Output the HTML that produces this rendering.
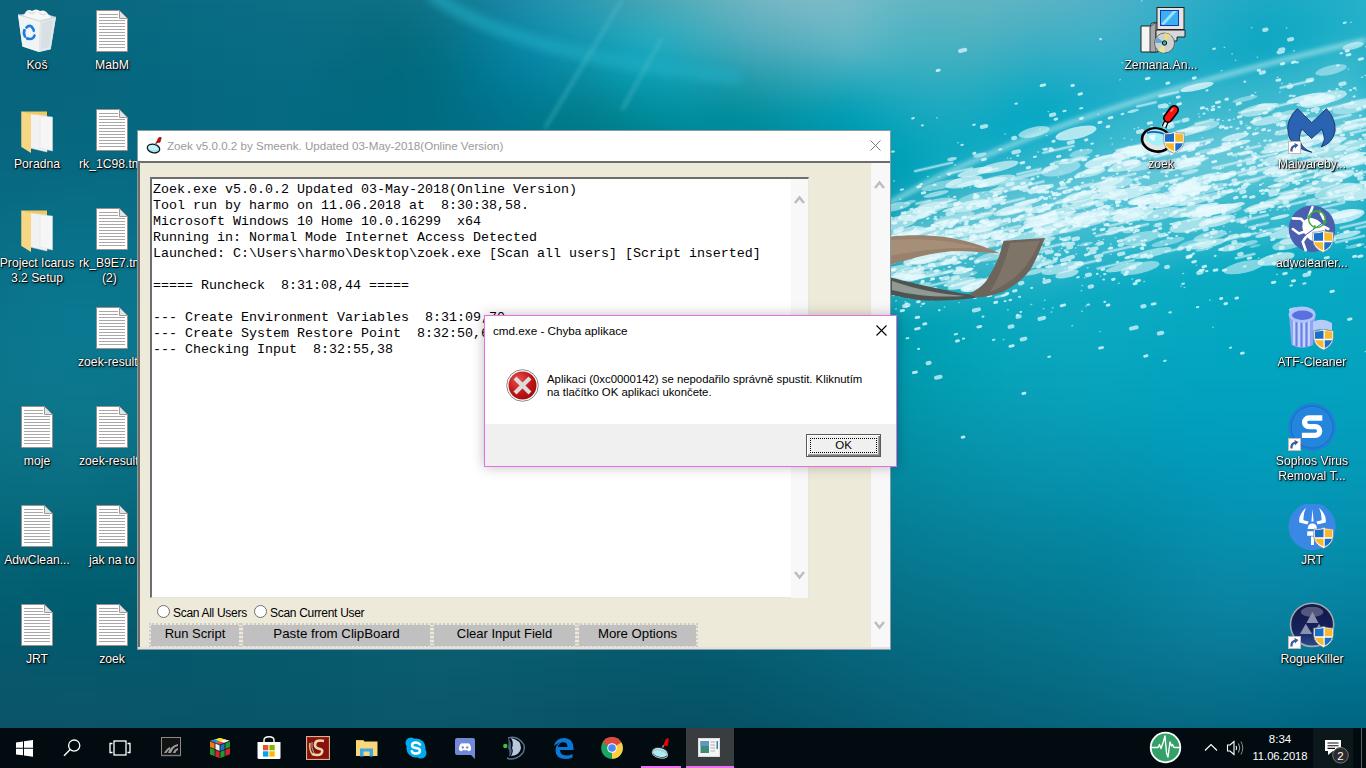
<!DOCTYPE html>
<html><head><meta charset="utf-8">
<style>
*{margin:0;padding:0;box-sizing:border-box}
html,body{width:1366px;height:768px;overflow:hidden;font-family:"Liberation Sans",sans-serif;background:#0a6078}
.a{position:absolute}
.lbl{position:absolute;width:76px;text-align:center;color:#fff;font-size:12.2px;line-height:15px;text-shadow:0 0 1px #000,1px 1px 1px #000,0 1px 3px rgba(0,0,0,.7)}
.ic{position:absolute}
#zw{position:absolute;left:137px;top:130px;width:754px;height:520px;background:#fff;border:1px solid #8a9aa0}
#zt{position:absolute;left:0;top:0;width:752px;height:31px;background:#fff}
#ztitle{position:absolute;left:29px;top:8px;font-size:11.6px;color:#9a9a9a;white-space:nowrap}
#zbody{position:absolute;left:0;top:30px;width:752px;height:488px;background:#EEEADA;border-top:2px solid #6d6d6d;border-left:2px solid #6d6d6d}
#tb{position:absolute;left:10px;top:14px;width:659px;height:421px;background:#fff;border-top:2px solid #6e6e6e;border-left:2px solid #6e6e6e;border-right:1px solid #e6e6e6;border-bottom:1px solid #e6e6e6}
#tbtext{position:absolute;left:1px;top:3px;font-family:"Liberation Mono",monospace;font-size:13.33px;line-height:16px;white-space:pre;color:#000}
.btn{position:absolute;top:462px;height:21px;background:#c0c0c0;font-size:13px;text-align:center;line-height:18px;color:#000;white-space:nowrap}
.dot{position:absolute;border:2px dotted #cfcdc3}
.radio{position:absolute;width:13px;height:13px;border-radius:50%;background:#fff;border:1px solid #6f6f6f}
.rl{position:absolute;font-size:12px;color:#000;white-space:nowrap;letter-spacing:-0.3px}
#dlg{position:absolute;left:484px;top:315px;width:413px;height:152px;background:#fff;border:1px solid #e46ee4;box-shadow:0 0 12px rgba(0,0,0,.25)}
#task{position:absolute;left:0;top:728px;width:1366px;height:40px;background:#020c10}
</style></head><body>
<svg id="bgsvg" width="1366" height="728" viewBox="0 0 1366 728" style="position:absolute;left:0;top:0"><defs>
<linearGradient id="gH" x1="0" y1="0" x2="1" y2="0">
 <stop offset="0" stop-color="#0b6077"/>
 <stop offset="0.3" stop-color="#0a6076"/>
 <stop offset="0.55" stop-color="#0c7890"/>
 <stop offset="0.68" stop-color="#1296ae"/>
 <stop offset="1" stop-color="#16a2ba"/>
</linearGradient>
<linearGradient id="gV" x1="0" y1="0" x2="0" y2="1">
 <stop offset="0" stop-color="#003040" stop-opacity="0"/>
 <stop offset="0.5" stop-color="#003040" stop-opacity="0"/>
 <stop offset="1" stop-color="#003040" stop-opacity="0.3"/>
</linearGradient>
<filter id="bgr" x="-2%" y="-4%" width="104%" height="108%" color-interpolation-filters="sRGB"><feGaussianBlur stdDeviation="7"/></filter>
<filter id="b60" x="-50%" y="-50%" width="200%" height="200%"><feGaussianBlur stdDeviation="60"/></filter>
<filter id="b40" x="-50%" y="-50%" width="200%" height="200%"><feGaussianBlur stdDeviation="40"/></filter>
<filter id="b25" x="-50%" y="-50%" width="200%" height="200%"><feGaussianBlur stdDeviation="25"/></filter>
<filter id="b15" x="-50%" y="-50%" width="200%" height="200%"><feGaussianBlur stdDeviation="15"/></filter>
<filter id="b12" x="-50%" y="-50%" width="200%" height="200%"><feGaussianBlur stdDeviation="12"/></filter>
<filter id="b6" x="-50%" y="-50%" width="200%" height="200%"><feGaussianBlur stdDeviation="6"/></filter>
<filter id="b4" x="-50%" y="-50%" width="200%" height="200%"><feGaussianBlur stdDeviation="4"/></filter>
<filter id="b2" x="-50%" y="-50%" width="200%" height="200%"><feGaussianBlur stdDeviation="2"/></filter>
<filter id="b1" x="-50%" y="-50%" width="200%" height="200%"><feGaussianBlur stdDeviation="0.7"/></filter>
</defs>
<rect width="1366" height="728" fill="#0a6a80"/><defs><linearGradient id="r0" gradientUnits="userSpaceOnUse" x1="-40" y1="0" x2="1406" y2="0"><stop offset="0.017" stop-color="#0d647c"/><stop offset="0.039" stop-color="#0d657d"/><stop offset="0.061" stop-color="#0c667e"/><stop offset="0.083" stop-color="#0c687f"/><stop offset="0.105" stop-color="#0c6981"/><stop offset="0.127" stop-color="#0d6b82"/><stop offset="0.149" stop-color="#0d6c83"/><stop offset="0.172" stop-color="#0e6d84"/><stop offset="0.194" stop-color="#106e85"/><stop offset="0.216" stop-color="#116f86"/><stop offset="0.238" stop-color="#126f86"/><stop offset="0.260" stop-color="#137086"/><stop offset="0.282" stop-color="#147186"/><stop offset="0.304" stop-color="#167488"/><stop offset="0.326" stop-color="#19788e"/><stop offset="0.349" stop-color="#1d7f96"/><stop offset="0.371" stop-color="#2386a0"/><stop offset="0.393" stop-color="#2a8ea8"/><stop offset="0.415" stop-color="#3496ad"/><stop offset="0.437" stop-color="#409caf"/><stop offset="0.459" stop-color="#4da1b0"/><stop offset="0.481" stop-color="#5aa7b3"/><stop offset="0.503" stop-color="#66adb9"/><stop offset="0.526" stop-color="#73b3be"/><stop offset="0.548" stop-color="#7db7c2"/><stop offset="0.570" stop-color="#84bac5"/><stop offset="0.592" stop-color="#86bcc7"/><stop offset="0.614" stop-color="#82bcc8"/><stop offset="0.636" stop-color="#78bbc6"/><stop offset="0.658" stop-color="#70b9c5"/><stop offset="0.680" stop-color="#6eb8c3"/><stop offset="0.703" stop-color="#6cb7c3"/><stop offset="0.725" stop-color="#6ab6c4"/><stop offset="0.747" stop-color="#65b5c5"/><stop offset="0.769" stop-color="#60b4c6"/><stop offset="0.791" stop-color="#58b3c7"/><stop offset="0.813" stop-color="#4eb1c7"/><stop offset="0.835" stop-color="#42afc7"/><stop offset="0.858" stop-color="#37adc6"/><stop offset="0.880" stop-color="#2cacc6"/><stop offset="0.902" stop-color="#26abc5"/><stop offset="0.924" stop-color="#25acc6"/><stop offset="0.946" stop-color="#27afc7"/><stop offset="0.968" stop-color="#2bb1c9"/><stop offset="0.990" stop-color="#2fb3ca"/><stop offset="1.012" stop-color="#31b4cb"/></linearGradient><linearGradient id="r1" gradientUnits="userSpaceOnUse" x1="-40" y1="0" x2="1406" y2="0"><stop offset="0.017" stop-color="#0c647c"/><stop offset="0.039" stop-color="#0b657c"/><stop offset="0.061" stop-color="#0b667e"/><stop offset="0.083" stop-color="#0b677f"/><stop offset="0.105" stop-color="#0a6980"/><stop offset="0.127" stop-color="#0b6a82"/><stop offset="0.149" stop-color="#0b6c83"/><stop offset="0.172" stop-color="#0c6d84"/><stop offset="0.194" stop-color="#0d6d85"/><stop offset="0.216" stop-color="#0e6e85"/><stop offset="0.238" stop-color="#0f6f85"/><stop offset="0.260" stop-color="#106f85"/><stop offset="0.282" stop-color="#116f84"/><stop offset="0.304" stop-color="#117186"/><stop offset="0.326" stop-color="#13768b"/><stop offset="0.349" stop-color="#177d95"/><stop offset="0.371" stop-color="#1c85a0"/><stop offset="0.393" stop-color="#228da9"/><stop offset="0.415" stop-color="#2b95ae"/><stop offset="0.437" stop-color="#369cb0"/><stop offset="0.459" stop-color="#43a1b1"/><stop offset="0.481" stop-color="#4fa7b4"/><stop offset="0.503" stop-color="#5cadba"/><stop offset="0.526" stop-color="#69b2be"/><stop offset="0.548" stop-color="#75b5c2"/><stop offset="0.570" stop-color="#7cb8c5"/><stop offset="0.592" stop-color="#7fbbc7"/><stop offset="0.614" stop-color="#7bbbc7"/><stop offset="0.636" stop-color="#70b9c6"/><stop offset="0.658" stop-color="#67b7c4"/><stop offset="0.680" stop-color="#66b6c3"/><stop offset="0.703" stop-color="#65b5c2"/><stop offset="0.725" stop-color="#62b5c3"/><stop offset="0.747" stop-color="#5eb4c5"/><stop offset="0.769" stop-color="#59b3c6"/><stop offset="0.791" stop-color="#52b2c8"/><stop offset="0.813" stop-color="#49b1c8"/><stop offset="0.835" stop-color="#3daec7"/><stop offset="0.858" stop-color="#30acc6"/><stop offset="0.880" stop-color="#26abc5"/><stop offset="0.902" stop-color="#1faac5"/><stop offset="0.924" stop-color="#1fabc6"/><stop offset="0.946" stop-color="#23aec7"/><stop offset="0.968" stop-color="#28b0c9"/><stop offset="0.990" stop-color="#2cb2ca"/><stop offset="1.012" stop-color="#2eb4cb"/></linearGradient><linearGradient id="r2" gradientUnits="userSpaceOnUse" x1="-40" y1="0" x2="1406" y2="0"><stop offset="0.017" stop-color="#0b647b"/><stop offset="0.039" stop-color="#0a657c"/><stop offset="0.061" stop-color="#09667d"/><stop offset="0.083" stop-color="#09677f"/><stop offset="0.105" stop-color="#096880"/><stop offset="0.127" stop-color="#096a81"/><stop offset="0.149" stop-color="#096b83"/><stop offset="0.172" stop-color="#0a6c84"/><stop offset="0.194" stop-color="#0b6d85"/><stop offset="0.216" stop-color="#0c6d85"/><stop offset="0.238" stop-color="#0d6e85"/><stop offset="0.260" stop-color="#0d6e84"/><stop offset="0.282" stop-color="#0d6e83"/><stop offset="0.304" stop-color="#0d6f83"/><stop offset="0.326" stop-color="#0e7389"/><stop offset="0.349" stop-color="#117b93"/><stop offset="0.371" stop-color="#1583a0"/><stop offset="0.393" stop-color="#1b8caa"/><stop offset="0.415" stop-color="#2294af"/><stop offset="0.437" stop-color="#2c9bb2"/><stop offset="0.459" stop-color="#37a1b3"/><stop offset="0.481" stop-color="#43a7b6"/><stop offset="0.503" stop-color="#4facbb"/><stop offset="0.526" stop-color="#5eb0be"/><stop offset="0.548" stop-color="#6ab3c1"/><stop offset="0.570" stop-color="#73b6c4"/><stop offset="0.592" stop-color="#77b9c6"/><stop offset="0.614" stop-color="#75bac7"/><stop offset="0.636" stop-color="#68b8c6"/><stop offset="0.658" stop-color="#5eb6c3"/><stop offset="0.680" stop-color="#5eb5c2"/><stop offset="0.703" stop-color="#5eb4c2"/><stop offset="0.725" stop-color="#5ab3c3"/><stop offset="0.747" stop-color="#55b3c4"/><stop offset="0.769" stop-color="#51b2c6"/><stop offset="0.791" stop-color="#4cb1c8"/><stop offset="0.813" stop-color="#43b0c8"/><stop offset="0.835" stop-color="#37aec7"/><stop offset="0.858" stop-color="#2bacc6"/><stop offset="0.880" stop-color="#20aac5"/><stop offset="0.902" stop-color="#19a9c4"/><stop offset="0.924" stop-color="#19abc5"/><stop offset="0.946" stop-color="#1fadc7"/><stop offset="0.968" stop-color="#25b0c9"/><stop offset="0.990" stop-color="#29b2ca"/><stop offset="1.012" stop-color="#2cb3cb"/></linearGradient><linearGradient id="r3" gradientUnits="userSpaceOnUse" x1="-40" y1="0" x2="1406" y2="0"><stop offset="0.017" stop-color="#09647b"/><stop offset="0.039" stop-color="#09647c"/><stop offset="0.061" stop-color="#08657d"/><stop offset="0.083" stop-color="#08677e"/><stop offset="0.105" stop-color="#086880"/><stop offset="0.127" stop-color="#086981"/><stop offset="0.149" stop-color="#086b82"/><stop offset="0.172" stop-color="#086c84"/><stop offset="0.194" stop-color="#096c84"/><stop offset="0.216" stop-color="#0a6d85"/><stop offset="0.238" stop-color="#0b6d85"/><stop offset="0.260" stop-color="#0b6d83"/><stop offset="0.282" stop-color="#0a6c81"/><stop offset="0.304" stop-color="#096d81"/><stop offset="0.326" stop-color="#0a7186"/><stop offset="0.349" stop-color="#0c7992"/><stop offset="0.371" stop-color="#0f829f"/><stop offset="0.393" stop-color="#148baa"/><stop offset="0.415" stop-color="#1a93af"/><stop offset="0.437" stop-color="#229bb3"/><stop offset="0.459" stop-color="#2aa3b8"/><stop offset="0.481" stop-color="#35a9bb"/><stop offset="0.503" stop-color="#42acbc"/><stop offset="0.526" stop-color="#51aebd"/><stop offset="0.548" stop-color="#5fb0bf"/><stop offset="0.570" stop-color="#67b3c2"/><stop offset="0.592" stop-color="#6db6c5"/><stop offset="0.614" stop-color="#6db8c7"/><stop offset="0.636" stop-color="#60b7c5"/><stop offset="0.658" stop-color="#56b4c3"/><stop offset="0.680" stop-color="#55b3c1"/><stop offset="0.703" stop-color="#56b3c1"/><stop offset="0.725" stop-color="#51b2c2"/><stop offset="0.747" stop-color="#4cb1c4"/><stop offset="0.769" stop-color="#48b1c6"/><stop offset="0.791" stop-color="#45b1c8"/><stop offset="0.813" stop-color="#3cafc8"/><stop offset="0.835" stop-color="#31adc7"/><stop offset="0.858" stop-color="#25abc6"/><stop offset="0.880" stop-color="#1aa9c5"/><stop offset="0.902" stop-color="#13a8c4"/><stop offset="0.924" stop-color="#15aac5"/><stop offset="0.946" stop-color="#1cadc7"/><stop offset="0.968" stop-color="#22b0c9"/><stop offset="0.990" stop-color="#26b2ca"/><stop offset="1.012" stop-color="#29b3ca"/></linearGradient><linearGradient id="r4" gradientUnits="userSpaceOnUse" x1="-40" y1="0" x2="1406" y2="0"><stop offset="0.017" stop-color="#09637b"/><stop offset="0.039" stop-color="#08647c"/><stop offset="0.061" stop-color="#07657d"/><stop offset="0.083" stop-color="#07667e"/><stop offset="0.105" stop-color="#07687f"/><stop offset="0.127" stop-color="#076981"/><stop offset="0.149" stop-color="#066a82"/><stop offset="0.172" stop-color="#076b83"/><stop offset="0.194" stop-color="#086c84"/><stop offset="0.216" stop-color="#096c85"/><stop offset="0.238" stop-color="#096c84"/><stop offset="0.260" stop-color="#086c82"/><stop offset="0.282" stop-color="#076b80"/><stop offset="0.304" stop-color="#066b7f"/><stop offset="0.326" stop-color="#066f84"/><stop offset="0.349" stop-color="#077790"/><stop offset="0.371" stop-color="#0a809d"/><stop offset="0.393" stop-color="#0d89a9"/><stop offset="0.415" stop-color="#1391ae"/><stop offset="0.437" stop-color="#1899b3"/><stop offset="0.459" stop-color="#1da4bb"/><stop offset="0.481" stop-color="#26aabf"/><stop offset="0.503" stop-color="#34aabc"/><stop offset="0.526" stop-color="#43aabb"/><stop offset="0.548" stop-color="#51acbc"/><stop offset="0.570" stop-color="#59afbe"/><stop offset="0.592" stop-color="#60b3c2"/><stop offset="0.614" stop-color="#63b6c5"/><stop offset="0.636" stop-color="#57b5c4"/><stop offset="0.658" stop-color="#4db3c2"/><stop offset="0.680" stop-color="#4cb2c1"/><stop offset="0.703" stop-color="#4db1c0"/><stop offset="0.725" stop-color="#46b0c2"/><stop offset="0.747" stop-color="#40afc4"/><stop offset="0.769" stop-color="#3eb0c6"/><stop offset="0.791" stop-color="#3cb0c8"/><stop offset="0.813" stop-color="#35aec8"/><stop offset="0.835" stop-color="#2badc7"/><stop offset="0.858" stop-color="#21abc6"/><stop offset="0.880" stop-color="#17a9c5"/><stop offset="0.902" stop-color="#10a8c4"/><stop offset="0.924" stop-color="#12aac5"/><stop offset="0.946" stop-color="#19adc7"/><stop offset="0.968" stop-color="#20b0c8"/><stop offset="0.990" stop-color="#24b1c9"/><stop offset="1.012" stop-color="#26b3ca"/></linearGradient><linearGradient id="r5" gradientUnits="userSpaceOnUse" x1="-40" y1="0" x2="1406" y2="0"><stop offset="0.017" stop-color="#08647c"/><stop offset="0.039" stop-color="#07647c"/><stop offset="0.061" stop-color="#07657d"/><stop offset="0.083" stop-color="#07667e"/><stop offset="0.105" stop-color="#06677f"/><stop offset="0.127" stop-color="#066980"/><stop offset="0.149" stop-color="#066a82"/><stop offset="0.172" stop-color="#066a83"/><stop offset="0.194" stop-color="#076b83"/><stop offset="0.216" stop-color="#086c84"/><stop offset="0.238" stop-color="#086c84"/><stop offset="0.260" stop-color="#076b82"/><stop offset="0.282" stop-color="#056a7f"/><stop offset="0.304" stop-color="#046a7e"/><stop offset="0.326" stop-color="#036e83"/><stop offset="0.349" stop-color="#04758e"/><stop offset="0.371" stop-color="#057d9b"/><stop offset="0.393" stop-color="#0886a6"/><stop offset="0.415" stop-color="#0c8daa"/><stop offset="0.437" stop-color="#1096af"/><stop offset="0.459" stop-color="#12a2ba"/><stop offset="0.481" stop-color="#19a7be"/><stop offset="0.503" stop-color="#26a6b9"/><stop offset="0.526" stop-color="#33a5b6"/><stop offset="0.548" stop-color="#40a6b7"/><stop offset="0.570" stop-color="#48a9ba"/><stop offset="0.592" stop-color="#4eaebe"/><stop offset="0.614" stop-color="#53b2c3"/><stop offset="0.636" stop-color="#4ab2c3"/><stop offset="0.658" stop-color="#43b0c1"/><stop offset="0.680" stop-color="#42b0c0"/><stop offset="0.703" stop-color="#42afc0"/><stop offset="0.725" stop-color="#3aaec2"/><stop offset="0.747" stop-color="#33aec4"/><stop offset="0.769" stop-color="#32aec6"/><stop offset="0.791" stop-color="#32aec8"/><stop offset="0.813" stop-color="#2eaec8"/><stop offset="0.835" stop-color="#26adc7"/><stop offset="0.858" stop-color="#1dabc6"/><stop offset="0.880" stop-color="#14a9c5"/><stop offset="0.902" stop-color="#0ea8c4"/><stop offset="0.924" stop-color="#10aac5"/><stop offset="0.946" stop-color="#17adc7"/><stop offset="0.968" stop-color="#1dafc8"/><stop offset="0.990" stop-color="#21b1c9"/><stop offset="1.012" stop-color="#24b2ca"/></linearGradient><linearGradient id="r6" gradientUnits="userSpaceOnUse" x1="-40" y1="0" x2="1406" y2="0"><stop offset="0.017" stop-color="#08647c"/><stop offset="0.039" stop-color="#07647d"/><stop offset="0.061" stop-color="#06657d"/><stop offset="0.083" stop-color="#06667e"/><stop offset="0.105" stop-color="#06677f"/><stop offset="0.127" stop-color="#066880"/><stop offset="0.149" stop-color="#066981"/><stop offset="0.172" stop-color="#066a82"/><stop offset="0.194" stop-color="#066a83"/><stop offset="0.216" stop-color="#076b84"/><stop offset="0.238" stop-color="#066b83"/><stop offset="0.260" stop-color="#056a81"/><stop offset="0.282" stop-color="#046a7f"/><stop offset="0.304" stop-color="#026a7f"/><stop offset="0.326" stop-color="#016d82"/><stop offset="0.349" stop-color="#01738c"/><stop offset="0.371" stop-color="#027b97"/><stop offset="0.393" stop-color="#0482a0"/><stop offset="0.415" stop-color="#0889a3"/><stop offset="0.437" stop-color="#0b91a7"/><stop offset="0.459" stop-color="#0b9bb2"/><stop offset="0.481" stop-color="#10a1b7"/><stop offset="0.503" stop-color="#19a0b3"/><stop offset="0.526" stop-color="#249eb0"/><stop offset="0.548" stop-color="#2e9fb0"/><stop offset="0.570" stop-color="#35a3b4"/><stop offset="0.592" stop-color="#39a8ba"/><stop offset="0.614" stop-color="#3bacbf"/><stop offset="0.636" stop-color="#38aec0"/><stop offset="0.658" stop-color="#36aec0"/><stop offset="0.680" stop-color="#37aec0"/><stop offset="0.703" stop-color="#34aec0"/><stop offset="0.725" stop-color="#2cacc2"/><stop offset="0.747" stop-color="#25acc4"/><stop offset="0.769" stop-color="#26acc6"/><stop offset="0.791" stop-color="#28adc8"/><stop offset="0.813" stop-color="#27adc8"/><stop offset="0.835" stop-color="#21acc8"/><stop offset="0.858" stop-color="#1aabc7"/><stop offset="0.880" stop-color="#12aac5"/><stop offset="0.902" stop-color="#0ea9c5"/><stop offset="0.924" stop-color="#0faac5"/><stop offset="0.946" stop-color="#15adc7"/><stop offset="0.968" stop-color="#1aafc8"/><stop offset="0.990" stop-color="#1eb0c9"/><stop offset="1.012" stop-color="#21b1ca"/></linearGradient><linearGradient id="r7" gradientUnits="userSpaceOnUse" x1="-40" y1="0" x2="1406" y2="0"><stop offset="0.017" stop-color="#07647c"/><stop offset="0.039" stop-color="#07657d"/><stop offset="0.061" stop-color="#06667e"/><stop offset="0.083" stop-color="#06667e"/><stop offset="0.105" stop-color="#06677f"/><stop offset="0.127" stop-color="#066880"/><stop offset="0.149" stop-color="#066880"/><stop offset="0.172" stop-color="#066981"/><stop offset="0.194" stop-color="#066a82"/><stop offset="0.216" stop-color="#066a83"/><stop offset="0.238" stop-color="#056a83"/><stop offset="0.260" stop-color="#046a81"/><stop offset="0.282" stop-color="#02697f"/><stop offset="0.304" stop-color="#016a7f"/><stop offset="0.326" stop-color="#006c82"/><stop offset="0.349" stop-color="#00728a"/><stop offset="0.371" stop-color="#007893"/><stop offset="0.393" stop-color="#027e99"/><stop offset="0.415" stop-color="#04849b"/><stop offset="0.437" stop-color="#078a9d"/><stop offset="0.459" stop-color="#0793a7"/><stop offset="0.481" stop-color="#099aad"/><stop offset="0.503" stop-color="#0f99ac"/><stop offset="0.526" stop-color="#1597a8"/><stop offset="0.548" stop-color="#1c98a8"/><stop offset="0.570" stop-color="#229dae"/><stop offset="0.592" stop-color="#24a2b5"/><stop offset="0.614" stop-color="#23a6ba"/><stop offset="0.636" stop-color="#26a9bd"/><stop offset="0.658" stop-color="#29abbf"/><stop offset="0.680" stop-color="#2bacc0"/><stop offset="0.703" stop-color="#27acc1"/><stop offset="0.725" stop-color="#1eabc2"/><stop offset="0.747" stop-color="#17aac4"/><stop offset="0.769" stop-color="#1babc6"/><stop offset="0.791" stop-color="#1facc8"/><stop offset="0.813" stop-color="#20adc8"/><stop offset="0.835" stop-color="#1dadc8"/><stop offset="0.858" stop-color="#18acc7"/><stop offset="0.880" stop-color="#12aac6"/><stop offset="0.902" stop-color="#0eaac5"/><stop offset="0.924" stop-color="#0fabc6"/><stop offset="0.946" stop-color="#13adc7"/><stop offset="0.968" stop-color="#18afc8"/><stop offset="0.990" stop-color="#1cb0c9"/><stop offset="1.012" stop-color="#1fb1c9"/></linearGradient><linearGradient id="r8" gradientUnits="userSpaceOnUse" x1="-40" y1="0" x2="1406" y2="0"><stop offset="0.017" stop-color="#07657d"/><stop offset="0.039" stop-color="#07657d"/><stop offset="0.061" stop-color="#06667e"/><stop offset="0.083" stop-color="#06677f"/><stop offset="0.105" stop-color="#06677f"/><stop offset="0.127" stop-color="#066880"/><stop offset="0.149" stop-color="#066880"/><stop offset="0.172" stop-color="#066981"/><stop offset="0.194" stop-color="#066982"/><stop offset="0.216" stop-color="#056a82"/><stop offset="0.238" stop-color="#046a82"/><stop offset="0.260" stop-color="#036a81"/><stop offset="0.282" stop-color="#026980"/><stop offset="0.304" stop-color="#006a80"/><stop offset="0.326" stop-color="#006c82"/><stop offset="0.349" stop-color="#007088"/><stop offset="0.371" stop-color="#00758f"/><stop offset="0.393" stop-color="#007a93"/><stop offset="0.415" stop-color="#027f94"/><stop offset="0.437" stop-color="#048394"/><stop offset="0.459" stop-color="#038b9c"/><stop offset="0.481" stop-color="#0392a4"/><stop offset="0.503" stop-color="#0693a4"/><stop offset="0.526" stop-color="#0991a1"/><stop offset="0.548" stop-color="#0d92a2"/><stop offset="0.570" stop-color="#1197a9"/><stop offset="0.592" stop-color="#109cb0"/><stop offset="0.614" stop-color="#0da0b6"/><stop offset="0.636" stop-color="#15a5bb"/><stop offset="0.658" stop-color="#1ca8be"/><stop offset="0.680" stop-color="#20aac0"/><stop offset="0.703" stop-color="#1caac1"/><stop offset="0.725" stop-color="#12a9c3"/><stop offset="0.747" stop-color="#0ba9c4"/><stop offset="0.769" stop-color="#11aac6"/><stop offset="0.791" stop-color="#17acc8"/><stop offset="0.813" stop-color="#1aadc8"/><stop offset="0.835" stop-color="#19adc8"/><stop offset="0.858" stop-color="#16acc7"/><stop offset="0.880" stop-color="#12abc6"/><stop offset="0.902" stop-color="#0eabc6"/><stop offset="0.924" stop-color="#0fabc6"/><stop offset="0.946" stop-color="#12adc7"/><stop offset="0.968" stop-color="#16aec8"/><stop offset="0.990" stop-color="#1aafc8"/><stop offset="1.012" stop-color="#1db0c9"/></linearGradient><linearGradient id="r9" gradientUnits="userSpaceOnUse" x1="-40" y1="0" x2="1406" y2="0"><stop offset="0.017" stop-color="#07657d"/><stop offset="0.039" stop-color="#07667e"/><stop offset="0.061" stop-color="#06677f"/><stop offset="0.083" stop-color="#06677f"/><stop offset="0.105" stop-color="#066880"/><stop offset="0.127" stop-color="#066880"/><stop offset="0.149" stop-color="#066880"/><stop offset="0.172" stop-color="#066981"/><stop offset="0.194" stop-color="#056981"/><stop offset="0.216" stop-color="#056a82"/><stop offset="0.238" stop-color="#046a81"/><stop offset="0.260" stop-color="#036980"/><stop offset="0.282" stop-color="#016980"/><stop offset="0.304" stop-color="#006a80"/><stop offset="0.326" stop-color="#006c82"/><stop offset="0.349" stop-color="#006f86"/><stop offset="0.371" stop-color="#00738b"/><stop offset="0.393" stop-color="#00778d"/><stop offset="0.415" stop-color="#007a8d"/><stop offset="0.437" stop-color="#017e8d"/><stop offset="0.459" stop-color="#008594"/><stop offset="0.481" stop-color="#008b9b"/><stop offset="0.503" stop-color="#008d9d"/><stop offset="0.526" stop-color="#008c9c"/><stop offset="0.548" stop-color="#018d9d"/><stop offset="0.570" stop-color="#0392a4"/><stop offset="0.592" stop-color="#0197ac"/><stop offset="0.614" stop-color="#009cb3"/><stop offset="0.636" stop-color="#08a2b8"/><stop offset="0.658" stop-color="#12a6bd"/><stop offset="0.680" stop-color="#17a9c0"/><stop offset="0.703" stop-color="#14a9c2"/><stop offset="0.725" stop-color="#0aa8c3"/><stop offset="0.747" stop-color="#05a8c5"/><stop offset="0.769" stop-color="#0baac7"/><stop offset="0.791" stop-color="#12abc8"/><stop offset="0.813" stop-color="#16adc8"/><stop offset="0.835" stop-color="#17adc8"/><stop offset="0.858" stop-color="#15adc8"/><stop offset="0.880" stop-color="#12acc7"/><stop offset="0.902" stop-color="#0facc6"/><stop offset="0.924" stop-color="#0facc6"/><stop offset="0.946" stop-color="#11adc7"/><stop offset="0.968" stop-color="#14aec7"/><stop offset="0.990" stop-color="#18afc8"/><stop offset="1.012" stop-color="#1ab0c8"/></linearGradient><linearGradient id="r10" gradientUnits="userSpaceOnUse" x1="-40" y1="0" x2="1406" y2="0"><stop offset="0.017" stop-color="#07667e"/><stop offset="0.039" stop-color="#07677f"/><stop offset="0.061" stop-color="#07677f"/><stop offset="0.083" stop-color="#066880"/><stop offset="0.105" stop-color="#066880"/><stop offset="0.127" stop-color="#066880"/><stop offset="0.149" stop-color="#066880"/><stop offset="0.172" stop-color="#066981"/><stop offset="0.194" stop-color="#056981"/><stop offset="0.216" stop-color="#056981"/><stop offset="0.238" stop-color="#046981"/><stop offset="0.260" stop-color="#026980"/><stop offset="0.282" stop-color="#016980"/><stop offset="0.304" stop-color="#006a80"/><stop offset="0.326" stop-color="#006b81"/><stop offset="0.349" stop-color="#006e84"/><stop offset="0.371" stop-color="#007187"/><stop offset="0.393" stop-color="#007489"/><stop offset="0.415" stop-color="#007788"/><stop offset="0.437" stop-color="#007a89"/><stop offset="0.459" stop-color="#00808e"/><stop offset="0.481" stop-color="#008594"/><stop offset="0.503" stop-color="#008897"/><stop offset="0.526" stop-color="#008898"/><stop offset="0.548" stop-color="#008a9a"/><stop offset="0.570" stop-color="#008ea1"/><stop offset="0.592" stop-color="#0094a9"/><stop offset="0.614" stop-color="#0099b0"/><stop offset="0.636" stop-color="#009fb6"/><stop offset="0.658" stop-color="#0aa4bc"/><stop offset="0.680" stop-color="#11a8bf"/><stop offset="0.703" stop-color="#0fa9c2"/><stop offset="0.725" stop-color="#07a8c4"/><stop offset="0.747" stop-color="#03a8c5"/><stop offset="0.769" stop-color="#08aac7"/><stop offset="0.791" stop-color="#0eabc8"/><stop offset="0.813" stop-color="#13adc8"/><stop offset="0.835" stop-color="#15aec8"/><stop offset="0.858" stop-color="#15aec8"/><stop offset="0.880" stop-color="#12adc7"/><stop offset="0.902" stop-color="#0facc6"/><stop offset="0.924" stop-color="#0facc6"/><stop offset="0.946" stop-color="#10adc7"/><stop offset="0.968" stop-color="#13aec7"/><stop offset="0.990" stop-color="#16aec8"/><stop offset="1.012" stop-color="#18afc8"/></linearGradient><linearGradient id="r11" gradientUnits="userSpaceOnUse" x1="-40" y1="0" x2="1406" y2="0"><stop offset="0.017" stop-color="#08677f"/><stop offset="0.039" stop-color="#076780"/><stop offset="0.061" stop-color="#076880"/><stop offset="0.083" stop-color="#076981"/><stop offset="0.105" stop-color="#076981"/><stop offset="0.127" stop-color="#066981"/><stop offset="0.149" stop-color="#066981"/><stop offset="0.172" stop-color="#066981"/><stop offset="0.194" stop-color="#066981"/><stop offset="0.216" stop-color="#056a81"/><stop offset="0.238" stop-color="#046981"/><stop offset="0.260" stop-color="#026980"/><stop offset="0.282" stop-color="#01697f"/><stop offset="0.304" stop-color="#006a80"/><stop offset="0.326" stop-color="#006b81"/><stop offset="0.349" stop-color="#006d82"/><stop offset="0.371" stop-color="#006f84"/><stop offset="0.393" stop-color="#007285"/><stop offset="0.415" stop-color="#007585"/><stop offset="0.437" stop-color="#007886"/><stop offset="0.459" stop-color="#007d8a"/><stop offset="0.481" stop-color="#008190"/><stop offset="0.503" stop-color="#008493"/><stop offset="0.526" stop-color="#008595"/><stop offset="0.548" stop-color="#008799"/><stop offset="0.570" stop-color="#008c9f"/><stop offset="0.592" stop-color="#0091a7"/><stop offset="0.614" stop-color="#0097ae"/><stop offset="0.636" stop-color="#009db5"/><stop offset="0.658" stop-color="#05a3bb"/><stop offset="0.680" stop-color="#0ca7bf"/><stop offset="0.703" stop-color="#0ca8c2"/><stop offset="0.725" stop-color="#07a8c4"/><stop offset="0.747" stop-color="#04a9c6"/><stop offset="0.769" stop-color="#07aac7"/><stop offset="0.791" stop-color="#0cacc8"/><stop offset="0.813" stop-color="#11adc8"/><stop offset="0.835" stop-color="#14aec8"/><stop offset="0.858" stop-color="#14aec8"/><stop offset="0.880" stop-color="#12aec7"/><stop offset="0.902" stop-color="#10adc7"/><stop offset="0.924" stop-color="#0fadc6"/><stop offset="0.946" stop-color="#10adc6"/><stop offset="0.968" stop-color="#12adc7"/><stop offset="0.990" stop-color="#14aec7"/><stop offset="1.012" stop-color="#17aec7"/></linearGradient><linearGradient id="r12" gradientUnits="userSpaceOnUse" x1="-40" y1="0" x2="1406" y2="0"><stop offset="0.017" stop-color="#086880"/><stop offset="0.039" stop-color="#086881"/><stop offset="0.061" stop-color="#076981"/><stop offset="0.083" stop-color="#076a82"/><stop offset="0.105" stop-color="#076a82"/><stop offset="0.127" stop-color="#076a82"/><stop offset="0.149" stop-color="#076a82"/><stop offset="0.172" stop-color="#066a81"/><stop offset="0.194" stop-color="#066a81"/><stop offset="0.216" stop-color="#056a81"/><stop offset="0.238" stop-color="#046980"/><stop offset="0.260" stop-color="#026980"/><stop offset="0.282" stop-color="#01697f"/><stop offset="0.304" stop-color="#006a7f"/><stop offset="0.326" stop-color="#006b80"/><stop offset="0.349" stop-color="#006c81"/><stop offset="0.371" stop-color="#006e82"/><stop offset="0.393" stop-color="#007083"/><stop offset="0.415" stop-color="#007383"/><stop offset="0.437" stop-color="#007684"/><stop offset="0.459" stop-color="#007a88"/><stop offset="0.481" stop-color="#007e8c"/><stop offset="0.503" stop-color="#008190"/><stop offset="0.526" stop-color="#008393"/><stop offset="0.548" stop-color="#008698"/><stop offset="0.570" stop-color="#008a9e"/><stop offset="0.592" stop-color="#0090a5"/><stop offset="0.614" stop-color="#0096ad"/><stop offset="0.636" stop-color="#009cb4"/><stop offset="0.658" stop-color="#01a2ba"/><stop offset="0.680" stop-color="#09a6bf"/><stop offset="0.703" stop-color="#0ba8c2"/><stop offset="0.725" stop-color="#09a9c4"/><stop offset="0.747" stop-color="#06a9c6"/><stop offset="0.769" stop-color="#08aac7"/><stop offset="0.791" stop-color="#0cacc8"/><stop offset="0.813" stop-color="#10adc8"/><stop offset="0.835" stop-color="#13afc8"/><stop offset="0.858" stop-color="#14afc8"/><stop offset="0.880" stop-color="#12aec7"/><stop offset="0.902" stop-color="#10adc7"/><stop offset="0.924" stop-color="#0fadc6"/><stop offset="0.946" stop-color="#0fadc6"/><stop offset="0.968" stop-color="#11adc6"/><stop offset="0.990" stop-color="#13adc7"/><stop offset="1.012" stop-color="#15aec7"/></linearGradient><linearGradient id="r13" gradientUnits="userSpaceOnUse" x1="-40" y1="0" x2="1406" y2="0"><stop offset="0.017" stop-color="#086981"/><stop offset="0.039" stop-color="#086a82"/><stop offset="0.061" stop-color="#086b83"/><stop offset="0.083" stop-color="#076b83"/><stop offset="0.105" stop-color="#076c84"/><stop offset="0.127" stop-color="#076b83"/><stop offset="0.149" stop-color="#076b83"/><stop offset="0.172" stop-color="#076b82"/><stop offset="0.194" stop-color="#066a81"/><stop offset="0.216" stop-color="#056a81"/><stop offset="0.238" stop-color="#046a80"/><stop offset="0.260" stop-color="#03697f"/><stop offset="0.282" stop-color="#01697f"/><stop offset="0.304" stop-color="#006a7f"/><stop offset="0.326" stop-color="#006a7f"/><stop offset="0.349" stop-color="#006c80"/><stop offset="0.371" stop-color="#006d81"/><stop offset="0.393" stop-color="#006f81"/><stop offset="0.415" stop-color="#007281"/><stop offset="0.437" stop-color="#007583"/><stop offset="0.459" stop-color="#007886"/><stop offset="0.481" stop-color="#007c8b"/><stop offset="0.503" stop-color="#007f8f"/><stop offset="0.526" stop-color="#008293"/><stop offset="0.548" stop-color="#008597"/><stop offset="0.570" stop-color="#008a9d"/><stop offset="0.592" stop-color="#008fa4"/><stop offset="0.614" stop-color="#0095ac"/><stop offset="0.636" stop-color="#009bb3"/><stop offset="0.658" stop-color="#00a1b9"/><stop offset="0.680" stop-color="#08a5be"/><stop offset="0.703" stop-color="#0ca8c2"/><stop offset="0.725" stop-color="#0ca9c4"/><stop offset="0.747" stop-color="#0aaac6"/><stop offset="0.769" stop-color="#0aabc7"/><stop offset="0.791" stop-color="#0cacc8"/><stop offset="0.813" stop-color="#0faec8"/><stop offset="0.835" stop-color="#12afc8"/><stop offset="0.858" stop-color="#13afc8"/><stop offset="0.880" stop-color="#11aec7"/><stop offset="0.902" stop-color="#0fadc6"/><stop offset="0.924" stop-color="#0eadc6"/><stop offset="0.946" stop-color="#0eacc6"/><stop offset="0.968" stop-color="#0facc6"/><stop offset="0.990" stop-color="#11adc6"/><stop offset="1.012" stop-color="#13adc6"/></linearGradient><linearGradient id="r14" gradientUnits="userSpaceOnUse" x1="-40" y1="0" x2="1406" y2="0"><stop offset="0.017" stop-color="#086a82"/><stop offset="0.039" stop-color="#086b83"/><stop offset="0.061" stop-color="#086c84"/><stop offset="0.083" stop-color="#086d85"/><stop offset="0.105" stop-color="#076d85"/><stop offset="0.127" stop-color="#076d84"/><stop offset="0.149" stop-color="#076c84"/><stop offset="0.172" stop-color="#076c83"/><stop offset="0.194" stop-color="#066b82"/><stop offset="0.216" stop-color="#056a81"/><stop offset="0.238" stop-color="#046a80"/><stop offset="0.260" stop-color="#036a7f"/><stop offset="0.282" stop-color="#02697f"/><stop offset="0.304" stop-color="#006a7f"/><stop offset="0.326" stop-color="#006a7f"/><stop offset="0.349" stop-color="#006b7f"/><stop offset="0.371" stop-color="#006d80"/><stop offset="0.393" stop-color="#006f80"/><stop offset="0.415" stop-color="#007181"/><stop offset="0.437" stop-color="#007482"/><stop offset="0.459" stop-color="#007786"/><stop offset="0.481" stop-color="#007b8a"/><stop offset="0.503" stop-color="#007e8e"/><stop offset="0.526" stop-color="#008192"/><stop offset="0.548" stop-color="#008597"/><stop offset="0.570" stop-color="#00899d"/><stop offset="0.592" stop-color="#008fa4"/><stop offset="0.614" stop-color="#0095ab"/><stop offset="0.636" stop-color="#009bb2"/><stop offset="0.658" stop-color="#00a0b8"/><stop offset="0.680" stop-color="#08a5bd"/><stop offset="0.703" stop-color="#0ea8c1"/><stop offset="0.725" stop-color="#0faac4"/><stop offset="0.747" stop-color="#0dabc6"/><stop offset="0.769" stop-color="#0cacc7"/><stop offset="0.791" stop-color="#0dadc7"/><stop offset="0.813" stop-color="#0faec8"/><stop offset="0.835" stop-color="#11afc8"/><stop offset="0.858" stop-color="#11afc7"/><stop offset="0.880" stop-color="#10aec6"/><stop offset="0.902" stop-color="#0eadc6"/><stop offset="0.924" stop-color="#0dacc6"/><stop offset="0.946" stop-color="#0dacc6"/><stop offset="0.968" stop-color="#0eacc6"/><stop offset="0.990" stop-color="#10acc6"/><stop offset="1.012" stop-color="#12acc6"/></linearGradient><linearGradient id="r15" gradientUnits="userSpaceOnUse" x1="-40" y1="0" x2="1406" y2="0"><stop offset="0.017" stop-color="#096c84"/><stop offset="0.039" stop-color="#086d85"/><stop offset="0.061" stop-color="#086e86"/><stop offset="0.083" stop-color="#086e87"/><stop offset="0.105" stop-color="#086e86"/><stop offset="0.127" stop-color="#086e86"/><stop offset="0.149" stop-color="#086d85"/><stop offset="0.172" stop-color="#076c83"/><stop offset="0.194" stop-color="#076c82"/><stop offset="0.216" stop-color="#066b81"/><stop offset="0.238" stop-color="#056a80"/><stop offset="0.260" stop-color="#046a7f"/><stop offset="0.282" stop-color="#026a7f"/><stop offset="0.304" stop-color="#016a7e"/><stop offset="0.326" stop-color="#006a7e"/><stop offset="0.349" stop-color="#006b7f"/><stop offset="0.371" stop-color="#006d7f"/><stop offset="0.393" stop-color="#006e80"/><stop offset="0.415" stop-color="#007180"/><stop offset="0.437" stop-color="#007482"/><stop offset="0.459" stop-color="#007786"/><stop offset="0.481" stop-color="#007b8a"/><stop offset="0.503" stop-color="#007e8f"/><stop offset="0.526" stop-color="#008193"/><stop offset="0.548" stop-color="#008598"/><stop offset="0.570" stop-color="#00899e"/><stop offset="0.592" stop-color="#008fa4"/><stop offset="0.614" stop-color="#0094ab"/><stop offset="0.636" stop-color="#009ab1"/><stop offset="0.658" stop-color="#00a0b8"/><stop offset="0.680" stop-color="#08a5bd"/><stop offset="0.703" stop-color="#0fa8c1"/><stop offset="0.725" stop-color="#12aac4"/><stop offset="0.747" stop-color="#10abc6"/><stop offset="0.769" stop-color="#0eacc7"/><stop offset="0.791" stop-color="#0eadc7"/><stop offset="0.813" stop-color="#0faec7"/><stop offset="0.835" stop-color="#10aec7"/><stop offset="0.858" stop-color="#10aec6"/><stop offset="0.880" stop-color="#0faec6"/><stop offset="0.902" stop-color="#0dadc5"/><stop offset="0.924" stop-color="#0cacc5"/><stop offset="0.946" stop-color="#0cacc5"/><stop offset="0.968" stop-color="#0dabc5"/><stop offset="0.990" stop-color="#0eabc5"/><stop offset="1.012" stop-color="#10abc5"/></linearGradient><linearGradient id="r16" gradientUnits="userSpaceOnUse" x1="-40" y1="0" x2="1406" y2="0"><stop offset="0.017" stop-color="#096d85"/><stop offset="0.039" stop-color="#096e86"/><stop offset="0.061" stop-color="#086f88"/><stop offset="0.083" stop-color="#087088"/><stop offset="0.105" stop-color="#087088"/><stop offset="0.127" stop-color="#086f87"/><stop offset="0.149" stop-color="#086e86"/><stop offset="0.172" stop-color="#086d84"/><stop offset="0.194" stop-color="#076c83"/><stop offset="0.216" stop-color="#066b81"/><stop offset="0.238" stop-color="#056b80"/><stop offset="0.260" stop-color="#046a7f"/><stop offset="0.282" stop-color="#036a7e"/><stop offset="0.304" stop-color="#026a7e"/><stop offset="0.326" stop-color="#016a7e"/><stop offset="0.349" stop-color="#006b7e"/><stop offset="0.371" stop-color="#006d7f"/><stop offset="0.393" stop-color="#006e7f"/><stop offset="0.415" stop-color="#007181"/><stop offset="0.437" stop-color="#007383"/><stop offset="0.459" stop-color="#007786"/><stop offset="0.481" stop-color="#007b8b"/><stop offset="0.503" stop-color="#007e8f"/><stop offset="0.526" stop-color="#008294"/><stop offset="0.548" stop-color="#008599"/><stop offset="0.570" stop-color="#008a9e"/><stop offset="0.592" stop-color="#008fa4"/><stop offset="0.614" stop-color="#0094ab"/><stop offset="0.636" stop-color="#009ab1"/><stop offset="0.658" stop-color="#00a0b7"/><stop offset="0.680" stop-color="#08a5bc"/><stop offset="0.703" stop-color="#10a8c1"/><stop offset="0.725" stop-color="#14aac4"/><stop offset="0.747" stop-color="#12abc5"/><stop offset="0.769" stop-color="#0facc6"/><stop offset="0.791" stop-color="#0eadc7"/><stop offset="0.813" stop-color="#0eadc6"/><stop offset="0.835" stop-color="#0eaec6"/><stop offset="0.858" stop-color="#0eaec6"/><stop offset="0.880" stop-color="#0dadc5"/><stop offset="0.902" stop-color="#0cacc5"/><stop offset="0.924" stop-color="#0bacc5"/><stop offset="0.946" stop-color="#0babc5"/><stop offset="0.968" stop-color="#0cabc5"/><stop offset="0.990" stop-color="#0daac5"/><stop offset="1.012" stop-color="#0faac5"/></linearGradient><linearGradient id="r17" gradientUnits="userSpaceOnUse" x1="-40" y1="0" x2="1406" y2="0"><stop offset="0.017" stop-color="#096e87"/><stop offset="0.039" stop-color="#097088"/><stop offset="0.061" stop-color="#097189"/><stop offset="0.083" stop-color="#09728a"/><stop offset="0.105" stop-color="#08728a"/><stop offset="0.127" stop-color="#087188"/><stop offset="0.149" stop-color="#087087"/><stop offset="0.172" stop-color="#086e85"/><stop offset="0.194" stop-color="#086d83"/><stop offset="0.216" stop-color="#076c81"/><stop offset="0.238" stop-color="#066b80"/><stop offset="0.260" stop-color="#056a7f"/><stop offset="0.282" stop-color="#046a7e"/><stop offset="0.304" stop-color="#026a7e"/><stop offset="0.326" stop-color="#016b7e"/><stop offset="0.349" stop-color="#016b7e"/><stop offset="0.371" stop-color="#016d7f"/><stop offset="0.393" stop-color="#016e80"/><stop offset="0.415" stop-color="#017181"/><stop offset="0.437" stop-color="#017484"/><stop offset="0.459" stop-color="#017787"/><stop offset="0.481" stop-color="#007b8c"/><stop offset="0.503" stop-color="#007f90"/><stop offset="0.526" stop-color="#008295"/><stop offset="0.548" stop-color="#00869a"/><stop offset="0.570" stop-color="#008a9f"/><stop offset="0.592" stop-color="#008fa4"/><stop offset="0.614" stop-color="#0095aa"/><stop offset="0.636" stop-color="#009ab1"/><stop offset="0.658" stop-color="#00a0b6"/><stop offset="0.680" stop-color="#08a5bc"/><stop offset="0.703" stop-color="#10a8c0"/><stop offset="0.725" stop-color="#14abc3"/><stop offset="0.747" stop-color="#12acc5"/><stop offset="0.769" stop-color="#10acc6"/><stop offset="0.791" stop-color="#0eadc6"/><stop offset="0.813" stop-color="#0eadc6"/><stop offset="0.835" stop-color="#0dadc5"/><stop offset="0.858" stop-color="#0cadc5"/><stop offset="0.880" stop-color="#0bacc4"/><stop offset="0.902" stop-color="#0aacc4"/><stop offset="0.924" stop-color="#0aabc4"/><stop offset="0.946" stop-color="#0aaac4"/><stop offset="0.968" stop-color="#0baac4"/><stop offset="0.990" stop-color="#0caac4"/><stop offset="1.012" stop-color="#0daac4"/></linearGradient><linearGradient id="r18" gradientUnits="userSpaceOnUse" x1="-40" y1="0" x2="1406" y2="0"><stop offset="0.017" stop-color="#097088"/><stop offset="0.039" stop-color="#09718a"/><stop offset="0.061" stop-color="#09738b"/><stop offset="0.083" stop-color="#09738c"/><stop offset="0.105" stop-color="#09738b"/><stop offset="0.127" stop-color="#09728a"/><stop offset="0.149" stop-color="#097188"/><stop offset="0.172" stop-color="#086f85"/><stop offset="0.194" stop-color="#086e83"/><stop offset="0.216" stop-color="#076c81"/><stop offset="0.238" stop-color="#076b80"/><stop offset="0.260" stop-color="#066b7f"/><stop offset="0.282" stop-color="#046a7e"/><stop offset="0.304" stop-color="#036a7e"/><stop offset="0.326" stop-color="#026b7e"/><stop offset="0.349" stop-color="#026c7f"/><stop offset="0.371" stop-color="#026d7f"/><stop offset="0.393" stop-color="#026f80"/><stop offset="0.415" stop-color="#027182"/><stop offset="0.437" stop-color="#037485"/><stop offset="0.459" stop-color="#037788"/><stop offset="0.481" stop-color="#037b8d"/><stop offset="0.503" stop-color="#027f92"/><stop offset="0.526" stop-color="#008396"/><stop offset="0.548" stop-color="#00879b"/><stop offset="0.570" stop-color="#008b9f"/><stop offset="0.592" stop-color="#008fa5"/><stop offset="0.614" stop-color="#0095aa"/><stop offset="0.636" stop-color="#009ab0"/><stop offset="0.658" stop-color="#00a0b6"/><stop offset="0.680" stop-color="#08a5bb"/><stop offset="0.703" stop-color="#0fa8bf"/><stop offset="0.725" stop-color="#12aac2"/><stop offset="0.747" stop-color="#12acc4"/><stop offset="0.769" stop-color="#10acc5"/><stop offset="0.791" stop-color="#0eacc5"/><stop offset="0.813" stop-color="#0dadc5"/><stop offset="0.835" stop-color="#0cacc4"/><stop offset="0.858" stop-color="#0bacc4"/><stop offset="0.880" stop-color="#09acc3"/><stop offset="0.902" stop-color="#09abc3"/><stop offset="0.924" stop-color="#08aac3"/><stop offset="0.946" stop-color="#09aac3"/><stop offset="0.968" stop-color="#0aa9c4"/><stop offset="0.990" stop-color="#0ba9c3"/><stop offset="1.012" stop-color="#0ca9c3"/></linearGradient><linearGradient id="r19" gradientUnits="userSpaceOnUse" x1="-40" y1="0" x2="1406" y2="0"><stop offset="0.017" stop-color="#0a7189"/><stop offset="0.039" stop-color="#09738b"/><stop offset="0.061" stop-color="#09748d"/><stop offset="0.083" stop-color="#09758d"/><stop offset="0.105" stop-color="#09758d"/><stop offset="0.127" stop-color="#09738b"/><stop offset="0.149" stop-color="#097288"/><stop offset="0.172" stop-color="#097086"/><stop offset="0.194" stop-color="#086e84"/><stop offset="0.216" stop-color="#086d81"/><stop offset="0.238" stop-color="#076c80"/><stop offset="0.260" stop-color="#066b7f"/><stop offset="0.282" stop-color="#056a7e"/><stop offset="0.304" stop-color="#046b7e"/><stop offset="0.326" stop-color="#036b7e"/><stop offset="0.349" stop-color="#036c7f"/><stop offset="0.371" stop-color="#036d80"/><stop offset="0.393" stop-color="#036f81"/><stop offset="0.415" stop-color="#047183"/><stop offset="0.437" stop-color="#057486"/><stop offset="0.459" stop-color="#057889"/><stop offset="0.481" stop-color="#067c8e"/><stop offset="0.503" stop-color="#058093"/><stop offset="0.526" stop-color="#028497"/><stop offset="0.548" stop-color="#00879b"/><stop offset="0.570" stop-color="#008ba0"/><stop offset="0.592" stop-color="#0090a5"/><stop offset="0.614" stop-color="#0095aa"/><stop offset="0.636" stop-color="#009ab0"/><stop offset="0.658" stop-color="#01a0b5"/><stop offset="0.680" stop-color="#07a4ba"/><stop offset="0.703" stop-color="#0da8be"/><stop offset="0.725" stop-color="#10aac1"/><stop offset="0.747" stop-color="#11abc3"/><stop offset="0.769" stop-color="#0facc4"/><stop offset="0.791" stop-color="#0dacc4"/><stop offset="0.813" stop-color="#0cacc4"/><stop offset="0.835" stop-color="#0aacc3"/><stop offset="0.858" stop-color="#09abc3"/><stop offset="0.880" stop-color="#08abc2"/><stop offset="0.902" stop-color="#07aac2"/><stop offset="0.924" stop-color="#07a9c3"/><stop offset="0.946" stop-color="#08a9c3"/><stop offset="0.968" stop-color="#08a8c3"/><stop offset="0.990" stop-color="#0aa8c3"/><stop offset="1.012" stop-color="#0ba8c3"/></linearGradient><linearGradient id="r20" gradientUnits="userSpaceOnUse" x1="-40" y1="0" x2="1406" y2="0"><stop offset="0.017" stop-color="#0a728a"/><stop offset="0.039" stop-color="#0a748c"/><stop offset="0.061" stop-color="#0a768e"/><stop offset="0.083" stop-color="#09768f"/><stop offset="0.105" stop-color="#09768e"/><stop offset="0.127" stop-color="#09748c"/><stop offset="0.149" stop-color="#097289"/><stop offset="0.172" stop-color="#097086"/><stop offset="0.194" stop-color="#096f84"/><stop offset="0.216" stop-color="#086d82"/><stop offset="0.238" stop-color="#086c80"/><stop offset="0.260" stop-color="#076b7f"/><stop offset="0.282" stop-color="#066b7e"/><stop offset="0.304" stop-color="#056b7e"/><stop offset="0.326" stop-color="#046b7f"/><stop offset="0.349" stop-color="#046c7f"/><stop offset="0.371" stop-color="#046e80"/><stop offset="0.393" stop-color="#046f81"/><stop offset="0.415" stop-color="#057284"/><stop offset="0.437" stop-color="#067586"/><stop offset="0.459" stop-color="#07788a"/><stop offset="0.481" stop-color="#087c8f"/><stop offset="0.503" stop-color="#088094"/><stop offset="0.526" stop-color="#058498"/><stop offset="0.548" stop-color="#00879c"/><stop offset="0.570" stop-color="#008ba0"/><stop offset="0.592" stop-color="#0090a5"/><stop offset="0.614" stop-color="#0095aa"/><stop offset="0.636" stop-color="#009aaf"/><stop offset="0.658" stop-color="#019fb4"/><stop offset="0.680" stop-color="#06a4b9"/><stop offset="0.703" stop-color="#0ba8bd"/><stop offset="0.725" stop-color="#0eaac0"/><stop offset="0.747" stop-color="#0fabc2"/><stop offset="0.769" stop-color="#0eabc3"/><stop offset="0.791" stop-color="#0dabc3"/><stop offset="0.813" stop-color="#0babc3"/><stop offset="0.835" stop-color="#09abc2"/><stop offset="0.858" stop-color="#07aac2"/><stop offset="0.880" stop-color="#06aac1"/><stop offset="0.902" stop-color="#06a9c1"/><stop offset="0.924" stop-color="#06a9c2"/><stop offset="0.946" stop-color="#06a8c2"/><stop offset="0.968" stop-color="#07a7c2"/><stop offset="0.990" stop-color="#09a7c2"/><stop offset="1.012" stop-color="#0aa7c2"/></linearGradient><linearGradient id="r21" gradientUnits="userSpaceOnUse" x1="-40" y1="0" x2="1406" y2="0"><stop offset="0.017" stop-color="#0a738b"/><stop offset="0.039" stop-color="#0a758d"/><stop offset="0.061" stop-color="#0a778f"/><stop offset="0.083" stop-color="#0a7890"/><stop offset="0.105" stop-color="#0a778e"/><stop offset="0.127" stop-color="#0a758c"/><stop offset="0.149" stop-color="#0a7389"/><stop offset="0.172" stop-color="#097187"/><stop offset="0.194" stop-color="#096f84"/><stop offset="0.216" stop-color="#096d82"/><stop offset="0.238" stop-color="#086c80"/><stop offset="0.260" stop-color="#076b7f"/><stop offset="0.282" stop-color="#066b7e"/><stop offset="0.304" stop-color="#056b7e"/><stop offset="0.326" stop-color="#056b7f"/><stop offset="0.349" stop-color="#046c80"/><stop offset="0.371" stop-color="#056e81"/><stop offset="0.393" stop-color="#057082"/><stop offset="0.415" stop-color="#067284"/><stop offset="0.437" stop-color="#077587"/><stop offset="0.459" stop-color="#09788b"/><stop offset="0.481" stop-color="#0a7c90"/><stop offset="0.503" stop-color="#0a8094"/><stop offset="0.526" stop-color="#078499"/><stop offset="0.548" stop-color="#03879c"/><stop offset="0.570" stop-color="#008ba0"/><stop offset="0.592" stop-color="#0090a4"/><stop offset="0.614" stop-color="#0095a9"/><stop offset="0.636" stop-color="#009aae"/><stop offset="0.658" stop-color="#009fb3"/><stop offset="0.680" stop-color="#04a4b8"/><stop offset="0.703" stop-color="#09a7bc"/><stop offset="0.725" stop-color="#0ca9bf"/><stop offset="0.747" stop-color="#0daac1"/><stop offset="0.769" stop-color="#0daac2"/><stop offset="0.791" stop-color="#0caac2"/><stop offset="0.813" stop-color="#0aaac2"/><stop offset="0.835" stop-color="#08aac2"/><stop offset="0.858" stop-color="#06a9c1"/><stop offset="0.880" stop-color="#04a8c0"/><stop offset="0.902" stop-color="#04a8c1"/><stop offset="0.924" stop-color="#05a8c1"/><stop offset="0.946" stop-color="#05a7c2"/><stop offset="0.968" stop-color="#06a7c2"/><stop offset="0.990" stop-color="#08a6c1"/><stop offset="1.012" stop-color="#09a6c1"/></linearGradient><linearGradient id="r22" gradientUnits="userSpaceOnUse" x1="-40" y1="0" x2="1406" y2="0"><stop offset="0.017" stop-color="#0a748b"/><stop offset="0.039" stop-color="#0a768d"/><stop offset="0.061" stop-color="#0a778f"/><stop offset="0.083" stop-color="#0a7890"/><stop offset="0.105" stop-color="#0a778f"/><stop offset="0.127" stop-color="#0a758c"/><stop offset="0.149" stop-color="#0a7389"/><stop offset="0.172" stop-color="#0a7187"/><stop offset="0.194" stop-color="#096f84"/><stop offset="0.216" stop-color="#096d82"/><stop offset="0.238" stop-color="#086c80"/><stop offset="0.260" stop-color="#086b7f"/><stop offset="0.282" stop-color="#076b7e"/><stop offset="0.304" stop-color="#066b7e"/><stop offset="0.326" stop-color="#056c7f"/><stop offset="0.349" stop-color="#056d80"/><stop offset="0.371" stop-color="#066e81"/><stop offset="0.393" stop-color="#067083"/><stop offset="0.415" stop-color="#077285"/><stop offset="0.437" stop-color="#097588"/><stop offset="0.459" stop-color="#0a788b"/><stop offset="0.481" stop-color="#0b7c90"/><stop offset="0.503" stop-color="#0b8094"/><stop offset="0.526" stop-color="#098498"/><stop offset="0.548" stop-color="#05879c"/><stop offset="0.570" stop-color="#018ba0"/><stop offset="0.592" stop-color="#008fa4"/><stop offset="0.614" stop-color="#0094a9"/><stop offset="0.636" stop-color="#0099ad"/><stop offset="0.658" stop-color="#009eb2"/><stop offset="0.680" stop-color="#03a3b7"/><stop offset="0.703" stop-color="#07a6bb"/><stop offset="0.725" stop-color="#0aa8be"/><stop offset="0.747" stop-color="#0ca9c0"/><stop offset="0.769" stop-color="#0ca9c1"/><stop offset="0.791" stop-color="#0ba9c1"/><stop offset="0.813" stop-color="#09a9c1"/><stop offset="0.835" stop-color="#07a8c1"/><stop offset="0.858" stop-color="#05a8c0"/><stop offset="0.880" stop-color="#03a7c0"/><stop offset="0.902" stop-color="#03a7c0"/><stop offset="0.924" stop-color="#04a7c1"/><stop offset="0.946" stop-color="#05a6c1"/><stop offset="0.968" stop-color="#06a6c1"/><stop offset="0.990" stop-color="#07a5c1"/><stop offset="1.012" stop-color="#08a5c0"/></linearGradient><linearGradient id="r23" gradientUnits="userSpaceOnUse" x1="-40" y1="0" x2="1406" y2="0"><stop offset="0.017" stop-color="#0b748b"/><stop offset="0.039" stop-color="#0b768e"/><stop offset="0.061" stop-color="#0b788f"/><stop offset="0.083" stop-color="#0b7890"/><stop offset="0.105" stop-color="#0b778f"/><stop offset="0.127" stop-color="#0a768c"/><stop offset="0.149" stop-color="#0a7389"/><stop offset="0.172" stop-color="#0a7186"/><stop offset="0.194" stop-color="#096f84"/><stop offset="0.216" stop-color="#096d81"/><stop offset="0.238" stop-color="#096c80"/><stop offset="0.260" stop-color="#086b7f"/><stop offset="0.282" stop-color="#076b7e"/><stop offset="0.304" stop-color="#066b7e"/><stop offset="0.326" stop-color="#066c7f"/><stop offset="0.349" stop-color="#066d80"/><stop offset="0.371" stop-color="#066e82"/><stop offset="0.393" stop-color="#077083"/><stop offset="0.415" stop-color="#087285"/><stop offset="0.437" stop-color="#097588"/><stop offset="0.459" stop-color="#0b788c"/><stop offset="0.481" stop-color="#0c7c90"/><stop offset="0.503" stop-color="#0b8094"/><stop offset="0.526" stop-color="#098398"/><stop offset="0.548" stop-color="#06879b"/><stop offset="0.570" stop-color="#028a9f"/><stop offset="0.592" stop-color="#008fa3"/><stop offset="0.614" stop-color="#0093a8"/><stop offset="0.636" stop-color="#0098ac"/><stop offset="0.658" stop-color="#009db1"/><stop offset="0.680" stop-color="#02a2b5"/><stop offset="0.703" stop-color="#05a5b9"/><stop offset="0.725" stop-color="#08a7bc"/><stop offset="0.747" stop-color="#0aa7be"/><stop offset="0.769" stop-color="#0ba7bf"/><stop offset="0.791" stop-color="#0aa7c0"/><stop offset="0.813" stop-color="#08a7c0"/><stop offset="0.835" stop-color="#06a7c0"/><stop offset="0.858" stop-color="#04a7c0"/><stop offset="0.880" stop-color="#03a6c0"/><stop offset="0.902" stop-color="#02a6c0"/><stop offset="0.924" stop-color="#03a6c0"/><stop offset="0.946" stop-color="#04a5c0"/><stop offset="0.968" stop-color="#05a5c0"/><stop offset="0.990" stop-color="#06a4c0"/><stop offset="1.012" stop-color="#07a3bf"/></linearGradient><linearGradient id="r24" gradientUnits="userSpaceOnUse" x1="-40" y1="0" x2="1406" y2="0"><stop offset="0.017" stop-color="#0b748b"/><stop offset="0.039" stop-color="#0b768d"/><stop offset="0.061" stop-color="#0b788f"/><stop offset="0.083" stop-color="#0b788f"/><stop offset="0.105" stop-color="#0b778e"/><stop offset="0.127" stop-color="#0b758c"/><stop offset="0.149" stop-color="#0a7389"/><stop offset="0.172" stop-color="#0a7186"/><stop offset="0.194" stop-color="#0a6f83"/><stop offset="0.216" stop-color="#096d81"/><stop offset="0.238" stop-color="#096c7f"/><stop offset="0.260" stop-color="#086b7e"/><stop offset="0.282" stop-color="#076b7e"/><stop offset="0.304" stop-color="#076b7e"/><stop offset="0.326" stop-color="#066c7f"/><stop offset="0.349" stop-color="#066d80"/><stop offset="0.371" stop-color="#076e82"/><stop offset="0.393" stop-color="#087083"/><stop offset="0.415" stop-color="#097285"/><stop offset="0.437" stop-color="#0a7588"/><stop offset="0.459" stop-color="#0b788b"/><stop offset="0.481" stop-color="#0c7b8f"/><stop offset="0.503" stop-color="#0c7f93"/><stop offset="0.526" stop-color="#0a8297"/><stop offset="0.548" stop-color="#07869b"/><stop offset="0.570" stop-color="#048a9e"/><stop offset="0.592" stop-color="#018ea2"/><stop offset="0.614" stop-color="#0092a7"/><stop offset="0.636" stop-color="#0097ab"/><stop offset="0.658" stop-color="#019cb0"/><stop offset="0.680" stop-color="#02a0b4"/><stop offset="0.703" stop-color="#04a3b8"/><stop offset="0.725" stop-color="#07a5bb"/><stop offset="0.747" stop-color="#09a5bd"/><stop offset="0.769" stop-color="#0aa6be"/><stop offset="0.791" stop-color="#09a6bf"/><stop offset="0.813" stop-color="#07a6bf"/><stop offset="0.835" stop-color="#05a5bf"/><stop offset="0.858" stop-color="#03a5bf"/><stop offset="0.880" stop-color="#02a5bf"/><stop offset="0.902" stop-color="#02a5c0"/><stop offset="0.924" stop-color="#02a4c0"/><stop offset="0.946" stop-color="#03a4c0"/><stop offset="0.968" stop-color="#04a3bf"/><stop offset="0.990" stop-color="#05a3bf"/><stop offset="1.012" stop-color="#06a2be"/></linearGradient><linearGradient id="r25" gradientUnits="userSpaceOnUse" x1="-40" y1="0" x2="1406" y2="0"><stop offset="0.017" stop-color="#0b748b"/><stop offset="0.039" stop-color="#0b768d"/><stop offset="0.061" stop-color="#0c778e"/><stop offset="0.083" stop-color="#0b778e"/><stop offset="0.105" stop-color="#0b778d"/><stop offset="0.127" stop-color="#0b758b"/><stop offset="0.149" stop-color="#0a7388"/><stop offset="0.172" stop-color="#0a7085"/><stop offset="0.194" stop-color="#096e83"/><stop offset="0.216" stop-color="#096c81"/><stop offset="0.238" stop-color="#096b7f"/><stop offset="0.260" stop-color="#086a7e"/><stop offset="0.282" stop-color="#086a7e"/><stop offset="0.304" stop-color="#076b7e"/><stop offset="0.326" stop-color="#076b7f"/><stop offset="0.349" stop-color="#076d80"/><stop offset="0.371" stop-color="#076e82"/><stop offset="0.393" stop-color="#087084"/><stop offset="0.415" stop-color="#097285"/><stop offset="0.437" stop-color="#0a7488"/><stop offset="0.459" stop-color="#0b778b"/><stop offset="0.481" stop-color="#0c7a8e"/><stop offset="0.503" stop-color="#0c7e92"/><stop offset="0.526" stop-color="#0a8196"/><stop offset="0.548" stop-color="#078599"/><stop offset="0.570" stop-color="#05889d"/><stop offset="0.592" stop-color="#028ca1"/><stop offset="0.614" stop-color="#0191a5"/><stop offset="0.636" stop-color="#0195aa"/><stop offset="0.658" stop-color="#019aae"/><stop offset="0.680" stop-color="#029eb2"/><stop offset="0.703" stop-color="#04a1b6"/><stop offset="0.725" stop-color="#07a3b9"/><stop offset="0.747" stop-color="#08a3bb"/><stop offset="0.769" stop-color="#09a4bc"/><stop offset="0.791" stop-color="#08a4bd"/><stop offset="0.813" stop-color="#06a4be"/><stop offset="0.835" stop-color="#04a4bf"/><stop offset="0.858" stop-color="#03a4bf"/><stop offset="0.880" stop-color="#02a4bf"/><stop offset="0.902" stop-color="#02a4bf"/><stop offset="0.924" stop-color="#02a3bf"/><stop offset="0.946" stop-color="#03a3bf"/><stop offset="0.968" stop-color="#04a2bf"/><stop offset="0.990" stop-color="#05a2be"/><stop offset="1.012" stop-color="#06a1bd"/></linearGradient><linearGradient id="r26" gradientUnits="userSpaceOnUse" x1="-40" y1="0" x2="1406" y2="0"><stop offset="0.017" stop-color="#0b738a"/><stop offset="0.039" stop-color="#0c758c"/><stop offset="0.061" stop-color="#0c768d"/><stop offset="0.083" stop-color="#0c778d"/><stop offset="0.105" stop-color="#0b768c"/><stop offset="0.127" stop-color="#0b748a"/><stop offset="0.149" stop-color="#0a7287"/><stop offset="0.172" stop-color="#0a7084"/><stop offset="0.194" stop-color="#096d82"/><stop offset="0.216" stop-color="#096c80"/><stop offset="0.238" stop-color="#096b7e"/><stop offset="0.260" stop-color="#086a7e"/><stop offset="0.282" stop-color="#086a7e"/><stop offset="0.304" stop-color="#076a7e"/><stop offset="0.326" stop-color="#076b7f"/><stop offset="0.349" stop-color="#076c80"/><stop offset="0.371" stop-color="#086e82"/><stop offset="0.393" stop-color="#097083"/><stop offset="0.415" stop-color="#0a7185"/><stop offset="0.437" stop-color="#0b7487"/><stop offset="0.459" stop-color="#0b768a"/><stop offset="0.481" stop-color="#0c798d"/><stop offset="0.503" stop-color="#0b7c91"/><stop offset="0.526" stop-color="#0a8094"/><stop offset="0.548" stop-color="#088398"/><stop offset="0.570" stop-color="#05879c"/><stop offset="0.592" stop-color="#038ba0"/><stop offset="0.614" stop-color="#028fa4"/><stop offset="0.636" stop-color="#0194a8"/><stop offset="0.658" stop-color="#0298ac"/><stop offset="0.680" stop-color="#039cb0"/><stop offset="0.703" stop-color="#049fb4"/><stop offset="0.725" stop-color="#07a0b7"/><stop offset="0.747" stop-color="#08a1b9"/><stop offset="0.769" stop-color="#08a1bb"/><stop offset="0.791" stop-color="#07a2bc"/><stop offset="0.813" stop-color="#06a2bd"/><stop offset="0.835" stop-color="#04a2be"/><stop offset="0.858" stop-color="#02a2be"/><stop offset="0.880" stop-color="#02a2bf"/><stop offset="0.902" stop-color="#01a2bf"/><stop offset="0.924" stop-color="#02a2bf"/><stop offset="0.946" stop-color="#03a2bf"/><stop offset="0.968" stop-color="#03a1be"/><stop offset="0.990" stop-color="#04a0bd"/><stop offset="1.012" stop-color="#059fbc"/></linearGradient><linearGradient id="r27" gradientUnits="userSpaceOnUse" x1="-40" y1="0" x2="1406" y2="0"><stop offset="0.017" stop-color="#0b7389"/><stop offset="0.039" stop-color="#0c748a"/><stop offset="0.061" stop-color="#0c768b"/><stop offset="0.083" stop-color="#0c768b"/><stop offset="0.105" stop-color="#0c758a"/><stop offset="0.127" stop-color="#0b7388"/><stop offset="0.149" stop-color="#0a7186"/><stop offset="0.172" stop-color="#0a6f83"/><stop offset="0.194" stop-color="#096d81"/><stop offset="0.216" stop-color="#096b7f"/><stop offset="0.238" stop-color="#086a7e"/><stop offset="0.260" stop-color="#08697d"/><stop offset="0.282" stop-color="#08697d"/><stop offset="0.304" stop-color="#086a7e"/><stop offset="0.326" stop-color="#086b7f"/><stop offset="0.349" stop-color="#086c80"/><stop offset="0.371" stop-color="#086e82"/><stop offset="0.393" stop-color="#096f83"/><stop offset="0.415" stop-color="#0a7185"/><stop offset="0.437" stop-color="#0b7387"/><stop offset="0.459" stop-color="#0b7589"/><stop offset="0.481" stop-color="#0c788c"/><stop offset="0.503" stop-color="#0b7b8f"/><stop offset="0.526" stop-color="#0a7e93"/><stop offset="0.548" stop-color="#088296"/><stop offset="0.570" stop-color="#06859a"/><stop offset="0.592" stop-color="#04899e"/><stop offset="0.614" stop-color="#038da2"/><stop offset="0.636" stop-color="#0292a6"/><stop offset="0.658" stop-color="#0296aa"/><stop offset="0.680" stop-color="#0399ae"/><stop offset="0.703" stop-color="#059cb2"/><stop offset="0.725" stop-color="#079db5"/><stop offset="0.747" stop-color="#089eb7"/><stop offset="0.769" stop-color="#089fb9"/><stop offset="0.791" stop-color="#079fba"/><stop offset="0.813" stop-color="#05a0bb"/><stop offset="0.835" stop-color="#04a0bd"/><stop offset="0.858" stop-color="#02a1be"/><stop offset="0.880" stop-color="#01a1bf"/><stop offset="0.902" stop-color="#01a1bf"/><stop offset="0.924" stop-color="#02a1be"/><stop offset="0.946" stop-color="#03a0be"/><stop offset="0.968" stop-color="#03a0bd"/><stop offset="0.990" stop-color="#049fbc"/><stop offset="1.012" stop-color="#059ebb"/></linearGradient><linearGradient id="r28" gradientUnits="userSpaceOnUse" x1="-40" y1="0" x2="1406" y2="0"><stop offset="0.017" stop-color="#0b7287"/><stop offset="0.039" stop-color="#0c7389"/><stop offset="0.061" stop-color="#0c748a"/><stop offset="0.083" stop-color="#0c758a"/><stop offset="0.105" stop-color="#0b7489"/><stop offset="0.127" stop-color="#0b7287"/><stop offset="0.149" stop-color="#0a7084"/><stop offset="0.172" stop-color="#096e82"/><stop offset="0.194" stop-color="#096c80"/><stop offset="0.216" stop-color="#096a7e"/><stop offset="0.238" stop-color="#08697d"/><stop offset="0.260" stop-color="#08687c"/><stop offset="0.282" stop-color="#08687c"/><stop offset="0.304" stop-color="#08697d"/><stop offset="0.326" stop-color="#086a7e"/><stop offset="0.349" stop-color="#086b7f"/><stop offset="0.371" stop-color="#086d81"/><stop offset="0.393" stop-color="#096e82"/><stop offset="0.415" stop-color="#0a7084"/><stop offset="0.437" stop-color="#0b7286"/><stop offset="0.459" stop-color="#0b7488"/><stop offset="0.481" stop-color="#0b768b"/><stop offset="0.503" stop-color="#0b798e"/><stop offset="0.526" stop-color="#097c91"/><stop offset="0.548" stop-color="#088094"/><stop offset="0.570" stop-color="#068398"/><stop offset="0.592" stop-color="#04879c"/><stop offset="0.614" stop-color="#038ba0"/><stop offset="0.636" stop-color="#038fa4"/><stop offset="0.658" stop-color="#0393a8"/><stop offset="0.680" stop-color="#0496ac"/><stop offset="0.703" stop-color="#0599af"/><stop offset="0.725" stop-color="#079ab3"/><stop offset="0.747" stop-color="#089bb5"/><stop offset="0.769" stop-color="#089cb6"/><stop offset="0.791" stop-color="#069db8"/><stop offset="0.813" stop-color="#059db9"/><stop offset="0.835" stop-color="#039ebb"/><stop offset="0.858" stop-color="#029fbd"/><stop offset="0.880" stop-color="#029fbe"/><stop offset="0.902" stop-color="#029fbe"/><stop offset="0.924" stop-color="#029fbe"/><stop offset="0.946" stop-color="#039fbd"/><stop offset="0.968" stop-color="#039ebc"/><stop offset="0.990" stop-color="#049dba"/><stop offset="1.012" stop-color="#049cb9"/></linearGradient><linearGradient id="r29" gradientUnits="userSpaceOnUse" x1="-40" y1="0" x2="1406" y2="0"><stop offset="0.017" stop-color="#0b7186"/><stop offset="0.039" stop-color="#0b7287"/><stop offset="0.061" stop-color="#0c7388"/><stop offset="0.083" stop-color="#0c7388"/><stop offset="0.105" stop-color="#0b7287"/><stop offset="0.127" stop-color="#0a7085"/><stop offset="0.149" stop-color="#096e83"/><stop offset="0.172" stop-color="#096c81"/><stop offset="0.194" stop-color="#086a7f"/><stop offset="0.216" stop-color="#08697d"/><stop offset="0.238" stop-color="#08687c"/><stop offset="0.260" stop-color="#08677c"/><stop offset="0.282" stop-color="#08687c"/><stop offset="0.304" stop-color="#08687c"/><stop offset="0.326" stop-color="#08697d"/><stop offset="0.349" stop-color="#086b7f"/><stop offset="0.371" stop-color="#096c80"/><stop offset="0.393" stop-color="#096d81"/><stop offset="0.415" stop-color="#0a6f83"/><stop offset="0.437" stop-color="#0a7085"/><stop offset="0.459" stop-color="#0b7287"/><stop offset="0.481" stop-color="#0b7589"/><stop offset="0.503" stop-color="#0a778c"/><stop offset="0.526" stop-color="#097a8f"/><stop offset="0.548" stop-color="#087e92"/><stop offset="0.570" stop-color="#068196"/><stop offset="0.592" stop-color="#05859a"/><stop offset="0.614" stop-color="#04899e"/><stop offset="0.636" stop-color="#038da2"/><stop offset="0.658" stop-color="#0390a6"/><stop offset="0.680" stop-color="#0493a9"/><stop offset="0.703" stop-color="#0696ad"/><stop offset="0.725" stop-color="#0797b0"/><stop offset="0.747" stop-color="#0898b2"/><stop offset="0.769" stop-color="#0799b4"/><stop offset="0.791" stop-color="#069ab5"/><stop offset="0.813" stop-color="#059bb7"/><stop offset="0.835" stop-color="#039cb9"/><stop offset="0.858" stop-color="#029dbc"/><stop offset="0.880" stop-color="#029dbd"/><stop offset="0.902" stop-color="#029ebd"/><stop offset="0.924" stop-color="#029dbc"/><stop offset="0.946" stop-color="#039dbb"/><stop offset="0.968" stop-color="#039cba"/><stop offset="0.990" stop-color="#049cb9"/><stop offset="1.012" stop-color="#049bb8"/></linearGradient><linearGradient id="r30" gradientUnits="userSpaceOnUse" x1="-40" y1="0" x2="1406" y2="0"><stop offset="0.017" stop-color="#0a6f84"/><stop offset="0.039" stop-color="#0b7185"/><stop offset="0.061" stop-color="#0b7186"/><stop offset="0.083" stop-color="#0c7286"/><stop offset="0.105" stop-color="#0b7085"/><stop offset="0.127" stop-color="#0a6f83"/><stop offset="0.149" stop-color="#096d81"/><stop offset="0.172" stop-color="#086b7f"/><stop offset="0.194" stop-color="#08697d"/><stop offset="0.216" stop-color="#08687c"/><stop offset="0.238" stop-color="#08677b"/><stop offset="0.260" stop-color="#08667b"/><stop offset="0.282" stop-color="#08677b"/><stop offset="0.304" stop-color="#08677b"/><stop offset="0.326" stop-color="#08687c"/><stop offset="0.349" stop-color="#086a7e"/><stop offset="0.371" stop-color="#096b7f"/><stop offset="0.393" stop-color="#096c80"/><stop offset="0.415" stop-color="#0a6e82"/><stop offset="0.437" stop-color="#0a6f83"/><stop offset="0.459" stop-color="#0a7185"/><stop offset="0.481" stop-color="#0a7387"/><stop offset="0.503" stop-color="#09768a"/><stop offset="0.526" stop-color="#09788d"/><stop offset="0.548" stop-color="#077c90"/><stop offset="0.570" stop-color="#067f94"/><stop offset="0.592" stop-color="#058397"/><stop offset="0.614" stop-color="#04869b"/><stop offset="0.636" stop-color="#048a9f"/><stop offset="0.658" stop-color="#048da3"/><stop offset="0.680" stop-color="#0590a7"/><stop offset="0.703" stop-color="#0692aa"/><stop offset="0.725" stop-color="#0794ad"/><stop offset="0.747" stop-color="#0895af"/><stop offset="0.769" stop-color="#0796b1"/><stop offset="0.791" stop-color="#0697b3"/><stop offset="0.813" stop-color="#0498b5"/><stop offset="0.835" stop-color="#0399b7"/><stop offset="0.858" stop-color="#039aba"/><stop offset="0.880" stop-color="#029bbc"/><stop offset="0.902" stop-color="#029cbc"/><stop offset="0.924" stop-color="#039cbb"/><stop offset="0.946" stop-color="#039bba"/><stop offset="0.968" stop-color="#039bb9"/><stop offset="0.990" stop-color="#049ab7"/><stop offset="1.012" stop-color="#0499b6"/></linearGradient><linearGradient id="r31" gradientUnits="userSpaceOnUse" x1="-40" y1="0" x2="1406" y2="0"><stop offset="0.017" stop-color="#096e82"/><stop offset="0.039" stop-color="#0a6f83"/><stop offset="0.061" stop-color="#0b7084"/><stop offset="0.083" stop-color="#0b7083"/><stop offset="0.105" stop-color="#0a6e82"/><stop offset="0.127" stop-color="#096d81"/><stop offset="0.149" stop-color="#086b7f"/><stop offset="0.172" stop-color="#08697d"/><stop offset="0.194" stop-color="#08687c"/><stop offset="0.216" stop-color="#07667a"/><stop offset="0.238" stop-color="#07657a"/><stop offset="0.260" stop-color="#086579"/><stop offset="0.282" stop-color="#08667a"/><stop offset="0.304" stop-color="#08667a"/><stop offset="0.326" stop-color="#08677c"/><stop offset="0.349" stop-color="#08697d"/><stop offset="0.371" stop-color="#096a7e"/><stop offset="0.393" stop-color="#096b7f"/><stop offset="0.415" stop-color="#0a6c80"/><stop offset="0.437" stop-color="#0a6e82"/><stop offset="0.459" stop-color="#0a6f83"/><stop offset="0.481" stop-color="#097185"/><stop offset="0.503" stop-color="#097488"/><stop offset="0.526" stop-color="#08768b"/><stop offset="0.548" stop-color="#07798e"/><stop offset="0.570" stop-color="#067d91"/><stop offset="0.592" stop-color="#058095"/><stop offset="0.614" stop-color="#048499"/><stop offset="0.636" stop-color="#04879d"/><stop offset="0.658" stop-color="#048aa0"/><stop offset="0.680" stop-color="#058da4"/><stop offset="0.703" stop-color="#068fa7"/><stop offset="0.725" stop-color="#0791aa"/><stop offset="0.747" stop-color="#0792ac"/><stop offset="0.769" stop-color="#0793ae"/><stop offset="0.791" stop-color="#0594b0"/><stop offset="0.813" stop-color="#0495b2"/><stop offset="0.835" stop-color="#0397b5"/><stop offset="0.858" stop-color="#0398b8"/><stop offset="0.880" stop-color="#0399ba"/><stop offset="0.902" stop-color="#039aba"/><stop offset="0.924" stop-color="#039ab9"/><stop offset="0.946" stop-color="#0399b8"/><stop offset="0.968" stop-color="#0399b7"/><stop offset="0.990" stop-color="#0498b5"/><stop offset="1.012" stop-color="#0497b4"/></linearGradient><linearGradient id="r32" gradientUnits="userSpaceOnUse" x1="-40" y1="0" x2="1406" y2="0"><stop offset="0.017" stop-color="#096c80"/><stop offset="0.039" stop-color="#096d81"/><stop offset="0.061" stop-color="#096d81"/><stop offset="0.083" stop-color="#096d81"/><stop offset="0.105" stop-color="#086c80"/><stop offset="0.127" stop-color="#086b7e"/><stop offset="0.149" stop-color="#07697d"/><stop offset="0.172" stop-color="#07687b"/><stop offset="0.194" stop-color="#07667a"/><stop offset="0.216" stop-color="#076579"/><stop offset="0.238" stop-color="#076478"/><stop offset="0.260" stop-color="#076478"/><stop offset="0.282" stop-color="#086579"/><stop offset="0.304" stop-color="#086579"/><stop offset="0.326" stop-color="#08667a"/><stop offset="0.349" stop-color="#09687c"/><stop offset="0.371" stop-color="#09697d"/><stop offset="0.393" stop-color="#096a7e"/><stop offset="0.415" stop-color="#096b7f"/><stop offset="0.437" stop-color="#096c80"/><stop offset="0.459" stop-color="#096e82"/><stop offset="0.481" stop-color="#096f83"/><stop offset="0.503" stop-color="#087186"/><stop offset="0.526" stop-color="#077488"/><stop offset="0.548" stop-color="#07778b"/><stop offset="0.570" stop-color="#067a8f"/><stop offset="0.592" stop-color="#057d92"/><stop offset="0.614" stop-color="#058196"/><stop offset="0.636" stop-color="#05849a"/><stop offset="0.658" stop-color="#05879e"/><stop offset="0.680" stop-color="#058aa1"/><stop offset="0.703" stop-color="#068ca4"/><stop offset="0.725" stop-color="#078da7"/><stop offset="0.747" stop-color="#078fa9"/><stop offset="0.769" stop-color="#068fab"/><stop offset="0.791" stop-color="#0591ac"/><stop offset="0.813" stop-color="#0492af"/><stop offset="0.835" stop-color="#0494b2"/><stop offset="0.858" stop-color="#0396b5"/><stop offset="0.880" stop-color="#0397b7"/><stop offset="0.902" stop-color="#0498b8"/><stop offset="0.924" stop-color="#0498b7"/><stop offset="0.946" stop-color="#0497b6"/><stop offset="0.968" stop-color="#0497b5"/><stop offset="0.990" stop-color="#0496b3"/><stop offset="1.012" stop-color="#0395b2"/></linearGradient><linearGradient id="r33" gradientUnits="userSpaceOnUse" x1="-40" y1="0" x2="1406" y2="0"><stop offset="0.017" stop-color="#086a7e"/><stop offset="0.039" stop-color="#086b7e"/><stop offset="0.061" stop-color="#086b7e"/><stop offset="0.083" stop-color="#086b7e"/><stop offset="0.105" stop-color="#076a7d"/><stop offset="0.127" stop-color="#07697c"/><stop offset="0.149" stop-color="#06677b"/><stop offset="0.172" stop-color="#06667a"/><stop offset="0.194" stop-color="#066478"/><stop offset="0.216" stop-color="#076377"/><stop offset="0.238" stop-color="#076377"/><stop offset="0.260" stop-color="#076377"/><stop offset="0.282" stop-color="#086378"/><stop offset="0.304" stop-color="#086478"/><stop offset="0.326" stop-color="#086579"/><stop offset="0.349" stop-color="#09667a"/><stop offset="0.371" stop-color="#09677b"/><stop offset="0.393" stop-color="#09687c"/><stop offset="0.415" stop-color="#09697d"/><stop offset="0.437" stop-color="#096a7e"/><stop offset="0.459" stop-color="#096c80"/><stop offset="0.481" stop-color="#086d81"/><stop offset="0.503" stop-color="#086f83"/><stop offset="0.526" stop-color="#077186"/><stop offset="0.548" stop-color="#067489"/><stop offset="0.570" stop-color="#06778c"/><stop offset="0.592" stop-color="#057b90"/><stop offset="0.614" stop-color="#057e93"/><stop offset="0.636" stop-color="#058197"/><stop offset="0.658" stop-color="#05849b"/><stop offset="0.680" stop-color="#06879e"/><stop offset="0.703" stop-color="#0689a1"/><stop offset="0.725" stop-color="#078aa3"/><stop offset="0.747" stop-color="#068ba5"/><stop offset="0.769" stop-color="#068ca7"/><stop offset="0.791" stop-color="#058da9"/><stop offset="0.813" stop-color="#048fac"/><stop offset="0.835" stop-color="#0491af"/><stop offset="0.858" stop-color="#0493b2"/><stop offset="0.880" stop-color="#0495b5"/><stop offset="0.902" stop-color="#0495b5"/><stop offset="0.924" stop-color="#0496b5"/><stop offset="0.946" stop-color="#0495b4"/><stop offset="0.968" stop-color="#0495b3"/><stop offset="0.990" stop-color="#0494b1"/><stop offset="1.012" stop-color="#0392b0"/></linearGradient><linearGradient id="r34" gradientUnits="userSpaceOnUse" x1="-40" y1="0" x2="1406" y2="0"><stop offset="0.017" stop-color="#07687c"/><stop offset="0.039" stop-color="#06687c"/><stop offset="0.061" stop-color="#06697b"/><stop offset="0.083" stop-color="#06687b"/><stop offset="0.105" stop-color="#05687a"/><stop offset="0.127" stop-color="#05677a"/><stop offset="0.149" stop-color="#056579"/><stop offset="0.172" stop-color="#066478"/><stop offset="0.194" stop-color="#066377"/><stop offset="0.216" stop-color="#066276"/><stop offset="0.238" stop-color="#076176"/><stop offset="0.260" stop-color="#076276"/><stop offset="0.282" stop-color="#086276"/><stop offset="0.304" stop-color="#086377"/><stop offset="0.326" stop-color="#086478"/><stop offset="0.349" stop-color="#096579"/><stop offset="0.371" stop-color="#09667a"/><stop offset="0.393" stop-color="#09677b"/><stop offset="0.415" stop-color="#09687c"/><stop offset="0.437" stop-color="#09697d"/><stop offset="0.459" stop-color="#086a7e"/><stop offset="0.481" stop-color="#086b7f"/><stop offset="0.503" stop-color="#076d81"/><stop offset="0.526" stop-color="#066f83"/><stop offset="0.548" stop-color="#067286"/><stop offset="0.570" stop-color="#06758a"/><stop offset="0.592" stop-color="#05788d"/><stop offset="0.614" stop-color="#057b91"/><stop offset="0.636" stop-color="#057e94"/><stop offset="0.658" stop-color="#058198"/><stop offset="0.680" stop-color="#06839b"/><stop offset="0.703" stop-color="#06859e"/><stop offset="0.725" stop-color="#0687a0"/><stop offset="0.747" stop-color="#0688a2"/><stop offset="0.769" stop-color="#0589a3"/><stop offset="0.791" stop-color="#048aa5"/><stop offset="0.813" stop-color="#048ca8"/><stop offset="0.835" stop-color="#048eac"/><stop offset="0.858" stop-color="#0590b0"/><stop offset="0.880" stop-color="#0592b2"/><stop offset="0.902" stop-color="#0593b3"/><stop offset="0.924" stop-color="#0593b3"/><stop offset="0.946" stop-color="#0593b2"/><stop offset="0.968" stop-color="#0492b0"/><stop offset="0.990" stop-color="#0491af"/><stop offset="1.012" stop-color="#0390ad"/></linearGradient><linearGradient id="r35" gradientUnits="userSpaceOnUse" x1="-40" y1="0" x2="1406" y2="0"><stop offset="0.017" stop-color="#066679"/><stop offset="0.039" stop-color="#056679"/><stop offset="0.061" stop-color="#046679"/><stop offset="0.083" stop-color="#046678"/><stop offset="0.105" stop-color="#046578"/><stop offset="0.127" stop-color="#046477"/><stop offset="0.149" stop-color="#056477"/><stop offset="0.172" stop-color="#056376"/><stop offset="0.194" stop-color="#056175"/><stop offset="0.216" stop-color="#066074"/><stop offset="0.238" stop-color="#066074"/><stop offset="0.260" stop-color="#076075"/><stop offset="0.282" stop-color="#076175"/><stop offset="0.304" stop-color="#086276"/><stop offset="0.326" stop-color="#086377"/><stop offset="0.349" stop-color="#096478"/><stop offset="0.371" stop-color="#096579"/><stop offset="0.393" stop-color="#096679"/><stop offset="0.415" stop-color="#09667a"/><stop offset="0.437" stop-color="#09677b"/><stop offset="0.459" stop-color="#08687c"/><stop offset="0.481" stop-color="#07697d"/><stop offset="0.503" stop-color="#076a7e"/><stop offset="0.526" stop-color="#066c81"/><stop offset="0.548" stop-color="#066f84"/><stop offset="0.570" stop-color="#057287"/><stop offset="0.592" stop-color="#05758a"/><stop offset="0.614" stop-color="#05788e"/><stop offset="0.636" stop-color="#057b91"/><stop offset="0.658" stop-color="#057e95"/><stop offset="0.680" stop-color="#068098"/><stop offset="0.703" stop-color="#06829a"/><stop offset="0.725" stop-color="#06849d"/><stop offset="0.747" stop-color="#06859e"/><stop offset="0.769" stop-color="#0586a0"/><stop offset="0.791" stop-color="#0487a2"/><stop offset="0.813" stop-color="#0489a5"/><stop offset="0.835" stop-color="#058ba9"/><stop offset="0.858" stop-color="#068ead"/><stop offset="0.880" stop-color="#0690af"/><stop offset="0.902" stop-color="#0690b0"/><stop offset="0.924" stop-color="#0691b0"/><stop offset="0.946" stop-color="#0590af"/><stop offset="0.968" stop-color="#0490ae"/><stop offset="0.990" stop-color="#048fac"/><stop offset="1.012" stop-color="#038daa"/></linearGradient><linearGradient id="r36" gradientUnits="userSpaceOnUse" x1="-40" y1="0" x2="1406" y2="0"><stop offset="0.017" stop-color="#056477"/><stop offset="0.039" stop-color="#046477"/><stop offset="0.061" stop-color="#036376"/><stop offset="0.083" stop-color="#026375"/><stop offset="0.105" stop-color="#036375"/><stop offset="0.127" stop-color="#036275"/><stop offset="0.149" stop-color="#046275"/><stop offset="0.172" stop-color="#046174"/><stop offset="0.194" stop-color="#056074"/><stop offset="0.216" stop-color="#055f73"/><stop offset="0.238" stop-color="#065f73"/><stop offset="0.260" stop-color="#075f73"/><stop offset="0.282" stop-color="#076074"/><stop offset="0.304" stop-color="#086175"/><stop offset="0.326" stop-color="#096276"/><stop offset="0.349" stop-color="#096377"/><stop offset="0.371" stop-color="#096477"/><stop offset="0.393" stop-color="#096478"/><stop offset="0.415" stop-color="#096578"/><stop offset="0.437" stop-color="#086579"/><stop offset="0.459" stop-color="#08667a"/><stop offset="0.481" stop-color="#07677b"/><stop offset="0.503" stop-color="#06687c"/><stop offset="0.526" stop-color="#066a7e"/><stop offset="0.548" stop-color="#066d81"/><stop offset="0.570" stop-color="#056f84"/><stop offset="0.592" stop-color="#057288"/><stop offset="0.614" stop-color="#05758b"/><stop offset="0.636" stop-color="#05788e"/><stop offset="0.658" stop-color="#067b92"/><stop offset="0.680" stop-color="#067d95"/><stop offset="0.703" stop-color="#067f97"/><stop offset="0.725" stop-color="#068099"/><stop offset="0.747" stop-color="#05829b"/><stop offset="0.769" stop-color="#05839c"/><stop offset="0.791" stop-color="#04849e"/><stop offset="0.813" stop-color="#0486a2"/><stop offset="0.835" stop-color="#0689a6"/><stop offset="0.858" stop-color="#078baa"/><stop offset="0.880" stop-color="#078dac"/><stop offset="0.902" stop-color="#078ead"/><stop offset="0.924" stop-color="#068ead"/><stop offset="0.946" stop-color="#058eac"/><stop offset="0.968" stop-color="#048dab"/><stop offset="0.990" stop-color="#038ca9"/><stop offset="1.012" stop-color="#038ba8"/></linearGradient><linearGradient id="r37" gradientUnits="userSpaceOnUse" x1="-40" y1="0" x2="1406" y2="0"><stop offset="0.017" stop-color="#056275"/><stop offset="0.039" stop-color="#036274"/><stop offset="0.061" stop-color="#026173"/><stop offset="0.083" stop-color="#016173"/><stop offset="0.105" stop-color="#016173"/><stop offset="0.127" stop-color="#026073"/><stop offset="0.149" stop-color="#036073"/><stop offset="0.172" stop-color="#045f72"/><stop offset="0.194" stop-color="#055f72"/><stop offset="0.216" stop-color="#055e72"/><stop offset="0.238" stop-color="#065e72"/><stop offset="0.260" stop-color="#075f72"/><stop offset="0.282" stop-color="#075f73"/><stop offset="0.304" stop-color="#086074"/><stop offset="0.326" stop-color="#096175"/><stop offset="0.349" stop-color="#096275"/><stop offset="0.371" stop-color="#096276"/><stop offset="0.393" stop-color="#096376"/><stop offset="0.415" stop-color="#096377"/><stop offset="0.437" stop-color="#086377"/><stop offset="0.459" stop-color="#086478"/><stop offset="0.481" stop-color="#076578"/><stop offset="0.503" stop-color="#06667a"/><stop offset="0.526" stop-color="#06687c"/><stop offset="0.548" stop-color="#056a7e"/><stop offset="0.570" stop-color="#056d81"/><stop offset="0.592" stop-color="#057085"/><stop offset="0.614" stop-color="#057388"/><stop offset="0.636" stop-color="#05758c"/><stop offset="0.658" stop-color="#06788f"/><stop offset="0.680" stop-color="#067a91"/><stop offset="0.703" stop-color="#067c94"/><stop offset="0.725" stop-color="#067d96"/><stop offset="0.747" stop-color="#057f98"/><stop offset="0.769" stop-color="#058099"/><stop offset="0.791" stop-color="#04819b"/><stop offset="0.813" stop-color="#05839f"/><stop offset="0.835" stop-color="#0786a3"/><stop offset="0.858" stop-color="#0889a7"/><stop offset="0.880" stop-color="#088aa9"/><stop offset="0.902" stop-color="#078baa"/><stop offset="0.924" stop-color="#068baa"/><stop offset="0.946" stop-color="#058ba9"/><stop offset="0.968" stop-color="#048aa7"/><stop offset="0.990" stop-color="#0389a6"/><stop offset="1.012" stop-color="#0288a5"/></linearGradient><linearGradient id="r38" gradientUnits="userSpaceOnUse" x1="-40" y1="0" x2="1406" y2="0"><stop offset="0.017" stop-color="#046073"/><stop offset="0.039" stop-color="#036072"/><stop offset="0.061" stop-color="#015f71"/><stop offset="0.083" stop-color="#005e70"/><stop offset="0.105" stop-color="#015f71"/><stop offset="0.127" stop-color="#025f71"/><stop offset="0.149" stop-color="#035e71"/><stop offset="0.172" stop-color="#045e71"/><stop offset="0.194" stop-color="#045e71"/><stop offset="0.216" stop-color="#055d71"/><stop offset="0.238" stop-color="#065d71"/><stop offset="0.260" stop-color="#075e71"/><stop offset="0.282" stop-color="#075f72"/><stop offset="0.304" stop-color="#085f73"/><stop offset="0.326" stop-color="#096074"/><stop offset="0.349" stop-color="#096174"/><stop offset="0.371" stop-color="#096175"/><stop offset="0.393" stop-color="#096175"/><stop offset="0.415" stop-color="#096275"/><stop offset="0.437" stop-color="#086275"/><stop offset="0.459" stop-color="#076276"/><stop offset="0.481" stop-color="#076376"/><stop offset="0.503" stop-color="#066477"/><stop offset="0.526" stop-color="#056579"/><stop offset="0.548" stop-color="#05677c"/><stop offset="0.570" stop-color="#056a7f"/><stop offset="0.592" stop-color="#056d82"/><stop offset="0.614" stop-color="#057085"/><stop offset="0.636" stop-color="#067289"/><stop offset="0.658" stop-color="#06758c"/><stop offset="0.680" stop-color="#06778e"/><stop offset="0.703" stop-color="#067991"/><stop offset="0.725" stop-color="#067a93"/><stop offset="0.747" stop-color="#057c94"/><stop offset="0.769" stop-color="#057d96"/><stop offset="0.791" stop-color="#057e99"/><stop offset="0.813" stop-color="#06819c"/><stop offset="0.835" stop-color="#0783a0"/><stop offset="0.858" stop-color="#0986a4"/><stop offset="0.880" stop-color="#0988a6"/><stop offset="0.902" stop-color="#0888a7"/><stop offset="0.924" stop-color="#0788a6"/><stop offset="0.946" stop-color="#0587a5"/><stop offset="0.968" stop-color="#0487a4"/><stop offset="0.990" stop-color="#0386a3"/><stop offset="1.012" stop-color="#0285a1"/></linearGradient><linearGradient id="r39" gradientUnits="userSpaceOnUse" x1="-40" y1="0" x2="1406" y2="0"><stop offset="0.017" stop-color="#045e71"/><stop offset="0.039" stop-color="#035e71"/><stop offset="0.061" stop-color="#015d70"/><stop offset="0.083" stop-color="#005d6f"/><stop offset="0.105" stop-color="#015d6f"/><stop offset="0.127" stop-color="#025d6f"/><stop offset="0.149" stop-color="#035d70"/><stop offset="0.172" stop-color="#045d70"/><stop offset="0.194" stop-color="#045d6f"/><stop offset="0.216" stop-color="#055c6f"/><stop offset="0.238" stop-color="#065c70"/><stop offset="0.260" stop-color="#075d70"/><stop offset="0.282" stop-color="#075e71"/><stop offset="0.304" stop-color="#085f72"/><stop offset="0.326" stop-color="#095f72"/><stop offset="0.349" stop-color="#096073"/><stop offset="0.371" stop-color="#096073"/><stop offset="0.393" stop-color="#096073"/><stop offset="0.415" stop-color="#096073"/><stop offset="0.437" stop-color="#086073"/><stop offset="0.459" stop-color="#076074"/><stop offset="0.481" stop-color="#076074"/><stop offset="0.503" stop-color="#066175"/><stop offset="0.526" stop-color="#066377"/><stop offset="0.548" stop-color="#056579"/><stop offset="0.570" stop-color="#05677c"/><stop offset="0.592" stop-color="#056a7f"/><stop offset="0.614" stop-color="#056d83"/><stop offset="0.636" stop-color="#066f86"/><stop offset="0.658" stop-color="#067289"/><stop offset="0.680" stop-color="#06748b"/><stop offset="0.703" stop-color="#06768e"/><stop offset="0.725" stop-color="#067790"/><stop offset="0.747" stop-color="#067991"/><stop offset="0.769" stop-color="#057a93"/><stop offset="0.791" stop-color="#067c96"/><stop offset="0.813" stop-color="#077e99"/><stop offset="0.835" stop-color="#08819d"/><stop offset="0.858" stop-color="#0a83a1"/><stop offset="0.880" stop-color="#0985a3"/><stop offset="0.902" stop-color="#0885a3"/><stop offset="0.924" stop-color="#0784a3"/><stop offset="0.946" stop-color="#0584a2"/><stop offset="0.968" stop-color="#0483a0"/><stop offset="0.990" stop-color="#02829f"/><stop offset="1.012" stop-color="#01829e"/></linearGradient><linearGradient id="r40" gradientUnits="userSpaceOnUse" x1="-40" y1="0" x2="1406" y2="0"><stop offset="0.017" stop-color="#055d70"/><stop offset="0.039" stop-color="#035c6f"/><stop offset="0.061" stop-color="#025c6e"/><stop offset="0.083" stop-color="#015b6e"/><stop offset="0.105" stop-color="#025b6e"/><stop offset="0.127" stop-color="#035c6e"/><stop offset="0.149" stop-color="#035c6e"/><stop offset="0.172" stop-color="#045c6e"/><stop offset="0.194" stop-color="#045c6e"/><stop offset="0.216" stop-color="#055c6e"/><stop offset="0.238" stop-color="#065c6f"/><stop offset="0.260" stop-color="#075c6f"/><stop offset="0.282" stop-color="#085d70"/><stop offset="0.304" stop-color="#085e71"/><stop offset="0.326" stop-color="#095e71"/><stop offset="0.349" stop-color="#095f72"/><stop offset="0.371" stop-color="#095f72"/><stop offset="0.393" stop-color="#095f72"/><stop offset="0.415" stop-color="#095e72"/><stop offset="0.437" stop-color="#085e71"/><stop offset="0.459" stop-color="#075e72"/><stop offset="0.481" stop-color="#075e72"/><stop offset="0.503" stop-color="#065f73"/><stop offset="0.526" stop-color="#066074"/><stop offset="0.548" stop-color="#056277"/><stop offset="0.570" stop-color="#05657a"/><stop offset="0.592" stop-color="#05677d"/><stop offset="0.614" stop-color="#066a80"/><stop offset="0.636" stop-color="#066d83"/><stop offset="0.658" stop-color="#066f86"/><stop offset="0.680" stop-color="#067188"/><stop offset="0.703" stop-color="#06738b"/><stop offset="0.725" stop-color="#06748d"/><stop offset="0.747" stop-color="#06768e"/><stop offset="0.769" stop-color="#067791"/><stop offset="0.791" stop-color="#067993"/><stop offset="0.813" stop-color="#077b97"/><stop offset="0.835" stop-color="#097e9a"/><stop offset="0.858" stop-color="#0a809e"/><stop offset="0.880" stop-color="#0a819f"/><stop offset="0.902" stop-color="#08819f"/><stop offset="0.924" stop-color="#06819f"/><stop offset="0.946" stop-color="#05809e"/><stop offset="0.968" stop-color="#03809d"/><stop offset="0.990" stop-color="#027f9c"/><stop offset="1.012" stop-color="#017e9b"/></linearGradient><linearGradient id="r41" gradientUnits="userSpaceOnUse" x1="-40" y1="0" x2="1406" y2="0"><stop offset="0.017" stop-color="#055b6f"/><stop offset="0.039" stop-color="#045b6e"/><stop offset="0.061" stop-color="#035a6d"/><stop offset="0.083" stop-color="#035a6d"/><stop offset="0.105" stop-color="#035a6d"/><stop offset="0.127" stop-color="#035a6d"/><stop offset="0.149" stop-color="#045b6d"/><stop offset="0.172" stop-color="#045b6d"/><stop offset="0.194" stop-color="#055b6d"/><stop offset="0.216" stop-color="#055b6d"/><stop offset="0.238" stop-color="#065b6e"/><stop offset="0.260" stop-color="#075c6e"/><stop offset="0.282" stop-color="#085c6f"/><stop offset="0.304" stop-color="#095d70"/><stop offset="0.326" stop-color="#095e70"/><stop offset="0.349" stop-color="#0a5e70"/><stop offset="0.371" stop-color="#095e70"/><stop offset="0.393" stop-color="#095d70"/><stop offset="0.415" stop-color="#095d70"/><stop offset="0.437" stop-color="#085d70"/><stop offset="0.459" stop-color="#075c70"/><stop offset="0.481" stop-color="#075c70"/><stop offset="0.503" stop-color="#065d71"/><stop offset="0.526" stop-color="#065e72"/><stop offset="0.548" stop-color="#056074"/><stop offset="0.570" stop-color="#056277"/><stop offset="0.592" stop-color="#05657a"/><stop offset="0.614" stop-color="#06677d"/><stop offset="0.636" stop-color="#066a80"/><stop offset="0.658" stop-color="#066c83"/><stop offset="0.680" stop-color="#066e86"/><stop offset="0.703" stop-color="#067088"/><stop offset="0.725" stop-color="#06728a"/><stop offset="0.747" stop-color="#06738b"/><stop offset="0.769" stop-color="#06758e"/><stop offset="0.791" stop-color="#067690"/><stop offset="0.813" stop-color="#077994"/><stop offset="0.835" stop-color="#097b97"/><stop offset="0.858" stop-color="#0a7d9a"/><stop offset="0.880" stop-color="#097e9c"/><stop offset="0.902" stop-color="#087e9b"/><stop offset="0.924" stop-color="#067d9b"/><stop offset="0.946" stop-color="#047c9a"/><stop offset="0.968" stop-color="#027c99"/><stop offset="0.990" stop-color="#017b98"/><stop offset="1.012" stop-color="#007b97"/></linearGradient><linearGradient id="r42" gradientUnits="userSpaceOnUse" x1="-40" y1="0" x2="1406" y2="0"><stop offset="0.017" stop-color="#065a6d"/><stop offset="0.039" stop-color="#05596d"/><stop offset="0.061" stop-color="#05596c"/><stop offset="0.083" stop-color="#04596c"/><stop offset="0.105" stop-color="#04596c"/><stop offset="0.127" stop-color="#04596c"/><stop offset="0.149" stop-color="#05596c"/><stop offset="0.172" stop-color="#055a6c"/><stop offset="0.194" stop-color="#055a6c"/><stop offset="0.216" stop-color="#055a6c"/><stop offset="0.238" stop-color="#065a6d"/><stop offset="0.260" stop-color="#075b6d"/><stop offset="0.282" stop-color="#085c6e"/><stop offset="0.304" stop-color="#095c6f"/><stop offset="0.326" stop-color="#095d6f"/><stop offset="0.349" stop-color="#0a5d6f"/><stop offset="0.371" stop-color="#0a5c6f"/><stop offset="0.393" stop-color="#095c6f"/><stop offset="0.415" stop-color="#095b6e"/><stop offset="0.437" stop-color="#085b6e"/><stop offset="0.459" stop-color="#075a6e"/><stop offset="0.481" stop-color="#075a6e"/><stop offset="0.503" stop-color="#065b6e"/><stop offset="0.526" stop-color="#065c70"/><stop offset="0.548" stop-color="#065d72"/><stop offset="0.570" stop-color="#056075"/><stop offset="0.592" stop-color="#066278"/><stop offset="0.614" stop-color="#06657b"/><stop offset="0.636" stop-color="#06677e"/><stop offset="0.658" stop-color="#066980"/><stop offset="0.680" stop-color="#066b83"/><stop offset="0.703" stop-color="#066d85"/><stop offset="0.725" stop-color="#066f87"/><stop offset="0.747" stop-color="#067089"/><stop offset="0.769" stop-color="#06728b"/><stop offset="0.791" stop-color="#07748e"/><stop offset="0.813" stop-color="#087691"/><stop offset="0.835" stop-color="#097894"/><stop offset="0.858" stop-color="#097996"/><stop offset="0.880" stop-color="#097a98"/><stop offset="0.902" stop-color="#077a97"/><stop offset="0.924" stop-color="#057996"/><stop offset="0.946" stop-color="#037895"/><stop offset="0.968" stop-color="#017895"/><stop offset="0.990" stop-color="#007894"/><stop offset="1.012" stop-color="#007894"/></linearGradient><linearGradient id="r43" gradientUnits="userSpaceOnUse" x1="-40" y1="0" x2="1406" y2="0"><stop offset="0.017" stop-color="#07586c"/><stop offset="0.039" stop-color="#07586c"/><stop offset="0.061" stop-color="#06586c"/><stop offset="0.083" stop-color="#06586b"/><stop offset="0.105" stop-color="#06586b"/><stop offset="0.127" stop-color="#06586b"/><stop offset="0.149" stop-color="#05586b"/><stop offset="0.172" stop-color="#05596b"/><stop offset="0.194" stop-color="#05596b"/><stop offset="0.216" stop-color="#05596b"/><stop offset="0.238" stop-color="#065a6c"/><stop offset="0.260" stop-color="#075a6c"/><stop offset="0.282" stop-color="#085b6d"/><stop offset="0.304" stop-color="#095b6e"/><stop offset="0.326" stop-color="#0a5c6e"/><stop offset="0.349" stop-color="#0a5c6e"/><stop offset="0.371" stop-color="#0a5b6e"/><stop offset="0.393" stop-color="#095a6d"/><stop offset="0.415" stop-color="#095a6d"/><stop offset="0.437" stop-color="#08596c"/><stop offset="0.459" stop-color="#07596c"/><stop offset="0.481" stop-color="#07586c"/><stop offset="0.503" stop-color="#06596c"/><stop offset="0.526" stop-color="#06596d"/><stop offset="0.548" stop-color="#065b6f"/><stop offset="0.570" stop-color="#065d72"/><stop offset="0.592" stop-color="#066075"/><stop offset="0.614" stop-color="#066278"/><stop offset="0.636" stop-color="#06657b"/><stop offset="0.658" stop-color="#06677e"/><stop offset="0.680" stop-color="#066980"/><stop offset="0.703" stop-color="#066a82"/><stop offset="0.725" stop-color="#066c84"/><stop offset="0.747" stop-color="#066e86"/><stop offset="0.769" stop-color="#066f88"/><stop offset="0.791" stop-color="#07718b"/><stop offset="0.813" stop-color="#08738d"/><stop offset="0.835" stop-color="#087490"/><stop offset="0.858" stop-color="#097692"/><stop offset="0.880" stop-color="#087693"/><stop offset="0.902" stop-color="#067693"/><stop offset="0.924" stop-color="#047592"/><stop offset="0.946" stop-color="#027591"/><stop offset="0.968" stop-color="#017491"/><stop offset="0.990" stop-color="#007490"/><stop offset="1.012" stop-color="#007490"/></linearGradient><linearGradient id="r44" gradientUnits="userSpaceOnUse" x1="-40" y1="0" x2="1406" y2="0"><stop offset="0.017" stop-color="#08576b"/><stop offset="0.039" stop-color="#08576b"/><stop offset="0.061" stop-color="#08576b"/><stop offset="0.083" stop-color="#08576b"/><stop offset="0.105" stop-color="#07576b"/><stop offset="0.127" stop-color="#07576a"/><stop offset="0.149" stop-color="#06576a"/><stop offset="0.172" stop-color="#06586a"/><stop offset="0.194" stop-color="#06586a"/><stop offset="0.216" stop-color="#06586b"/><stop offset="0.238" stop-color="#06596b"/><stop offset="0.260" stop-color="#07596b"/><stop offset="0.282" stop-color="#085a6c"/><stop offset="0.304" stop-color="#095a6c"/><stop offset="0.326" stop-color="#0a5b6d"/><stop offset="0.349" stop-color="#0a5a6d"/><stop offset="0.371" stop-color="#0a5a6c"/><stop offset="0.393" stop-color="#09596c"/><stop offset="0.415" stop-color="#09586b"/><stop offset="0.437" stop-color="#08576a"/><stop offset="0.459" stop-color="#08576a"/><stop offset="0.481" stop-color="#07576a"/><stop offset="0.503" stop-color="#06576a"/><stop offset="0.526" stop-color="#06576b"/><stop offset="0.548" stop-color="#06596d"/><stop offset="0.570" stop-color="#065b70"/><stop offset="0.592" stop-color="#065d73"/><stop offset="0.614" stop-color="#066075"/><stop offset="0.636" stop-color="#066278"/><stop offset="0.658" stop-color="#06647b"/><stop offset="0.680" stop-color="#06667d"/><stop offset="0.703" stop-color="#06687f"/><stop offset="0.725" stop-color="#066981"/><stop offset="0.747" stop-color="#066b83"/><stop offset="0.769" stop-color="#066c85"/><stop offset="0.791" stop-color="#076e88"/><stop offset="0.813" stop-color="#07708a"/><stop offset="0.835" stop-color="#08718d"/><stop offset="0.858" stop-color="#08728e"/><stop offset="0.880" stop-color="#07738f"/><stop offset="0.902" stop-color="#05728f"/><stop offset="0.924" stop-color="#03718e"/><stop offset="0.946" stop-color="#01718d"/><stop offset="0.968" stop-color="#00708d"/><stop offset="0.990" stop-color="#00718d"/><stop offset="1.012" stop-color="#00718d"/></linearGradient><linearGradient id="r45" gradientUnits="userSpaceOnUse" x1="-40" y1="0" x2="1406" y2="0"><stop offset="0.017" stop-color="#09566a"/><stop offset="0.039" stop-color="#09566a"/><stop offset="0.061" stop-color="#09566a"/><stop offset="0.083" stop-color="#0a566a"/><stop offset="0.105" stop-color="#09566a"/><stop offset="0.127" stop-color="#08566a"/><stop offset="0.149" stop-color="#075769"/><stop offset="0.172" stop-color="#075769"/><stop offset="0.194" stop-color="#065769"/><stop offset="0.216" stop-color="#06586a"/><stop offset="0.238" stop-color="#07586a"/><stop offset="0.260" stop-color="#07586a"/><stop offset="0.282" stop-color="#08596b"/><stop offset="0.304" stop-color="#09596b"/><stop offset="0.326" stop-color="#0a5a6b"/><stop offset="0.349" stop-color="#0a596b"/><stop offset="0.371" stop-color="#0a586b"/><stop offset="0.393" stop-color="#09586a"/><stop offset="0.415" stop-color="#095769"/><stop offset="0.437" stop-color="#085669"/><stop offset="0.459" stop-color="#085568"/><stop offset="0.481" stop-color="#075568"/><stop offset="0.503" stop-color="#065568"/><stop offset="0.526" stop-color="#065569"/><stop offset="0.548" stop-color="#06576b"/><stop offset="0.570" stop-color="#06596e"/><stop offset="0.592" stop-color="#065b70"/><stop offset="0.614" stop-color="#065d73"/><stop offset="0.636" stop-color="#065f76"/><stop offset="0.658" stop-color="#066278"/><stop offset="0.680" stop-color="#06637b"/><stop offset="0.703" stop-color="#06657c"/><stop offset="0.725" stop-color="#06677e"/><stop offset="0.747" stop-color="#066880"/><stop offset="0.769" stop-color="#066982"/><stop offset="0.791" stop-color="#076b85"/><stop offset="0.813" stop-color="#076d87"/><stop offset="0.835" stop-color="#076e89"/><stop offset="0.858" stop-color="#076f8b"/><stop offset="0.880" stop-color="#066f8b"/><stop offset="0.902" stop-color="#046f8b"/><stop offset="0.924" stop-color="#026e8a"/><stop offset="0.946" stop-color="#006d89"/><stop offset="0.968" stop-color="#006d89"/><stop offset="0.990" stop-color="#006d89"/><stop offset="1.012" stop-color="#006d89"/></linearGradient><linearGradient id="r46" gradientUnits="userSpaceOnUse" x1="-40" y1="0" x2="1406" y2="0"><stop offset="0.017" stop-color="#0a5569"/><stop offset="0.039" stop-color="#0a5569"/><stop offset="0.061" stop-color="#0b5569"/><stop offset="0.083" stop-color="#0b5569"/><stop offset="0.105" stop-color="#0a5569"/><stop offset="0.127" stop-color="#095569"/><stop offset="0.149" stop-color="#085668"/><stop offset="0.172" stop-color="#075668"/><stop offset="0.194" stop-color="#075668"/><stop offset="0.216" stop-color="#075769"/><stop offset="0.238" stop-color="#075769"/><stop offset="0.260" stop-color="#085769"/><stop offset="0.282" stop-color="#09586a"/><stop offset="0.304" stop-color="#0a586a"/><stop offset="0.326" stop-color="#0a586a"/><stop offset="0.349" stop-color="#0a586a"/><stop offset="0.371" stop-color="#0a5769"/><stop offset="0.393" stop-color="#0a5668"/><stop offset="0.415" stop-color="#095568"/><stop offset="0.437" stop-color="#085467"/><stop offset="0.459" stop-color="#085467"/><stop offset="0.481" stop-color="#075366"/><stop offset="0.503" stop-color="#075367"/><stop offset="0.526" stop-color="#065367"/><stop offset="0.548" stop-color="#065569"/><stop offset="0.570" stop-color="#06566b"/><stop offset="0.592" stop-color="#06586e"/><stop offset="0.614" stop-color="#065b71"/><stop offset="0.636" stop-color="#065d73"/><stop offset="0.658" stop-color="#065f76"/><stop offset="0.680" stop-color="#066178"/><stop offset="0.703" stop-color="#06627a"/><stop offset="0.725" stop-color="#06647b"/><stop offset="0.747" stop-color="#06657d"/><stop offset="0.769" stop-color="#06677f"/><stop offset="0.791" stop-color="#066881"/><stop offset="0.813" stop-color="#076984"/><stop offset="0.835" stop-color="#076b85"/><stop offset="0.858" stop-color="#066b87"/><stop offset="0.880" stop-color="#056b87"/><stop offset="0.902" stop-color="#046b87"/><stop offset="0.924" stop-color="#026a86"/><stop offset="0.946" stop-color="#006985"/><stop offset="0.968" stop-color="#006985"/><stop offset="0.990" stop-color="#006a85"/><stop offset="1.012" stop-color="#006a86"/></linearGradient><linearGradient id="r47" gradientUnits="userSpaceOnUse" x1="-40" y1="0" x2="1406" y2="0"><stop offset="0.017" stop-color="#0a5368"/><stop offset="0.039" stop-color="#0b5468"/><stop offset="0.061" stop-color="#0b5468"/><stop offset="0.083" stop-color="#0c5468"/><stop offset="0.105" stop-color="#0b5468"/><stop offset="0.127" stop-color="#0a5468"/><stop offset="0.149" stop-color="#095468"/><stop offset="0.172" stop-color="#085567"/><stop offset="0.194" stop-color="#075567"/><stop offset="0.216" stop-color="#075667"/><stop offset="0.238" stop-color="#075668"/><stop offset="0.260" stop-color="#085668"/><stop offset="0.282" stop-color="#095768"/><stop offset="0.304" stop-color="#0a5769"/><stop offset="0.326" stop-color="#0a5769"/><stop offset="0.349" stop-color="#0a5668"/><stop offset="0.371" stop-color="#0a5668"/><stop offset="0.393" stop-color="#0a5567"/><stop offset="0.415" stop-color="#095466"/><stop offset="0.437" stop-color="#085365"/><stop offset="0.459" stop-color="#085265"/><stop offset="0.481" stop-color="#075165"/><stop offset="0.503" stop-color="#075165"/><stop offset="0.526" stop-color="#065266"/><stop offset="0.548" stop-color="#065367"/><stop offset="0.570" stop-color="#065469"/><stop offset="0.592" stop-color="#06566c"/><stop offset="0.614" stop-color="#06586e"/><stop offset="0.636" stop-color="#065a71"/><stop offset="0.658" stop-color="#065c73"/><stop offset="0.680" stop-color="#065e75"/><stop offset="0.703" stop-color="#066077"/><stop offset="0.725" stop-color="#066179"/><stop offset="0.747" stop-color="#06627b"/><stop offset="0.769" stop-color="#06647c"/><stop offset="0.791" stop-color="#06657e"/><stop offset="0.813" stop-color="#066680"/><stop offset="0.835" stop-color="#066782"/><stop offset="0.858" stop-color="#056883"/><stop offset="0.880" stop-color="#046883"/><stop offset="0.902" stop-color="#036883"/><stop offset="0.924" stop-color="#016783"/><stop offset="0.946" stop-color="#006682"/><stop offset="0.968" stop-color="#006682"/><stop offset="0.990" stop-color="#006782"/><stop offset="1.012" stop-color="#006783"/></linearGradient><linearGradient id="r48" gradientUnits="userSpaceOnUse" x1="-40" y1="0" x2="1406" y2="0"><stop offset="0.017" stop-color="#0b5267"/><stop offset="0.039" stop-color="#0c5267"/><stop offset="0.061" stop-color="#0c5367"/><stop offset="0.083" stop-color="#0c5367"/><stop offset="0.105" stop-color="#0c5367"/><stop offset="0.127" stop-color="#0b5367"/><stop offset="0.149" stop-color="#0a5367"/><stop offset="0.172" stop-color="#095466"/><stop offset="0.194" stop-color="#085466"/><stop offset="0.216" stop-color="#085466"/><stop offset="0.238" stop-color="#085567"/><stop offset="0.260" stop-color="#085567"/><stop offset="0.282" stop-color="#095567"/><stop offset="0.304" stop-color="#0a5567"/><stop offset="0.326" stop-color="#0a5567"/><stop offset="0.349" stop-color="#0a5567"/><stop offset="0.371" stop-color="#0a5466"/><stop offset="0.393" stop-color="#0a5365"/><stop offset="0.415" stop-color="#095264"/><stop offset="0.437" stop-color="#085164"/><stop offset="0.459" stop-color="#085063"/><stop offset="0.481" stop-color="#075063"/><stop offset="0.503" stop-color="#075063"/><stop offset="0.526" stop-color="#065064"/><stop offset="0.548" stop-color="#065165"/><stop offset="0.570" stop-color="#065267"/><stop offset="0.592" stop-color="#06546a"/><stop offset="0.614" stop-color="#06566c"/><stop offset="0.636" stop-color="#06586e"/><stop offset="0.658" stop-color="#065a71"/><stop offset="0.680" stop-color="#065b73"/><stop offset="0.703" stop-color="#065d74"/><stop offset="0.725" stop-color="#055e76"/><stop offset="0.747" stop-color="#056078"/><stop offset="0.769" stop-color="#05617a"/><stop offset="0.791" stop-color="#05627b"/><stop offset="0.813" stop-color="#05637d"/><stop offset="0.835" stop-color="#05647f"/><stop offset="0.858" stop-color="#04657f"/><stop offset="0.880" stop-color="#036580"/><stop offset="0.902" stop-color="#026480"/><stop offset="0.924" stop-color="#00647f"/><stop offset="0.946" stop-color="#00637f"/><stop offset="0.968" stop-color="#00637f"/><stop offset="0.990" stop-color="#00647f"/><stop offset="1.012" stop-color="#00647f"/></linearGradient><linearGradient id="r49" gradientUnits="userSpaceOnUse" x1="-40" y1="0" x2="1406" y2="0"><stop offset="0.017" stop-color="#0b5166"/><stop offset="0.039" stop-color="#0c5166"/><stop offset="0.061" stop-color="#0c5166"/><stop offset="0.083" stop-color="#0d5266"/><stop offset="0.105" stop-color="#0c5266"/><stop offset="0.127" stop-color="#0b5266"/><stop offset="0.149" stop-color="#0a5266"/><stop offset="0.172" stop-color="#095365"/><stop offset="0.194" stop-color="#095365"/><stop offset="0.216" stop-color="#085365"/><stop offset="0.238" stop-color="#085465"/><stop offset="0.260" stop-color="#095466"/><stop offset="0.282" stop-color="#095466"/><stop offset="0.304" stop-color="#0a5466"/><stop offset="0.326" stop-color="#0a5466"/><stop offset="0.349" stop-color="#0a5365"/><stop offset="0.371" stop-color="#0a5264"/><stop offset="0.393" stop-color="#095164"/><stop offset="0.415" stop-color="#095063"/><stop offset="0.437" stop-color="#085062"/><stop offset="0.459" stop-color="#084f62"/><stop offset="0.481" stop-color="#074e61"/><stop offset="0.503" stop-color="#074e62"/><stop offset="0.526" stop-color="#064e62"/><stop offset="0.548" stop-color="#064f64"/><stop offset="0.570" stop-color="#065065"/><stop offset="0.592" stop-color="#065267"/><stop offset="0.614" stop-color="#06546a"/><stop offset="0.636" stop-color="#06566c"/><stop offset="0.658" stop-color="#05576e"/><stop offset="0.680" stop-color="#055970"/><stop offset="0.703" stop-color="#055a72"/><stop offset="0.725" stop-color="#055c73"/><stop offset="0.747" stop-color="#055d75"/><stop offset="0.769" stop-color="#055e77"/><stop offset="0.791" stop-color="#055f78"/><stop offset="0.813" stop-color="#05607a"/><stop offset="0.835" stop-color="#04617b"/><stop offset="0.858" stop-color="#04617c"/><stop offset="0.880" stop-color="#02617c"/><stop offset="0.902" stop-color="#01617c"/><stop offset="0.924" stop-color="#00617c"/><stop offset="0.946" stop-color="#00607c"/><stop offset="0.968" stop-color="#00607c"/><stop offset="0.990" stop-color="#00617c"/><stop offset="1.012" stop-color="#00617c"/></linearGradient><linearGradient id="r50" gradientUnits="userSpaceOnUse" x1="-40" y1="0" x2="1406" y2="0"><stop offset="0.017" stop-color="#0c5065"/><stop offset="0.039" stop-color="#0c5065"/><stop offset="0.061" stop-color="#0d5065"/><stop offset="0.083" stop-color="#0d5165"/><stop offset="0.105" stop-color="#0c5165"/><stop offset="0.127" stop-color="#0c5165"/><stop offset="0.149" stop-color="#0b5164"/><stop offset="0.172" stop-color="#0a5164"/><stop offset="0.194" stop-color="#095264"/><stop offset="0.216" stop-color="#095264"/><stop offset="0.238" stop-color="#095264"/><stop offset="0.260" stop-color="#095264"/><stop offset="0.282" stop-color="#095364"/><stop offset="0.304" stop-color="#0a5364"/><stop offset="0.326" stop-color="#0a5264"/><stop offset="0.349" stop-color="#0a5263"/><stop offset="0.371" stop-color="#0a5163"/><stop offset="0.393" stop-color="#095062"/><stop offset="0.415" stop-color="#094f61"/><stop offset="0.437" stop-color="#084e61"/><stop offset="0.459" stop-color="#084d60"/><stop offset="0.481" stop-color="#074d60"/><stop offset="0.503" stop-color="#074c60"/><stop offset="0.526" stop-color="#064d61"/><stop offset="0.548" stop-color="#064d62"/><stop offset="0.570" stop-color="#064f63"/><stop offset="0.592" stop-color="#065065"/><stop offset="0.614" stop-color="#055267"/><stop offset="0.636" stop-color="#055369"/><stop offset="0.658" stop-color="#05556b"/><stop offset="0.680" stop-color="#05566d"/><stop offset="0.703" stop-color="#05586f"/><stop offset="0.725" stop-color="#055971"/><stop offset="0.747" stop-color="#055a72"/><stop offset="0.769" stop-color="#055b74"/><stop offset="0.791" stop-color="#045c75"/><stop offset="0.813" stop-color="#045d77"/><stop offset="0.835" stop-color="#045e78"/><stop offset="0.858" stop-color="#035e79"/><stop offset="0.880" stop-color="#025e79"/><stop offset="0.902" stop-color="#005e79"/><stop offset="0.924" stop-color="#005e79"/><stop offset="0.946" stop-color="#005e79"/><stop offset="0.968" stop-color="#005e79"/><stop offset="0.990" stop-color="#005e79"/><stop offset="1.012" stop-color="#005f79"/></linearGradient></defs><g filter="url(#bgr)"><rect x="-40" y="-33" width="1446" height="18" fill="url(#r0)"/><rect x="-40" y="-17" width="1446" height="18" fill="url(#r1)"/><rect x="-40" y="-1" width="1446" height="18" fill="url(#r2)"/><rect x="-40" y="15" width="1446" height="18" fill="url(#r3)"/><rect x="-40" y="31" width="1446" height="18" fill="url(#r4)"/><rect x="-40" y="47" width="1446" height="18" fill="url(#r5)"/><rect x="-40" y="63" width="1446" height="18" fill="url(#r6)"/><rect x="-40" y="79" width="1446" height="18" fill="url(#r7)"/><rect x="-40" y="95" width="1446" height="18" fill="url(#r8)"/><rect x="-40" y="111" width="1446" height="18" fill="url(#r9)"/><rect x="-40" y="127" width="1446" height="18" fill="url(#r10)"/><rect x="-40" y="143" width="1446" height="18" fill="url(#r11)"/><rect x="-40" y="159" width="1446" height="18" fill="url(#r12)"/><rect x="-40" y="175" width="1446" height="18" fill="url(#r13)"/><rect x="-40" y="191" width="1446" height="18" fill="url(#r14)"/><rect x="-40" y="207" width="1446" height="18" fill="url(#r15)"/><rect x="-40" y="223" width="1446" height="18" fill="url(#r16)"/><rect x="-40" y="239" width="1446" height="18" fill="url(#r17)"/><rect x="-40" y="255" width="1446" height="18" fill="url(#r18)"/><rect x="-40" y="271" width="1446" height="18" fill="url(#r19)"/><rect x="-40" y="287" width="1446" height="18" fill="url(#r20)"/><rect x="-40" y="303" width="1446" height="18" fill="url(#r21)"/><rect x="-40" y="319" width="1446" height="18" fill="url(#r22)"/><rect x="-40" y="335" width="1446" height="18" fill="url(#r23)"/><rect x="-40" y="351" width="1446" height="18" fill="url(#r24)"/><rect x="-40" y="367" width="1446" height="18" fill="url(#r25)"/><rect x="-40" y="383" width="1446" height="18" fill="url(#r26)"/><rect x="-40" y="399" width="1446" height="18" fill="url(#r27)"/><rect x="-40" y="415" width="1446" height="18" fill="url(#r28)"/><rect x="-40" y="431" width="1446" height="18" fill="url(#r29)"/><rect x="-40" y="447" width="1446" height="18" fill="url(#r30)"/><rect x="-40" y="463" width="1446" height="18" fill="url(#r31)"/><rect x="-40" y="479" width="1446" height="18" fill="url(#r32)"/><rect x="-40" y="495" width="1446" height="18" fill="url(#r33)"/><rect x="-40" y="511" width="1446" height="18" fill="url(#r34)"/><rect x="-40" y="527" width="1446" height="18" fill="url(#r35)"/><rect x="-40" y="543" width="1446" height="18" fill="url(#r36)"/><rect x="-40" y="559" width="1446" height="18" fill="url(#r37)"/><rect x="-40" y="575" width="1446" height="18" fill="url(#r38)"/><rect x="-40" y="591" width="1446" height="18" fill="url(#r39)"/><rect x="-40" y="607" width="1446" height="18" fill="url(#r40)"/><rect x="-40" y="623" width="1446" height="18" fill="url(#r41)"/><rect x="-40" y="639" width="1446" height="18" fill="url(#r42)"/><rect x="-40" y="655" width="1446" height="18" fill="url(#r43)"/><rect x="-40" y="671" width="1446" height="18" fill="url(#r44)"/><rect x="-40" y="687" width="1446" height="18" fill="url(#r45)"/><rect x="-40" y="703" width="1446" height="18" fill="url(#r46)"/><rect x="-40" y="719" width="1446" height="18" fill="url(#r47)"/><rect x="-40" y="735" width="1446" height="18" fill="url(#r48)"/><rect x="-40" y="751" width="1446" height="18" fill="url(#r49)"/><rect x="-40" y="767" width="1446" height="18" fill="url(#r50)"/></g><path d="M890 205 C990 150 1150 95 1366 45 L1366 230 C1200 250 1050 270 890 310Z" fill="#86d0dc" opacity="0.35" filter="url(#b15)"/>
<path d="M900 230 C1000 190 1150 140 1366 95 L1366 170 C1200 190 1050 220 905 270Z" fill="#bde9f0" opacity="0.3" filter="url(#b12)"/>
<path d="M890 203 C1000 140 1150 90 1366 40" fill="none" stroke="#c0ecf2" stroke-width="5" opacity="0.6" filter="url(#b2)"/>
<path d="M430 -6 Q500 42 634 64 Q690 72 740 78" fill="none" stroke="#20aec4" stroke-width="13" opacity="0.6" filter="url(#b4)"/>
<path d="M622 0 L545 128 M662 38 L622 110" fill="none" stroke="#5ac0cc" stroke-width="3" opacity="0.5" filter="url(#b2)"/>
<g fill="#e6f9fc" filter="url(#b1)"><ellipse cx="1044" cy="251" rx="6" ry="1.5" transform="rotate(-13 1044 251)" fill-opacity="0.55"/><ellipse cx="918" cy="286" rx="14" ry="2.1" transform="rotate(-13 918 286)" fill-opacity="0.57"/><ellipse cx="923" cy="275" rx="19" ry="3.3" transform="rotate(-13 923 275)" fill-opacity="0.49"/><ellipse cx="1189" cy="211" rx="21" ry="5.2" transform="rotate(-13 1189 211)" fill-opacity="0.56"/><ellipse cx="1355" cy="246" rx="10" ry="1.7" transform="rotate(-13 1355 246)" fill-opacity="0.45"/><ellipse cx="1037" cy="242" rx="19" ry="3.4" transform="rotate(-13 1037 242)" fill-opacity="0.63"/><ellipse cx="1194" cy="146" rx="6" ry="1.2" transform="rotate(-13 1194 146)" fill-opacity="0.48"/><ellipse cx="1214" cy="221" rx="12" ry="2.5" transform="rotate(-13 1214 221)" fill-opacity="0.63"/><ellipse cx="1106" cy="184" rx="17" ry="3.2" transform="rotate(-13 1106 184)" fill-opacity="0.63"/><ellipse cx="1140" cy="268" rx="20" ry="5.4" transform="rotate(-13 1140 268)" fill-opacity="0.52"/><ellipse cx="1357" cy="187" rx="18" ry="3.1" transform="rotate(-13 1357 187)" fill-opacity="0.60"/><ellipse cx="909" cy="272" rx="16" ry="4.6" transform="rotate(-13 909 272)" fill-opacity="0.63"/><ellipse cx="1307" cy="130" rx="15" ry="3.8" transform="rotate(-13 1307 130)" fill-opacity="0.58"/><ellipse cx="1290" cy="232" rx="21" ry="4.9" transform="rotate(-13 1290 232)" fill-opacity="0.67"/><ellipse cx="919" cy="235" rx="22" ry="6.3" transform="rotate(-13 919 235)" fill-opacity="0.51"/><ellipse cx="1074" cy="160" rx="16" ry="2.5" transform="rotate(-13 1074 160)" fill-opacity="0.58"/><ellipse cx="970" cy="245" rx="18" ry="3.1" transform="rotate(-13 970 245)" fill-opacity="0.50"/><ellipse cx="1076" cy="221" rx="20" ry="3.2" transform="rotate(-13 1076 221)" fill-opacity="0.58"/><ellipse cx="1152" cy="253" rx="20" ry="3.9" transform="rotate(-13 1152 253)" fill-opacity="0.57"/><ellipse cx="1061" cy="169" rx="20" ry="6.3" transform="rotate(-13 1061 169)" fill-opacity="0.46"/><ellipse cx="974" cy="239" rx="13" ry="3.3" transform="rotate(-13 974 239)" fill-opacity="0.51"/><ellipse cx="892" cy="276" rx="12" ry="2.6" transform="rotate(-13 892 276)" fill-opacity="0.63"/><ellipse cx="1344" cy="128" rx="15" ry="4.1" transform="rotate(-13 1344 128)" fill-opacity="0.42"/><ellipse cx="1318" cy="101" rx="18" ry="5.5" transform="rotate(-13 1318 101)" fill-opacity="0.72"/><ellipse cx="1077" cy="197" rx="16" ry="2.5" transform="rotate(-13 1077 197)" fill-opacity="0.43"/><ellipse cx="989" cy="242" rx="8" ry="1.6" transform="rotate(-13 989 242)" fill-opacity="0.42"/><ellipse cx="890" cy="263" rx="11" ry="1.7" transform="rotate(-13 890 263)" fill-opacity="0.75"/><ellipse cx="1182" cy="204" rx="8" ry="1.5" transform="rotate(-13 1182 204)" fill-opacity="0.54"/><ellipse cx="1063" cy="268" rx="22" ry="5.0" transform="rotate(-13 1063 268)" fill-opacity="0.59"/><ellipse cx="931" cy="289" rx="7" ry="1.4" transform="rotate(-13 931 289)" fill-opacity="0.51"/><ellipse cx="1285" cy="170" rx="21" ry="5.1" transform="rotate(-13 1285 170)" fill-opacity="0.46"/><ellipse cx="1149" cy="203" rx="5" ry="1.3" transform="rotate(-13 1149 203)" fill-opacity="0.79"/><ellipse cx="1301" cy="148" rx="11" ry="2.0" transform="rotate(-13 1301 148)" fill-opacity="0.71"/><ellipse cx="1144" cy="166" rx="18" ry="3.8" transform="rotate(-13 1144 166)" fill-opacity="0.49"/><ellipse cx="1276" cy="259" rx="19" ry="5.4" transform="rotate(-13 1276 259)" fill-opacity="0.70"/><ellipse cx="998" cy="224" rx="14" ry="2.9" transform="rotate(-13 998 224)" fill-opacity="0.41"/><ellipse cx="903" cy="248" rx="17" ry="5.2" transform="rotate(-13 903 248)" fill-opacity="0.58"/><ellipse cx="1336" cy="191" rx="22" ry="6.8" transform="rotate(-13 1336 191)" fill-opacity="0.55"/><ellipse cx="995" cy="234" rx="8" ry="2.2" transform="rotate(-13 995 234)" fill-opacity="0.76"/><ellipse cx="1290" cy="195" rx="13" ry="3.4" transform="rotate(-13 1290 195)" fill-opacity="0.72"/><ellipse cx="930" cy="208" rx="18" ry="5.1" transform="rotate(-13 930 208)" fill-opacity="0.59"/><ellipse cx="975" cy="172" rx="18" ry="3.8" transform="rotate(-13 975 172)" fill-opacity="0.72"/><ellipse cx="1353" cy="107" rx="21" ry="5.8" transform="rotate(-13 1353 107)" fill-opacity="0.47"/><ellipse cx="950" cy="261" rx="8" ry="2.3" transform="rotate(-13 950 261)" fill-opacity="0.72"/><ellipse cx="960" cy="282" rx="16" ry="3.4" transform="rotate(-13 960 282)" fill-opacity="0.62"/><ellipse cx="952" cy="159" rx="5" ry="1.7" transform="rotate(-13 952 159)" fill-opacity="0.66"/><ellipse cx="1141" cy="238" rx="20" ry="5.8" transform="rotate(-13 1141 238)" fill-opacity="0.48"/><ellipse cx="1010" cy="212" rx="10" ry="1.9" transform="rotate(-13 1010 212)" fill-opacity="0.63"/><ellipse cx="1013" cy="210" rx="20" ry="4.3" transform="rotate(-13 1013 210)" fill-opacity="0.58"/><ellipse cx="1168" cy="202" rx="20" ry="4.5" transform="rotate(-13 1168 202)" fill-opacity="0.77"/><ellipse cx="1129" cy="151" rx="5" ry="1.2" transform="rotate(-13 1129 151)" fill-opacity="0.47"/><ellipse cx="892" cy="247" rx="19" ry="3.3" transform="rotate(-13 892 247)" fill-opacity="0.59"/><ellipse cx="1235" cy="137" rx="14" ry="3.4" transform="rotate(-13 1235 137)" fill-opacity="0.71"/><ellipse cx="941" cy="233" rx="15" ry="2.8" transform="rotate(-13 941 233)" fill-opacity="0.51"/><ellipse cx="1258" cy="110" rx="18" ry="5.5" transform="rotate(-13 1258 110)" fill-opacity="0.58"/><ellipse cx="1182" cy="185" rx="14" ry="3.2" transform="rotate(-13 1182 185)" fill-opacity="0.68"/><ellipse cx="1105" cy="161" rx="21" ry="5.6" transform="rotate(-13 1105 161)" fill-opacity="0.75"/><ellipse cx="1338" cy="140" rx="9" ry="2.3" transform="rotate(-13 1338 140)" fill-opacity="0.78"/><ellipse cx="1290" cy="179" rx="13" ry="2.0" transform="rotate(-13 1290 179)" fill-opacity="0.50"/><ellipse cx="925" cy="259" rx="16" ry="4.6" transform="rotate(-13 925 259)" fill-opacity="0.76"/><ellipse cx="964" cy="228" rx="7" ry="2.2" transform="rotate(-13 964 228)" fill-opacity="0.79"/><ellipse cx="995" cy="181" rx="21" ry="4.6" transform="rotate(-13 995 181)" fill-opacity="0.59"/><ellipse cx="1361" cy="162" rx="12" ry="2.9" transform="rotate(-13 1361 162)" fill-opacity="0.54"/><ellipse cx="983" cy="216" rx="10" ry="2.8" transform="rotate(-13 983 216)" fill-opacity="0.41"/><ellipse cx="1154" cy="187" rx="11" ry="2.7" transform="rotate(-13 1154 187)" fill-opacity="0.60"/><ellipse cx="921" cy="250" rx="22" ry="6.2" transform="rotate(-13 921 250)" fill-opacity="0.79"/><ellipse cx="940" cy="243" rx="18" ry="3.6" transform="rotate(-13 940 243)" fill-opacity="0.45"/><ellipse cx="1091" cy="220" rx="20" ry="5.9" transform="rotate(-13 1091 220)" fill-opacity="0.50"/><ellipse cx="961" cy="276" rx="17" ry="2.8" transform="rotate(-13 961 276)" fill-opacity="0.42"/><ellipse cx="1218" cy="151" rx="12" ry="2.0" transform="rotate(-13 1218 151)" fill-opacity="0.78"/><ellipse cx="1192" cy="191" rx="20" ry="3.2" transform="rotate(-13 1192 191)" fill-opacity="0.75"/><ellipse cx="1106" cy="189" rx="11" ry="2.6" transform="rotate(-13 1106 189)" fill-opacity="0.77"/><ellipse cx="1018" cy="256" rx="9" ry="1.5" transform="rotate(-13 1018 256)" fill-opacity="0.46"/><ellipse cx="914" cy="277" rx="8" ry="1.7" transform="rotate(-13 914 277)" fill-opacity="0.52"/><ellipse cx="1252" cy="158" rx="8" ry="1.7" transform="rotate(-13 1252 158)" fill-opacity="0.41"/><ellipse cx="1009" cy="268" rx="5" ry="1.4" transform="rotate(-13 1009 268)" fill-opacity="0.62"/><ellipse cx="980" cy="155" rx="7" ry="2.0" transform="rotate(-13 980 155)" fill-opacity="0.57"/><ellipse cx="1126" cy="216" rx="19" ry="4.2" transform="rotate(-13 1126 216)" fill-opacity="0.60"/><ellipse cx="1217" cy="221" rx="19" ry="5.2" transform="rotate(-13 1217 221)" fill-opacity="0.65"/><ellipse cx="1083" cy="207" rx="11" ry="1.7" transform="rotate(-13 1083 207)" fill-opacity="0.45"/><ellipse cx="924" cy="246" rx="8" ry="1.3" transform="rotate(-13 924 246)" fill-opacity="0.74"/><ellipse cx="1304" cy="122" rx="16" ry="3.2" transform="rotate(-13 1304 122)" fill-opacity="0.50"/><ellipse cx="1029" cy="202" rx="13" ry="2.4" transform="rotate(-13 1029 202)" fill-opacity="0.78"/><ellipse cx="1353" cy="156" rx="14" ry="2.7" transform="rotate(-13 1353 156)" fill-opacity="0.79"/><ellipse cx="1037" cy="220" rx="11" ry="2.7" transform="rotate(-13 1037 220)" fill-opacity="0.60"/><ellipse cx="986" cy="234" rx="14" ry="2.0" transform="rotate(-13 986 234)" fill-opacity="0.51"/><ellipse cx="933" cy="238" rx="5" ry="1.2" transform="rotate(-13 933 238)" fill-opacity="0.49"/><ellipse cx="1169" cy="198" rx="14" ry="3.9" transform="rotate(-13 1169 198)" fill-opacity="0.66"/><ellipse cx="1231" cy="210" rx="11" ry="3.3" transform="rotate(-13 1231 210)" fill-opacity="0.46"/><ellipse cx="1235" cy="144" rx="16" ry="2.5" transform="rotate(-13 1235 144)" fill-opacity="0.73"/><ellipse cx="1315" cy="101" rx="19" ry="3.3" transform="rotate(-13 1315 101)" fill-opacity="0.61"/><ellipse cx="1130" cy="152" rx="19" ry="5.5" transform="rotate(-13 1130 152)" fill-opacity="0.73"/><ellipse cx="1168" cy="242" rx="17" ry="3.2" transform="rotate(-13 1168 242)" fill-opacity="0.41"/><ellipse cx="953" cy="209" rx="11" ry="1.9" transform="rotate(-13 953 209)" fill-opacity="0.73"/><ellipse cx="1156" cy="153" rx="17" ry="3.9" transform="rotate(-13 1156 153)" fill-opacity="0.40"/><ellipse cx="1270" cy="120" rx="18" ry="4.2" transform="rotate(-13 1270 120)" fill-opacity="0.61"/><ellipse cx="1204" cy="249" rx="9" ry="1.5" transform="rotate(-13 1204 249)" fill-opacity="0.51"/><ellipse cx="1237" cy="205" rx="8" ry="2.3" transform="rotate(-13 1237 205)" fill-opacity="0.79"/><ellipse cx="1125" cy="166" rx="17" ry="4.7" transform="rotate(-13 1125 166)" fill-opacity="0.65"/><ellipse cx="1196" cy="219" rx="6" ry="1.2" transform="rotate(-13 1196 219)" fill-opacity="0.50"/><ellipse cx="1244" cy="154" rx="5" ry="1.2" transform="rotate(-13 1244 154)" fill-opacity="0.51"/><ellipse cx="1210" cy="236" rx="17" ry="4.4" transform="rotate(-13 1210 236)" fill-opacity="0.52"/><ellipse cx="1136" cy="153" rx="7" ry="2.1" transform="rotate(-13 1136 153)" fill-opacity="0.48"/><ellipse cx="1356" cy="161" rx="21" ry="3.2" transform="rotate(-13 1356 161)" fill-opacity="0.58"/><ellipse cx="1280" cy="217" rx="10" ry="1.8" transform="rotate(-13 1280 217)" fill-opacity="0.78"/><ellipse cx="990" cy="224" rx="15" ry="2.6" transform="rotate(-13 990 224)" fill-opacity="0.61"/><ellipse cx="1344" cy="214" rx="14" ry="4.1" transform="rotate(-13 1344 214)" fill-opacity="0.68"/><ellipse cx="1000" cy="278" rx="20" ry="4.7" transform="rotate(-13 1000 278)" fill-opacity="0.41"/><ellipse cx="892" cy="222" rx="10" ry="1.8" transform="rotate(-13 892 222)" fill-opacity="0.54"/><ellipse cx="1040" cy="223" rx="19" ry="2.9" transform="rotate(-13 1040 223)" fill-opacity="0.70"/><ellipse cx="1289" cy="244" rx="17" ry="5.2" transform="rotate(-13 1289 244)" fill-opacity="0.52"/><ellipse cx="1067" cy="274" rx="12" ry="3.7" transform="rotate(-13 1067 274)" fill-opacity="0.64"/><ellipse cx="1062" cy="188" rx="6" ry="1.2" transform="rotate(-13 1062 188)" fill-opacity="0.73"/><ellipse cx="1026" cy="236" rx="21" ry="4.0" transform="rotate(-13 1026 236)" fill-opacity="0.51"/><ellipse cx="1133" cy="214" rx="21" ry="6.4" transform="rotate(-13 1133 214)" fill-opacity="0.72"/><ellipse cx="1190" cy="225" rx="21" ry="6.4" transform="rotate(-13 1190 225)" fill-opacity="0.62"/><ellipse cx="1233" cy="247" rx="13" ry="3.5" transform="rotate(-13 1233 247)" fill-opacity="0.66"/><ellipse cx="1026" cy="242" rx="6" ry="1.8" transform="rotate(-13 1026 242)" fill-opacity="0.45"/><ellipse cx="1115" cy="184" rx="18" ry="5.5" transform="rotate(-13 1115 184)" fill-opacity="0.50"/><ellipse cx="1202" cy="214" rx="10" ry="2.5" transform="rotate(-13 1202 214)" fill-opacity="0.56"/><ellipse cx="970" cy="249" rx="20" ry="4.8" transform="rotate(-13 970 249)" fill-opacity="0.49"/><ellipse cx="1321" cy="185" rx="22" ry="5.0" transform="rotate(-13 1321 185)" fill-opacity="0.46"/><ellipse cx="982" cy="260" rx="7" ry="1.2" transform="rotate(-13 982 260)" fill-opacity="0.50"/><ellipse cx="1161" cy="214" rx="20" ry="5.6" transform="rotate(-13 1161 214)" fill-opacity="0.57"/><ellipse cx="1087" cy="172" rx="11" ry="1.7" transform="rotate(-13 1087 172)" fill-opacity="0.51"/><ellipse cx="1351" cy="142" rx="7" ry="1.7" transform="rotate(-13 1351 142)" fill-opacity="0.65"/><ellipse cx="1301" cy="169" rx="9" ry="2.0" transform="rotate(-13 1301 169)" fill-opacity="0.58"/><ellipse cx="1344" cy="190" rx="19" ry="5.8" transform="rotate(-13 1344 190)" fill-opacity="0.41"/><ellipse cx="905" cy="235" rx="13" ry="3.3" transform="rotate(-13 905 235)" fill-opacity="0.40"/><ellipse cx="1076" cy="133" rx="21" ry="6.0" transform="rotate(-13 1076 133)" fill-opacity="0.74"/><ellipse cx="1353" cy="149" rx="8" ry="1.8" transform="rotate(-13 1353 149)" fill-opacity="0.67"/><ellipse cx="1338" cy="176" rx="17" ry="4.5" transform="rotate(-13 1338 176)" fill-opacity="0.71"/><ellipse cx="1108" cy="194" rx="18" ry="3.5" transform="rotate(-13 1108 194)" fill-opacity="0.77"/><ellipse cx="1197" cy="180" rx="10" ry="1.7" transform="rotate(-13 1197 180)" fill-opacity="0.50"/><ellipse cx="1193" cy="179" rx="6" ry="1.5" transform="rotate(-13 1193 179)" fill-opacity="0.63"/><ellipse cx="1075" cy="195" rx="9" ry="2.2" transform="rotate(-13 1075 195)" fill-opacity="0.40"/><ellipse cx="1034" cy="132" rx="16" ry="4.8" transform="rotate(-13 1034 132)" fill-opacity="0.59"/><ellipse cx="1002" cy="251" rx="9" ry="2.9" transform="rotate(-13 1002 251)" fill-opacity="0.68"/><ellipse cx="1036" cy="264" rx="16" ry="3.6" transform="rotate(-13 1036 264)" fill-opacity="0.50"/><ellipse cx="1208" cy="189" rx="21" ry="3.9" transform="rotate(-13 1208 189)" fill-opacity="0.41"/><ellipse cx="1051" cy="168" rx="8" ry="2.4" transform="rotate(-13 1051 168)" fill-opacity="0.70"/><ellipse cx="1130" cy="230" rx="8" ry="2.7" transform="rotate(-13 1130 230)" fill-opacity="0.52"/><ellipse cx="1280" cy="169" rx="18" ry="3.6" transform="rotate(-13 1280 169)" fill-opacity="0.78"/><ellipse cx="1126" cy="229" rx="8" ry="1.5" transform="rotate(-13 1126 229)" fill-opacity="0.57"/><ellipse cx="1207" cy="206" rx="12" ry="2.2" transform="rotate(-13 1207 206)" fill-opacity="0.79"/><ellipse cx="958" cy="234" rx="6" ry="1.2" transform="rotate(-13 958 234)" fill-opacity="0.56"/><ellipse cx="1318" cy="217" rx="22" ry="6.8" transform="rotate(-13 1318 217)" fill-opacity="0.53"/><ellipse cx="978" cy="198" rx="21" ry="5.8" transform="rotate(-13 978 198)" fill-opacity="0.41"/><ellipse cx="1206" cy="151" rx="11" ry="1.9" transform="rotate(-13 1206 151)" fill-opacity="0.40"/><ellipse cx="1023" cy="249" rx="11" ry="3.4" transform="rotate(-13 1023 249)" fill-opacity="0.45"/><ellipse cx="1349" cy="162" rx="19" ry="5.5" transform="rotate(-13 1349 162)" fill-opacity="0.57"/><ellipse cx="913" cy="278" rx="13" ry="2.8" transform="rotate(-13 913 278)" fill-opacity="0.77"/><ellipse cx="982" cy="186" rx="6" ry="1.2" transform="rotate(-13 982 186)" fill-opacity="0.72"/><ellipse cx="1255" cy="246" rx="6" ry="1.2" transform="rotate(-13 1255 246)" fill-opacity="0.43"/><ellipse cx="1328" cy="151" rx="20" ry="4.2" transform="rotate(-13 1328 151)" fill-opacity="0.51"/><ellipse cx="1346" cy="235" rx="15" ry="3.0" transform="rotate(-13 1346 235)" fill-opacity="0.69"/><ellipse cx="1041" cy="220" rx="18" ry="5.5" transform="rotate(-13 1041 220)" fill-opacity="0.65"/><ellipse cx="1339" cy="156" rx="5" ry="1.2" transform="rotate(-13 1339 156)" fill-opacity="0.59"/><ellipse cx="1345" cy="199" rx="9" ry="2.1" transform="rotate(-13 1345 199)" fill-opacity="0.60"/><ellipse cx="1332" cy="139" rx="8" ry="2.3" transform="rotate(-13 1332 139)" fill-opacity="0.70"/><ellipse cx="1282" cy="174" rx="11" ry="2.2" transform="rotate(-13 1282 174)" fill-opacity="0.54"/><ellipse cx="1262" cy="105" rx="6" ry="1.2" transform="rotate(-13 1262 105)" fill-opacity="0.70"/><ellipse cx="1008" cy="236" rx="14" ry="3.0" transform="rotate(-13 1008 236)" fill-opacity="0.79"/><ellipse cx="1311" cy="163" rx="22" ry="4.3" transform="rotate(-13 1311 163)" fill-opacity="0.43"/><ellipse cx="936" cy="194" rx="13" ry="2.4" transform="rotate(-13 936 194)" fill-opacity="0.57"/><ellipse cx="1185" cy="188" rx="16" ry="4.6" transform="rotate(-13 1185 188)" fill-opacity="0.74"/><ellipse cx="1206" cy="244" rx="10" ry="2.5" transform="rotate(-13 1206 244)" fill-opacity="0.55"/><ellipse cx="1241" cy="235" rx="8" ry="1.6" transform="rotate(-13 1241 235)" fill-opacity="0.50"/><ellipse cx="963" cy="271" rx="11" ry="2.3" transform="rotate(-13 963 271)" fill-opacity="0.80"/><ellipse cx="1131" cy="163" rx="9" ry="2.6" transform="rotate(-13 1131 163)" fill-opacity="0.66"/><ellipse cx="1362" cy="194" rx="19" ry="5.5" transform="rotate(-13 1362 194)" fill-opacity="0.77"/><ellipse cx="909" cy="272" rx="10" ry="1.7" transform="rotate(-13 909 272)" fill-opacity="0.48"/><ellipse cx="1353" cy="46" rx="11" ry="3.4" transform="rotate(-13 1353 46)" fill-opacity="0.58"/><ellipse cx="1014" cy="185" rx="18" ry="5.7" transform="rotate(-13 1014 185)" fill-opacity="0.44"/><ellipse cx="1174" cy="168" rx="11" ry="2.0" transform="rotate(-13 1174 168)" fill-opacity="0.48"/><ellipse cx="1011" cy="210" rx="15" ry="4.0" transform="rotate(-13 1011 210)" fill-opacity="0.48"/><ellipse cx="895" cy="232" rx="8" ry="1.7" transform="rotate(-13 895 232)" fill-opacity="0.48"/><ellipse cx="1269" cy="231" rx="14" ry="2.3" transform="rotate(-13 1269 231)" fill-opacity="0.44"/><ellipse cx="1078" cy="159" rx="7" ry="1.2" transform="rotate(-13 1078 159)" fill-opacity="0.68"/><ellipse cx="1085" cy="193" rx="10" ry="2.0" transform="rotate(-13 1085 193)" fill-opacity="0.78"/><ellipse cx="1039" cy="189" rx="12" ry="3.6" transform="rotate(-13 1039 189)" fill-opacity="0.80"/><ellipse cx="1063" cy="201" rx="8" ry="2.3" transform="rotate(-13 1063 201)" fill-opacity="0.48"/><ellipse cx="893" cy="280" rx="19" ry="4.2" transform="rotate(-13 893 280)" fill-opacity="0.75"/><ellipse cx="1109" cy="180" rx="8" ry="1.2" transform="rotate(-13 1109 180)" fill-opacity="0.62"/><ellipse cx="1195" cy="201" rx="16" ry="3.3" transform="rotate(-13 1195 201)" fill-opacity="0.60"/><ellipse cx="959" cy="231" rx="10" ry="2.3" transform="rotate(-13 959 231)" fill-opacity="0.77"/><ellipse cx="942" cy="185" rx="21" ry="3.9" transform="rotate(-13 942 185)" fill-opacity="0.45"/><ellipse cx="1339" cy="157" rx="22" ry="5.0" transform="rotate(-13 1339 157)" fill-opacity="0.42"/><ellipse cx="1331" cy="70" rx="16" ry="4.5" transform="rotate(-13 1331 70)" fill-opacity="0.46"/><ellipse cx="1264" cy="235" rx="9" ry="1.9" transform="rotate(-13 1264 235)" fill-opacity="0.74"/><ellipse cx="1285" cy="178" rx="12" ry="2.8" transform="rotate(-13 1285 178)" fill-opacity="0.55"/><ellipse cx="949" cy="262" rx="9" ry="2.5" transform="rotate(-13 949 262)" fill-opacity="0.76"/><ellipse cx="910" cy="202" rx="6" ry="1.7" transform="rotate(-13 910 202)" fill-opacity="0.45"/><ellipse cx="1175" cy="162" rx="14" ry="3.7" transform="rotate(-13 1175 162)" fill-opacity="0.52"/><ellipse cx="1090" cy="173" rx="16" ry="3.7" transform="rotate(-13 1090 173)" fill-opacity="0.58"/><ellipse cx="901" cy="236" rx="16" ry="3.6" transform="rotate(-13 901 236)" fill-opacity="0.49"/><ellipse cx="1253" cy="181" rx="8" ry="1.9" transform="rotate(-13 1253 181)" fill-opacity="0.44"/><ellipse cx="951" cy="205" rx="12" ry="2.0" transform="rotate(-13 951 205)" fill-opacity="0.58"/><ellipse cx="1133" cy="256" rx="6" ry="1.8" transform="rotate(-13 1133 256)" fill-opacity="0.71"/><ellipse cx="1133" cy="214" rx="6" ry="1.4" transform="rotate(-13 1133 214)" fill-opacity="0.55"/><ellipse cx="1343" cy="217" rx="22" ry="6.0" transform="rotate(-13 1343 217)" fill-opacity="0.73"/><ellipse cx="982" cy="285" rx="22" ry="5.1" transform="rotate(-13 982 285)" fill-opacity="0.78"/><ellipse cx="1326" cy="200" rx="21" ry="3.4" transform="rotate(-13 1326 200)" fill-opacity="0.54"/><ellipse cx="1250" cy="243" rx="8" ry="2.3" transform="rotate(-13 1250 243)" fill-opacity="0.51"/><ellipse cx="1278" cy="201" rx="21" ry="3.8" transform="rotate(-13 1278 201)" fill-opacity="0.51"/><ellipse cx="1131" cy="238" rx="10" ry="1.6" transform="rotate(-13 1131 238)" fill-opacity="0.47"/><ellipse cx="967" cy="284" rx="20" ry="3.6" transform="rotate(-13 967 284)" fill-opacity="0.71"/><ellipse cx="945" cy="223" rx="14" ry="3.6" transform="rotate(-13 945 223)" fill-opacity="0.54"/><ellipse cx="1306" cy="98" rx="20" ry="3.4" transform="rotate(-13 1306 98)" fill-opacity="0.80"/><ellipse cx="1190" cy="166" rx="12" ry="3.3" transform="rotate(-13 1190 166)" fill-opacity="0.51"/><ellipse cx="1361" cy="103" rx="18" ry="4.1" transform="rotate(-13 1361 103)" fill-opacity="0.47"/><ellipse cx="1244" cy="153" rx="6" ry="1.7" transform="rotate(-13 1244 153)" fill-opacity="0.50"/><ellipse cx="1194" cy="243" rx="16" ry="3.3" transform="rotate(-13 1194 243)" fill-opacity="0.40"/><ellipse cx="906" cy="247" rx="8" ry="1.9" transform="rotate(-13 906 247)" fill-opacity="0.57"/><ellipse cx="1134" cy="216" rx="9" ry="2.3" transform="rotate(-13 1134 216)" fill-opacity="0.41"/><ellipse cx="891" cy="245" rx="11" ry="1.9" transform="rotate(-13 891 245)" fill-opacity="0.54"/><ellipse cx="997" cy="190" rx="8" ry="2.2" transform="rotate(-13 997 190)" fill-opacity="0.59"/><ellipse cx="954" cy="218" rx="21" ry="4.0" transform="rotate(-13 954 218)" fill-opacity="0.46"/><ellipse cx="936" cy="203" rx="18" ry="4.0" transform="rotate(-13 936 203)" fill-opacity="0.51"/><ellipse cx="895" cy="207" rx="16" ry="3.9" transform="rotate(-13 895 207)" fill-opacity="0.54"/><ellipse cx="1197" cy="87" rx="17" ry="3.4" transform="rotate(-13 1197 87)" fill-opacity="0.76"/><ellipse cx="911" cy="275" rx="14" ry="3.1" transform="rotate(-13 911 275)" fill-opacity="0.50"/><ellipse cx="918" cy="249" rx="14" ry="4.5" transform="rotate(-13 918 249)" fill-opacity="0.46"/><ellipse cx="985" cy="228" rx="15" ry="3.6" transform="rotate(-13 985 228)" fill-opacity="0.66"/><ellipse cx="1277" cy="185" rx="10" ry="1.6" transform="rotate(-13 1277 185)" fill-opacity="0.76"/><ellipse cx="1263" cy="205" rx="17" ry="2.6" transform="rotate(-13 1263 205)" fill-opacity="0.74"/><ellipse cx="1245" cy="99" rx="13" ry="2.4" transform="rotate(-13 1245 99)" fill-opacity="0.44"/><ellipse cx="1001" cy="242" rx="6" ry="1.2" transform="rotate(-13 1001 242)" fill-opacity="0.70"/><ellipse cx="1221" cy="219" rx="10" ry="2.3" transform="rotate(-13 1221 219)" fill-opacity="0.57"/><ellipse cx="1265" cy="107" rx="14" ry="2.7" transform="rotate(-13 1265 107)" fill-opacity="0.66"/><ellipse cx="1349" cy="171" rx="5" ry="1.2" transform="rotate(-13 1349 171)" fill-opacity="0.49"/><ellipse cx="1244" cy="267" rx="21" ry="5.8" transform="rotate(-13 1244 267)" fill-opacity="0.53"/><ellipse cx="1309" cy="141" rx="20" ry="5.3" transform="rotate(-13 1309 141)" fill-opacity="0.68"/><ellipse cx="1207" cy="211" rx="22" ry="5.0" transform="rotate(-13 1207 211)" fill-opacity="0.74"/><ellipse cx="1222" cy="209" rx="17" ry="4.3" transform="rotate(-13 1222 209)" fill-opacity="0.52"/><ellipse cx="991" cy="203" rx="16" ry="2.5" transform="rotate(-13 991 203)" fill-opacity="0.76"/><ellipse cx="959" cy="255" rx="21" ry="4.3" transform="rotate(-13 959 255)" fill-opacity="0.46"/><ellipse cx="904" cy="254" rx="6" ry="1.5" transform="rotate(-13 904 254)" fill-opacity="0.65"/><ellipse cx="1222" cy="177" rx="15" ry="3.2" transform="rotate(-13 1222 177)" fill-opacity="0.73"/><ellipse cx="1280" cy="148" rx="20" ry="3.2" transform="rotate(-13 1280 148)" fill-opacity="0.75"/><ellipse cx="1325" cy="177" rx="8" ry="1.4" transform="rotate(-13 1325 177)" fill-opacity="0.41"/><ellipse cx="1294" cy="154" rx="19" ry="4.8" transform="rotate(-13 1294 154)" fill-opacity="0.73"/><ellipse cx="1191" cy="181" rx="7" ry="1.9" transform="rotate(-13 1191 181)" fill-opacity="0.48"/><ellipse cx="1042" cy="237" rx="12" ry="1.9" transform="rotate(-13 1042 237)" fill-opacity="0.50"/><ellipse cx="1025" cy="217" rx="10" ry="3.3" transform="rotate(-13 1025 217)" fill-opacity="0.60"/><ellipse cx="1295" cy="116" rx="16" ry="2.4" transform="rotate(-13 1295 116)" fill-opacity="0.57"/><ellipse cx="1098" cy="212" rx="17" ry="4.1" transform="rotate(-13 1098 212)" fill-opacity="0.49"/><ellipse cx="1300" cy="116" rx="7" ry="1.9" transform="rotate(-13 1300 116)" fill-opacity="0.47"/><ellipse cx="891" cy="270" rx="22" ry="3.3" transform="rotate(-13 891 270)" fill-opacity="0.60"/><ellipse cx="1124" cy="267" rx="19" ry="3.4" transform="rotate(-13 1124 267)" fill-opacity="0.60"/><ellipse cx="1055" cy="231" rx="21" ry="4.2" transform="rotate(-13 1055 231)" fill-opacity="0.49"/><ellipse cx="1223" cy="148" rx="13" ry="2.3" transform="rotate(-13 1223 148)" fill-opacity="0.65"/><ellipse cx="929" cy="258" rx="18" ry="4.7" transform="rotate(-13 929 258)" fill-opacity="0.54"/><ellipse cx="1081" cy="153" rx="12" ry="3.5" transform="rotate(-13 1081 153)" fill-opacity="0.43"/><ellipse cx="1313" cy="191" rx="9" ry="2.9" transform="rotate(-13 1313 191)" fill-opacity="0.60"/><ellipse cx="1071" cy="218" rx="20" ry="3.8" transform="rotate(-13 1071 218)" fill-opacity="0.58"/><ellipse cx="1143" cy="199" rx="16" ry="3.3" transform="rotate(-13 1143 199)" fill-opacity="0.53"/><ellipse cx="964" cy="182" rx="19" ry="5.1" transform="rotate(-13 964 182)" fill-opacity="0.70"/><ellipse cx="971" cy="183" rx="15" ry="2.5" transform="rotate(-13 971 183)" fill-opacity="0.58"/><ellipse cx="1311" cy="190" rx="9" ry="1.7" transform="rotate(-13 1311 190)" fill-opacity="0.52"/><ellipse cx="1225" cy="193" rx="8" ry="1.5" transform="rotate(-13 1225 193)" fill-opacity="0.53"/><ellipse cx="1139" cy="178" rx="8" ry="1.6" transform="rotate(-13 1139 178)" fill-opacity="0.48"/><ellipse cx="1354" cy="145" rx="21" ry="3.6" transform="rotate(-13 1354 145)" fill-opacity="0.55"/><ellipse cx="1358" cy="124" rx="19" ry="5.1" transform="rotate(-13 1358 124)" fill-opacity="0.57"/><ellipse cx="983" cy="223" rx="9" ry="1.8" transform="rotate(-13 983 223)" fill-opacity="0.41"/><ellipse cx="1080" cy="197" rx="18" ry="4.9" transform="rotate(-13 1080 197)" fill-opacity="0.60"/><ellipse cx="1191" cy="162" rx="15" ry="3.3" transform="rotate(-13 1191 162)" fill-opacity="0.70"/><ellipse cx="1322" cy="162" rx="12" ry="3.0" transform="rotate(-13 1322 162)" fill-opacity="0.70"/><ellipse cx="1090" cy="217" rx="20" ry="5.6" transform="rotate(-13 1090 217)" fill-opacity="0.68"/><ellipse cx="1296" cy="239" rx="17" ry="4.3" transform="rotate(-13 1296 239)" fill-opacity="0.58"/><ellipse cx="1039" cy="209" rx="12" ry="3.4" transform="rotate(-13 1039 209)" fill-opacity="0.69"/><ellipse cx="1190" cy="172" rx="9" ry="2.1" transform="rotate(-13 1190 172)" fill-opacity="0.58"/><ellipse cx="1186" cy="132" rx="21" ry="3.8" transform="rotate(-13 1186 132)" fill-opacity="0.66"/><ellipse cx="1260" cy="208" rx="12" ry="2.7" transform="rotate(-13 1260 208)" fill-opacity="0.79"/><ellipse cx="908" cy="233" rx="18" ry="5.7" transform="rotate(-13 908 233)" fill-opacity="0.61"/><ellipse cx="938" cy="239" rx="15" ry="3.6" transform="rotate(-13 938 239)" fill-opacity="0.69"/><ellipse cx="1134" cy="149" rx="14" ry="3.0" transform="rotate(-13 1134 149)" fill-opacity="0.78"/><ellipse cx="990" cy="182" rx="17" ry="3.6" transform="rotate(-13 990 182)" fill-opacity="0.71"/><ellipse cx="948" cy="272" rx="6" ry="1.2" transform="rotate(-13 948 272)" fill-opacity="0.56"/><ellipse cx="896" cy="251" rx="12" ry="2.7" transform="rotate(-13 896 251)" fill-opacity="0.68"/><ellipse cx="1058" cy="214" rx="18" ry="5.5" transform="rotate(-13 1058 214)" fill-opacity="0.61"/><ellipse cx="994" cy="256" rx="19" ry="4.0" transform="rotate(-13 994 256)" fill-opacity="0.48"/><ellipse cx="952" cy="251" rx="16" ry="3.6" transform="rotate(-13 952 251)" fill-opacity="0.62"/><ellipse cx="998" cy="167" rx="21" ry="4.5" transform="rotate(-13 998 167)" fill-opacity="0.66"/><ellipse cx="1280" cy="187" rx="10" ry="2.4" transform="rotate(-13 1280 187)" fill-opacity="0.45"/><ellipse cx="1287" cy="114" rx="11" ry="3.2" transform="rotate(-13 1287 114)" fill-opacity="0.51"/><ellipse cx="1069" cy="213" rx="8" ry="1.2" transform="rotate(-13 1069 213)" fill-opacity="0.69"/><ellipse cx="1024" cy="262" rx="9" ry="1.8" transform="rotate(-13 1024 262)" fill-opacity="0.59"/><ellipse cx="1094" cy="170" rx="11" ry="3.4" transform="rotate(-13 1094 170)" fill-opacity="0.74"/><ellipse cx="917" cy="214" rx="19" ry="5.8" transform="rotate(-13 917 214)" fill-opacity="0.71"/><ellipse cx="957" cy="263" rx="5" ry="1.2" transform="rotate(-13 957 263)" fill-opacity="0.78"/><ellipse cx="1202" cy="128" rx="9" ry="1.5" transform="rotate(-13 1202 128)" fill-opacity="0.46"/><ellipse cx="1001" cy="235" rx="8" ry="2.3" transform="rotate(-13 1001 235)" fill-opacity="0.72"/><ellipse cx="970" cy="206" rx="20" ry="5.1" transform="rotate(-13 970 206)" fill-opacity="0.71"/><ellipse cx="1208" cy="244" rx="19" ry="3.5" transform="rotate(-13 1208 244)" fill-opacity="0.68"/><ellipse cx="1143" cy="151" rx="18" ry="4.0" transform="rotate(-13 1143 151)" fill-opacity="0.75"/><ellipse cx="1154" cy="191" rx="7" ry="1.7" transform="rotate(-13 1154 191)" fill-opacity="0.42"/><ellipse cx="1112" cy="233" rx="7" ry="1.7" transform="rotate(-13 1112 233)" fill-opacity="0.60"/><ellipse cx="1147" cy="199" rx="19" ry="4.4" transform="rotate(-13 1147 199)" fill-opacity="0.63"/><ellipse cx="1207" cy="178" rx="19" ry="4.1" transform="rotate(-13 1207 178)" fill-opacity="0.57"/><ellipse cx="1347" cy="215" rx="16" ry="2.4" transform="rotate(-13 1347 215)" fill-opacity="0.64"/><ellipse cx="1215" cy="210" rx="21" ry="4.3" transform="rotate(-13 1215 210)" fill-opacity="0.79"/><ellipse cx="1133" cy="111" rx="6" ry="1.5" transform="rotate(-13 1133 111)" fill-opacity="0.65"/><ellipse cx="1051" cy="226" rx="20" ry="4.2" transform="rotate(-13 1051 226)" fill-opacity="0.59"/><ellipse cx="1140" cy="201" rx="12" ry="2.8" transform="rotate(-13 1140 201)" fill-opacity="0.62"/><ellipse cx="1284" cy="132" rx="10" ry="2.9" transform="rotate(-13 1284 132)" fill-opacity="0.56"/><ellipse cx="1130" cy="193" rx="22" ry="5.6" transform="rotate(-13 1130 193)" fill-opacity="0.72"/><ellipse cx="1048" cy="263" rx="10" ry="2.1" transform="rotate(-13 1048 263)" fill-opacity="0.63"/><ellipse cx="1192" cy="188" rx="17" ry="5.2" transform="rotate(-13 1192 188)" fill-opacity="0.62"/><ellipse cx="914" cy="241" rx="10" ry="1.5" transform="rotate(-13 914 241)" fill-opacity="0.48"/><ellipse cx="1329" cy="97" rx="18" ry="5.6" transform="rotate(-13 1329 97)" fill-opacity="0.64"/><ellipse cx="1184" cy="147" rx="16" ry="4.2" transform="rotate(-13 1184 147)" fill-opacity="0.64"/><ellipse cx="1214" cy="196" rx="13" ry="3.6" transform="rotate(-13 1214 196)" fill-opacity="0.44"/><ellipse cx="976" cy="284" rx="6" ry="1.6" transform="rotate(-13 976 284)" fill-opacity="0.77"/><ellipse cx="1202" cy="127" rx="18" ry="4.5" transform="rotate(-13 1202 127)" fill-opacity="0.50"/><ellipse cx="1034" cy="272" rx="12" ry="2.5" transform="rotate(-13 1034 272)" fill-opacity="0.57"/><ellipse cx="1195" cy="198" rx="15" ry="2.3" transform="rotate(-13 1195 198)" fill-opacity="0.45"/><ellipse cx="1276" cy="160" rx="15" ry="4.5" transform="rotate(-13 1276 160)" fill-opacity="0.58"/><ellipse cx="897" cy="223" rx="21" ry="6.6" transform="rotate(-13 897 223)" fill-opacity="0.59"/><ellipse cx="1086" cy="244" rx="7" ry="1.7" transform="rotate(-13 1086 244)" fill-opacity="0.48"/></g><g transform="rotate(-13 1128 200)"><path d="M958 198h31M944 196h39M926 206h11M1240 180h17M1242 201h33M1231 208h36M1230 246h31M1104 221h38M997 245h10M894 185h30M1277 228h32M963 208h36M1115 228h27M1096 208h30M954 204h29M1201 160h23M1069 214h34M1182 106h19M904 239h35M1049 187h28M1355 226h19M1104 153h37M1073 177h37M1292 142h18M886 193h28M1273 241h37M900 221h36M1178 135h18M1295 219h37M1065 147h13M1154 203h33M1347 167h17M1186 176h16M1017 163h33M1276 178h34M1261 200h17M1153 259h26M1128 149h28M976 202h31M1057 216h27M1086 176h11M1373 193h21M945 161h15M1188 145h20M1136 205h40M1308 197h25M1163 191h23M1329 275h33M1277 228h11M984 190h15M918 230h36M1105 210h38M1316 251h22M940 211h39M1020 153h39M1217 173h22M1092 246h40M977 265h11M1019 154h37M1276 271h11M1273 180h40M921 156h14M1240 254h19M1179 174h33M939 185h14M1114 221h15M994 225h10M1224 244h16M898 213h38M1311 182h37M956 182h38M1295 202h29M1114 159h24M1177 258h14M982 242h27M952 212h36M1019 179h18M1292 209h20M973 169h37M940 197h39M905 229h16M1126 162h19M1009 204h40M1363 238h38M936 180h12M1220 281h19M1344 279h20M952 201h10M1298 168h23M1331 191h17M1160 211h33M1228 215h16M916 229h25M1013 219h16M1188 177h27M996 140h12M1256 140h12M1272 233h20M1288 229h10M1339 156h24M1311 193h35M1059 217h15M1067 193h26M1103 193h25M947 183h36M1056 135h31M1071 195h36M1355 179h25M1146 150h11M1360 185h17M970 214h35M897 208h13M1226 198h28M1165 202h26M1213 261h32M899 229h14M1133 165h14M1083 195h14M1171 209h27M1254 177h15M1279 235h23M1299 179h26M1065 252h20M1007 175h20M1083 260h37M1285 186h35M927 124h38M1009 186h23M1201 163h12M1089 228h25M884 242h33M1321 288h29M1265 262h11M1211 141h18M1218 188h38M1177 244h18M1158 111h19M1026 228h29M958 134h25M1026 150h24M1143 207h14M1025 209h22M1026 196h26M1291 214h28M1167 180h31M1115 176h26M1192 162h17M992 201h25M1073 191h21M1307 192h17M1164 164h40M1029 197h33M949 251h23M910 219h22M1100 194h17M1358 174h32M964 181h30M1179 227h35M1302 125h32M1258 188h24" stroke="#f0fcff" stroke-width="2.6" stroke-opacity=".6" stroke-linecap="round" fill="none" filter="url(#b1)"/></g><g transform="rotate(-13 1128 200)" stroke="#e8fbff" stroke-linecap="round" fill="none"><path stroke-width="1.3" stroke-opacity="0.6" d="M1124 227h0.5M1400 111h0.5M1234 221h0.8M1140 148h0.5M1082 196h0.8M1052 214h0.3M1204 237h0.7M1065 241h0.8M1020 233h0.4M1303 283h0.5M888 249h0.4M892 246h0.8M1139 256h0.5M1356 172h0.6M902 257h0.7M1372 199h0.6M951 253h0.4M1029 165h0.6M1034 172h0.4M1221 189h0.6M1363 178h0.8M1153 243h0.4M1308 277h0.4M1001 184h0.7M969 227h0.3M949 135h0.6M922 176h0.8M1066 235h0.6M1070 96h0.4M1208 236h0.6M1343 234h0.8M913 181h0.9M1120 204h0.4M1162 211h0.5M907 224h0.3M1290 180h0.6M913 177h0.7M1189 194h0.4M1186 9h0.3M1268 160h0.4M1021 287h0.7M1064 273h0.6M1063 294h0.5M1014 186h0.4M1270 159h0.6M1010 280h0.8M940 262h0.4M1348 299h0.8M888 202h0.8M933 226h0.7M1049 234h0.9M1327 181h0.4M1178 225h0.7M1214 156h0.7M1192 213h0.8M1293 178h0.8M1066 198h0.6M1068 192h0.3M946 165h0.8M929 204h0.7M1249 145h0.7M1046 202h0.9M1128 232h0.5M1305 242h0.3M1165 192h0.7M1084 214h0.8M1208 268h0.8M1067 211h0.6M921 209h0.8M1045 204h0.8M1171 137h0.6M932 182h0.6M1058 191h0.9M940 192h0.6M1130 217h0.4M991 211h0.5M1083 200h0.7M1222 190h0.4M1007 192h0.4M1181 205h0.4M1065 162h0.5M925 263h0.5M1354 227h0.8M986 280h0.6M1024 279h0.7M1075 177h0.4M1038 188h0.5M1032 233h0.5M1069 233h0.8M1077 240h0.5M1364 146h0.5M1182 343h0.5M1081 202h0.8M1284 271h0.5M1040 220h0.8M976 231h0.8M1056 178h0.7M1133 222h0.7M1009 209h0.7M1281 211h0.4M1108 242h0.4M1159 211h0.8M1239 236h0.3M925 227h0.4M1187 246h0.4M1363 229h0.9M1365 211h0.8M1145 142h0.3M1009 185h0.6M1298 204h0.5M960 77h0.7M1215 247h0.8M1015 152h0.7M1182 190h0.3M914 191h0.6M1360 225h0.8M1222 175h0.4M1205 206h0.8M989 265h0.5M1107 213h0.4M1118 208h0.3M995 219h0.5M1356 275h0.3M1338 176h0.7M1058 298h0.6M1000 166h0.5M1042 239h0.8M877 207h0.6M1156 224h0.9M1348 251h0.8M933 191h0.5M1200 229h0.4M1203 240h0.5M886 199h0.3M971 176h0.4M1010 210h0.9M1366 203h0.6M1046 174h0.4M1355 158h0.4M931 180h0.7M886 236h0.5M1216 132h0.5M1226 140h0.4M1058 111h0.7M1111 201h0.6M1203 144h0.3M1364 236h0.6M916 226h0.9M903 205h0.3M977 152h0.4M1362 224h0.7M1238 243h0.8M1028 292h0.6M1370 231h0.7M1042 230h0.5M1020 132h0.3M1342 282h0.7M1137 219h0.7M1101 180h0.5M1063 119h0.6M1286 90h0.3M1093 195h0.5M1093 186h0.5M1237 207h0.5M1154 132h0.7M967 127h0.8M1023 108h0.5M1185 219h0.4M1032 225h0.6M1174 212h0.3M1220 227h0.8M1159 194h0.5M1158 165h0.7M877 254h0.8M1173 227h0.3M1233 207h0.4M1118 110h0.4M1371 189h0.4M1060 180h0.6M1314 235h0.5M1331 294h0.4M1076 178h0.8M1384 168h0.7M1325 279h0.8M1346 207h0.4M1198 204h0.6M1114 190h0.9M1311 188h0.8M1375 144h0.7M1147 231h0.5M1067 167h0.9M877 237h0.8M1272 304h0.4M1066 170h0.4M969 151h0.6M1288 220h0.6M963 230h0.7M1086 236h0.4M1295 241h0.6M1342 158h0.5M988 160h0.5M1248 95h0.7M1295 143h0.3M917 234h0.8M1351 265h0.6M1263 214h0.9M1146 154h0.5M1262 81h0.6M1180 279h0.3M1286 190h0.4M1288 158h0.6M1109 161h0.4M1063 212h0.7M1174 198h0.7M1178 214h0.4M1047 151h0.9M975 308h0.7M1063 223h0.8M1147 81h0.5M1301 114h0.8M1084 268h0.3M942 174h0.8M1168 145h0.5M1320 247h0.3M1190 210h0.5M1264 242h0.7M1065 211h0.8M1114 278h0.9M1174 170h0.7M926 216h0.4M980 248h0.4M1216 255h0.8M1297 199h0.5M1302 202h0.5M879 246h0.7M1164 151h0.7M1077 197h0.6M1328 266h0.7M882 228h0.4M983 232h0.4M1134 222h0.4M1372 122h0.3M1013 215h0.8M1325 401h0.8M1266 286h0.5M1179 138h0.9M1317 216h0.5M969 181h0.4M958 193h0.8M1090 233h0.8M1060 230h0.3M943 192h0.7M1304 121h0.6M1016 183h0.7M1101 205h0.7M1355 253h0.6M1194 241h0.7M1380 199h0.3M1248 253h0.9M1312 123h0.6M1068 207h0.6M1368 154h0.8M904 129h0.8M1323 92h0.7M1235 148h0.6M907 238h0.7M906 148h0.8M1264 88h0.5M1058 254h0.7M1000 139h0.8M1070 166h0.6M1151 248h0.4M1153 184h0.3M1099 217h0.4M1384 133h0.5M998 185h0.6M1318 190h0.7M1035 172h0.8M1148 200h0.5M955 246h0.4M995 243h0.8M1385 77h0.5M1056 131h0.8M987 191h0.5M1165 219h0.6M1100 279h0.8M1165 284h0.7M962 249h0.5M1193 195h0.4M1121 175h0.6M1100 142h0.6M887 200h0.4M1255 161h0.7M993 153h0.5M1020 210h0.3M1107 234h0.8M1101 239h0.7M1004 199h0.5M1008 193h0.5M1071 322h0.4M1045 310h0.8M1069 158h0.4M1228 235h0.8M1151 217h0.5M1224 128h0.4M1394 104h0.3M1329 183h0.4M1300 129h0.5M938 132h0.7M1073 122h0.4M887 254h0.7M1270 208h0.8M1226 131h0.4M1271 243h0.9M947 162h0.8M1280 195h0.4M1268 174h0.8M1099 249h0.5M1012 221h0.4M1167 158h0.9M1280 217h0.4M1304 208h0.7M1276 272h0.4M917 201h0.5M1042 165h0.9M1357 212h0.5M1360 205h0.3M1125 142h0.6M1138 139h0.7M1362 251h0.7M934 205h0.8M1023 133h0.5M1363 159h0.7M1339 213h0.5M985 197h0.6M1379 181h0.6M934 188h0.7M1366 256h0.4M977 216h0.6M871 235h0.6M1371 158h0.8M886 176h0.8M1030 288h0.9M1313 287h0.7M1326 128h0.3M1247 135h0.8M1260 154h0.4M1028 229h0.7M975 106h0.5M1150 132h0.6M940 212h0.3M1113 262h0.5M981 201h0.5M1052 232h0.8M867 287h0.8M977 147h0.8M1321 68h0.6M1146 204h0.5M1317 231h0.4M917 207h0.7M1170 175h0.8M1118 187h0.4M1116 224h0.6M1135 243h0.3M1162 190h0.7M1111 268h0.4M1278 245h0.4M1134 174h0.8M1163 298h0.8M964 190h0.6M1383 161h0.7M1331 152h0.4M1139 196h0.6M1095 233h0.4M1364 267h0.4M954 156h0.3M1383 133h0.8M937 195h0.5M1186 137h0.6M1286 259h0.7M1164 238h0.5M1123 163h0.6M1338 250h0.7M893 236h0.7M919 214h0.8M1241 165h0.6M1194 266h0.8M1018 197h0.6M1216 172h0.9M1245 161h0.5M1265 186h0.8M1311 123h0.5M1368 245h0.9M1219 97h0.6M1113 228h0.6M1256 306h0.8M894 230h0.5M1013 230h0.4M1090 220h0.4M1072 174h0.4M1315 213h0.9M1098 173h0.8M1171 186h0.6M985 181h0.7M1160 296h0.3M1249 195h0.4M1301 189h0.5M913 213h0.7M1305 257h0.8M921 209h0.4M1075 121h0.6M1293 277h0.6M1185 316h0.6M1358 213h0.4M959 185h0.6M905 222h0.6M1317 200h0.7M1051 253h0.9M945 183h0.6M1246 179h0.5M1141 176h0.4M1238 144h0.6M1358 193h0.5M937 176h0.9M987 255h0.3M1075 193h0.6M937 217h0.8M1203 211h0.9M1273 199h0.5M1076 150h0.5M1212 251h0.8M958 246h0.4M947 240h0.8M1236 216h0.3M1046 204h0.5M1287 60h0.6M1367 177h0.6M921 212h0.7M1122 255h0.8M1348 210h0.6M1083 244h0.4M1285 203h0.6M990 150h0.4M1271 194h0.6M1086 214h0.4M1334 182h0.6M1051 133h0.7M1226 210h0.6M902 234h0.6M909 199h0.4M1081 205h0.8M1137 212h0.6M1382 193h0.8M1036 252h0.8M1291 170h0.4M1247 207h0.5M991 163h0.7M1175 211h0.7M990 201h0.6M1262 236h0.7M992 179h0.9M1140 217h0.7M1255 132h0.4M1216 135h0.8M1276 124h0.6M1166 192h0.7M1153 65h0.5M937 146h0.4M1053 181h0.6M1070 184h0.5M1361 138h0.6M1057 238h0.4M909 224h0.6M1073 257h0.9M1076 178h0.5M1321 138h0.3M1053 221h0.6M1190 115h0.9M954 159h0.5M899 214h0.9M1228 190h0.5M969 217h0.6M989 205h0.5M1125 136h0.5M982 180h0.7M1128 196h0.6M901 227h0.3M1119 173h0.3M955 198h0.6M955 225h0.9M977 197h0.6M944 189h0.7M1038 178h0.6M1334 193h0.7M1202 173h0.7M1119 200h0.8M918 205h0.3M1309 182h0.7M945 196h0.3M1394 139h0.5M965 222h0.7M1125 283h0.8M1229 238h0.8M1231 200h0.7M1336 176h0.5M1281 195h0.3M964 179h0.7M1243 182h0.3M1001 160h0.3M1327 183h0.4M1319 205h0.7M1180 131h0.5M1256 73h0.7M1040 217h0.4M1062 278h0.6M1346 142h0.5M1089 197h0.6M1323 264h0.6M1275 146h0.9M897 166h0.7M1049 234h0.3M928 211h0.6M1375 197h0.4M887 229h0.7M948 186h0.3M940 205h0.7M1237 252h0.3M1354 143h0.9M1242 286h0.6M1370 183h0.7M1282 245h0.6M1096 224h0.6M1387 132h0.7M1220 254h0.8M1033 202h0.4M1367 250h0.4M1123 208h0.7M1068 266h0.6M980 225h0.9M1070 175h0.5M1301 277h0.3M1244 167h0.8"/><path stroke-width="2" stroke-opacity="0.75" d="M1266 191h2.2M1161 221h1.3M1087 225h1.5M1340 205h2.2M1142 187h1.6M936 169h2.1M1354 241h1.7M1376 175h0.9M978 109h1.5M980 171h2.2M1208 160h1.9M1214 204h1.6M1040 81h1.4M942 142h2.0M1164 233h1.3M936 72h1.7M1031 226h2.2M1247 170h1.9M985 271h1.0M1372 180h1.3M922 212h2.0M1288 182h1.8M1057 246h1.1M1336 178h1.1M1310 230h1.6M1030 132h1.2M1031 240h1.5M896 188h1.7M1023 234h1.0M1179 267h1.5M993 221h1.4M1015 335h1.9M940 182h1.1M904 219h0.9M1028 258h1.0M1309 135h1.6M1063 204h1.7M1122 222h0.9M1217 235h2.2M928 173h1.5M1132 257h1.6M984 235h0.9M1076 234h2.0M936 173h1.0M1245 187h2.0M1170 223h1.6M1256 175h1.4M872 246h1.4M1335 231h2.2M1053 223h2.1M1093 141h1.0M1268 111h0.9M1052 179h0.8M1162 146h1.2M1264 221h1.2M1259 189h2.1M952 233h1.4M1160 241h1.9M1232 171h0.9M946 230h0.9M1001 245h1.6M1102 100h2.2M1280 321h2.2M1103 258h1.5M980 242h1.5M1100 226h2.2M1217 214h1.1M1039 211h2.0M892 197h1.4M1323 104h1.5M1154 178h1.5M908 183h1.4M1262 286h2.2M1086 272h0.8M1307 222h1.0M1021 223h1.2M1288 167h0.8M1368 105h1.6M1300 214h2.2M1014 264h0.9M950 215h1.6M984 265h2.1M909 100h1.8M1170 199h1.9M1323 247h1.4M1133 248h2.0M904 255h2.2M1066 178h1.8M1342 168h2.2M914 172h1.9M1174 177h1.9M1200 206h1.4M1107 191h1.9M1036 205h1.8M1268 151h2.1M1300 176h2.2M1274 241h1.5M1007 245h2.0M907 204h2.0M890 235h1.3M901 166h0.8M1203 165h1.6M1357 223h1.0M1369 234h2.1M1000 140h0.8M913 205h2.1M1117 162h0.9M1255 149h1.4M929 292h0.8M864 266h2.0M1162 161h0.8M1243 244h0.9M1221 133h0.9M1301 220h1.2M1150 156h2.1M1247 166h2.1M994 92h1.8M1057 225h1.7M1151 194h2.1M972 252h1.7M938 225h1.8M948 202h0.9M1260 215h1.3M1211 205h0.9M1102 220h0.9M994 209h1.7M1331 206h1.0M972 212h2.2M1132 217h2.2M948 222h1.6M1323 206h1.4M944 81h1.0M1225 207h1.8M908 234h1.5M990 227h2.2M892 219h1.4M908 243h1.8M1102 185h0.8M1292 261h1.0M959 207h1.8M1012 195h1.0M944 218h0.9M1197 201h1.8M922 164h1.1M1177 222h1.8M1056 177h2.0M1293 285h2.1M1017 179h0.9M982 245h1.7M1205 216h1.3M911 166h1.4M1045 157h0.9M1193 120h2.1M1214 197h1.3M1081 265h0.9M1143 166h2.0M1137 37h1.0M1244 145h1.3M1157 243h1.7M1356 139h1.2M1187 148h1.4M900 166h2.1M1056 237h2.1M1330 226h2.1M979 160h2.2M1237 130h1.4M1254 287h1.8M1164 206h2.2M1371 150h1.2M936 298h1.2M1178 151h1.4M1200 233h2.1M1098 243h2.2M1315 286h1.5M1283 202h2.0M1154 214h1.5M1009 220h1.9M999 211h1.1M1182 124h2.0M932 189h1.2M1176 163h1.6M1087 221h2.2M1245 72h1.8M924 221h1.0M1123 172h0.9M1180 165h1.8M998 285h0.8M1250 155h1.8M1125 186h1.5M1176 195h1.4M1200 255h1.2M1056 210h1.9M934 221h1.3M1167 246h0.8M1177 268h1.2M990 215h1.3M920 223h1.4M1146 156h2.0M992 167h1.6M1087 173h1.4M1014 122h2.0M1216 209h1.0M967 194h1.0M1193 172h1.2M1218 210h1.9M1183 128h1.9M1271 303h2.0M1226 291h1.7M983 236h1.5M1124 240h2.0M914 253h1.5M990 271h1.7M1233 142h1.8M1347 245h1.0M980 242h1.0M967 218h1.4M977 208h1.1M1217 240h1.8M1007 195h1.1M1085 202h1.2M929 138h1.9M1334 170h1.6M1061 214h1.7M890 298h1.0M1074 213h0.9M1132 243h1.1M1367 193h2.0M1312 226h1.9M999 199h0.8M1135 172h1.2M1119 240h1.8M1178 245h1.8M919 233h1.8M1047 186h0.8M929 197h1.5M934 182h1.7M1101 206h1.0M1077 238h2.0M1269 206h1.3M1300 197h1.1M1191 200h1.3M1188 217h1.6M1274 207h2.0M996 211h1.7M930 242h1.0M928 169h1.4M1033 238h1.3M1362 116h1.6M1312 202h1.9M1318 144h2.0M1161 247h1.4M966 196h1.6M1096 185h2.2M888 254h1.2M1216 163h1.0M1320 199h1.3M1260 224h1.9M1350 203h1.1M1124 224h2.2M1254 242h2.2M1279 174h1.9M881 285h2.0M974 245h0.9M888 251h1.5M1016 185h1.7M986 193h1.9M1225 129h0.9M1091 206h1.6M883 216h1.4M1198 161h1.4M1171 182h2.0M1162 294h1.7M1194 225h1.0M1092 202h1.8M1044 214h0.8M1003 224h1.1M1185 243h1.0M1314 220h1.5M1232 172h1.0M1089 166h1.4M1323 153h1.3M1271 197h1.9M946 249h1.5M1046 137h2.1M1221 210h2.0M1088 267h1.4M1033 247h2.0M1378 76h2.2M1305 188h2.0M960 281h1.0M965 204h0.8M1107 150h2.2M935 175h2.1M1268 164h1.8M1180 222h2.1M1256 264h1.4M1197 193h0.8M877 235h1.1M1369 215h2.2M1230 208h1.9M980 258h1.2M1141 115h1.9M1124 230h1.8M1188 229h0.9M1200 274h0.9M1273 228h1.7M1171 222h1.7M1135 243h1.6M1204 248h0.8M1158 246h1.6M1267 320h1.6M907 221h1.7M1155 252h0.9M1325 238h2.2M1315 246h1.9M914 160h2.2M919 265h0.8M1282 188h2.2M1188 126h1.4M1181 146h1.0M1195 201h1.1M1250 259h1.1M909 139h2.1M1356 146h2.0M1354 220h1.0M1048 191h0.8M1167 134h0.9M1014 194h2.1M1035 197h1.5M1259 201h0.9M1307 253h1.6M1331 157h1.5M1334 268h0.9M1060 197h2.2M1188 287h1.5M1356 253h0.8M1105 137h1.5M1347 190h1.2M994 237h1.1M1272 260h1.7M1319 194h1.4M1012 227h1.2M908 249h2.0M927 234h1.4M1269 151h2.2M1126 233h1.4M1250 174h1.4M988 236h0.9M1082 138h1.8M1337 213h1.5M962 207h1.2M994 287h0.9M1293 227h2.1M1257 160h1.1M1373 170h0.9M1002 227h1.4M1221 194h0.9M1312 136h1.8M1055 175h1.0M911 198h1.4M1369 239h0.8M1017 204h2.1M1239 208h1.6M930 292h1.3M959 237h1.1M1355 241h0.8M1016 223h0.9M1141 185h1.4M1243 243h1.0M1127 365h1.6M1231 128h2.1M1224 244h2.2M1131 251h0.9M1193 155h1.6M1122 247h1.8M1360 187h2.0M1373 142h1.6M1171 320h1.5M1089 208h1.5M1369 143h1.0M1272 126h1.3M959 158h1.5M878 240h1.1M1202 229h2.0M1258 162h1.5M1061 264h1.8M1065 293h1.6M928 167h1.9M1299 176h1.5M965 306h1.4M1194 367h1.3M890 165h0.8M1375 212h1.9M1217 200h0.9M1063 132h2.1M1331 290h1.3M1238 214h1.5M1085 99h2.2M1280 164h2.2M1011 238h2.0M1255 151h1.3M1185 172h2.0M1013 248h1.3M1178 175h2.0M1056 182h1.9M1274 173h1.8M1322 224h1.1M1253 261h1.9M1000 223h1.6M1248 212h2.1M937 244h1.4M936 183h2.2M1278 185h2.2M956 261h2.0M1278 220h2.0M902 194h1.3M1082 294h0.9M1295 192h1.8M1065 188h1.0M1106 204h0.8M902 201h1.3M1180 187h1.4M1083 195h1.5M911 182h1.6M1347 145h1.7M1018 184h0.8M1099 213h2.1M1009 228h1.2M992 193h1.5M909 217h1.7M1218 212h1.2M1182 234h1.2M1257 242h2.2M1348 139h1.5M892 242h2.0M1305 174h0.8M1168 195h1.7M1205 208h1.9M1244 152h1.5M1229 111h1.2M914 180h1.4M1000 270h1.1M1224 190h1.9M1035 211h2.1M1095 179h1.8M1170 185h1.2M880 224h1.5M1143 319h1.6M1269 195h1.9M905 156h1.1M1055 235h1.1M1337 221h1.3M959 135h1.3"/><path stroke-width="2.8" stroke-opacity="0.8" d="M1124 124h2.0M1080 178h3.4M1069 142h2.6M1025 235h2.7M944 181h1.5M911 195h2.1M1084 298h1.9M1238 167h2.1M1177 275h3.0M1298 213h1.9M1097 202h3.2M1022 204h2.8M1243 256h2.2M1341 224h3.3M1339 229h1.4M1087 195h2.9M970 172h3.3M1194 201h1.9M988 264h2.0M969 213h3.6M928 183h1.3M1296 222h2.3M1288 311h1.4M897 182h2.4M1360 208h1.4M970 171h3.3M929 251h3.6M939 186h1.9M1068 126h1.3M970 202h2.2M1202 180h3.4M964 187h1.8M1047 180h2.1M1259 221h2.3M1256 181h3.2M955 196h3.6M1205 171h2.4M913 394h1.9M1290 300h3.7M1234 150h3.5M1057 215h2.9M1066 209h3.2M1329 227h2.1M996 202h2.2M1152 163h2.1M1100 243h1.4M1099 76h1.6M949 229h2.6M1246 124h1.6M906 207h1.9M982 190h2.8M1073 169h2.0M1080 216h2.1M1130 228h3.1M1085 182h3.2M1019 192h2.6M1337 222h2.9M1036 162h1.6M1335 221h3.6M1152 235h1.6M1231 260h1.5M1037 146h2.5M1053 195h1.4M1175 262h2.1M1115 219h2.8M995 128h3.2M1248 225h3.6M1128 116h3.0M1073 210h3.0M1358 174h3.3M1047 212h3.2M877 218h2.3M1236 178h3.3M1366 240h1.7M1339 146h1.3M1379 162h2.9M1192 95h2.1M945 217h1.7M1149 181h1.4M1002 245h2.9M1220 127h2.2M926 140h2.7M1259 271h2.5M1307 301h3.3M1186 282h2.8M1015 206h3.7M1276 224h1.4M1106 202h2.4M1366 156h3.0M895 267h2.8M1215 207h2.4M996 212h3.3M1339 209h1.5M1372 190h3.4M1284 103h1.3M929 147h2.7M1038 225h2.6M882 215h3.7M971 183h3.1M970 191h2.4M1293 220h3.3M1341 168h1.7M1194 232h1.4M1348 178h1.4M1195 252h2.6M929 299h2.2M1074 244h3.4M1385 115h3.3M1196 288h3.0M1332 195h2.1M1236 125h3.3M1182 285h3.7M980 188h2.8M1228 197h3.3M1281 207h2.7M1275 162h2.0M1142 193h1.5M1219 182h3.2M1174 269h2.3M965 185h1.7M1355 209h3.3M1323 210h3.7M1204 375h1.9M1295 182h3.4M1303 278h2.9M1275 219h1.7M1109 210h3.6M1254 144h3.0M922 198h2.9M1127 161h1.9M946 228h3.1M931 167h3.4M1343 157h3.3M1321 181h1.9M1235 247h1.8M1374 108h3.1M1116 203h1.4M1381 175h1.6M984 148h1.6M1073 147h2.9M1133 205h2.9M1196 317h1.3M1340 307h1.4M1381 186h2.6M890 183h1.9M1072 206h3.3M1036 247h3.0M1140 182h1.5M1305 335h2.7M1245 211h2.9M1049 248h3.7M1235 209h3.4M982 365h2.1M1317 157h2.2M1246 196h1.7M1222 213h1.8M1298 263h2.4M1270 316h2.2M895 187h3.4M1066 168h2.3M1191 209h3.2M1285 143h1.8M1039 158h1.5M1010 164h1.4M1232 222h2.9M1051 188h2.0M1108 173h1.4M1310 159h1.5M1239 152h1.9M1096 182h2.3M1342 296h1.9M1300 117h2.9M1294 162h3.5M1088 212h3.7M1113 256h2.7M1391 141h3.7M967 200h3.6M1039 224h2.7M1282 242h1.8M847 338h1.5M1215 260h2.0M918 243h2.4M1028 192h1.8M1261 157h2.0M1043 241h2.4M1230 131h2.0M900 252h1.8M1290 194h2.7M1108 272h1.8M1116 200h2.8M1087 262h1.8M931 181h2.7M1280 146h2.7M1005 169h2.1M942 183h1.5M1128 307h3.1M901 275h2.3M1360 236h3.1M880 320h3.1M1326 207h3.2M948 186h2.3M1109 238h3.5M1015 219h3.5M1368 218h2.1M1310 213h2.7M1044 186h3.2M1129 232h2.3M1372 163h2.6M924 226h2.9M1032 140h3.0M1109 356h2.5M1141 212h2.7M1180 197h2.4M1175 260h3.3M892 278h3.7M1173 86h2.9M1171 222h1.6M1006 204h3.5M962 194h1.7M1332 280h3.4M1194 214h2.3M1134 186h1.5M1067 338h3.0M958 166h2.9M1284 205h1.6M1241 223h2.8M1132 247h1.8M1306 177h2.6M1211 320h1.8M998 166h3.1M1374 209h1.9M970 262h3.0M996 263h2.5M1176 180h2.6M909 233h1.3M1341 307h2.4M1191 170h2.5M1034 213h2.4M894 186h2.1M1095 223h3.0M925 190h2.5M905 162h2.8M1043 198h2.4M1264 222h2.8M1126 178h1.6M963 180h2.8M1232 284h2.6M998 246h2.1M1082 166h3.5M1049 174h2.9M1250 313h2.6M1058 132h2.0M1055 216h2.6M1154 201h2.2M1151 182h2.0M1116 167h2.9M1194 226h3.4M882 257h2.5M1045 237h2.2M1130 250h1.4M1206 269h2.7M1061 148h2.4M1104 86h2.6M1233 167h2.6M1308 258h2.4M975 270h2.2M1146 236h2.8M1332 216h3.3M956 232h3.7M979 205h1.3M1075 105h1.7M1257 233h1.5M1309 179h2.3M1265 164h2.1M1126 166h1.4M1138 208h2.0M999 248h3.0M980 316h3.4M1100 219h3.2M972 190h1.5M1198 118h2.9M1039 288h3.7M1003 214h1.6M1317 217h3.4M995 179h1.4M919 233h1.8M1205 290h2.5M1167 237h2.6M1219 96h2.0M1095 274h1.7M1261 187h1.6M1367 200h3.1M961 222h2.0M1359 235h1.5M1266 239h2.1M901 197h1.7M1028 160h3.0M1093 151h3.1M953 290h3.1M1159 149h1.4M988 120h1.5M1349 212h2.9M1269 295h2.4M1063 134h3.2M1110 270h1.5M1199 111h2.1M1345 248h2.7M1256 131h3.4M1069 69h3.7M1018 186h2.8M1344 225h1.3M1102 201h3.5M1263 196h3.2M1041 198h3.7M1025 245h2.3M1319 103h2.5M1115 210h3.1M1247 170h3.4M1326 240h2.2M1179 201h2.2M1281 179h3.4M1042 201h3.1M1075 167h2.6M1202 260h1.6M1316 218h2.8M1038 167h3.7M1118 281h3.1M1165 130h3.3M894 170h2.6M925 183h2.5M1117 118h2.2M1047 238h2.3M1227 198h3.2M971 31h2.3M1310 275h2.9M1143 154h2.7M1316 366h2.6M1079 176h3.1M1218 162h2.4M1150 222h2.8M1043 178h2.5M1067 186h3.0M1382 187h2.4M1335 306h2.2M1112 189h2.3M1100 110h1.9M1374 104h2.3M1014 241h1.9M1004 175h2.5M1308 102h2.5M1112 160h2.4M905 172h1.5M1391 156h2.2M1350 185h2.7M1263 307h2.8M1180 212h2.6M1060 179h3.3M1243 191h3.0M1100 132h1.6M1125 199h1.9M1209 174h2.3M1115 283h2.3M1050 208h3.7M1266 152h2.5M1203 176h3.1M1199 323h1.8M980 162h2.3"/><path stroke-width="4" stroke-opacity="0.7" d="M1268 224h2.0M954 190h3.3M1306 187h2.8M1313 267h3.7M1014 158h5.4M943 196h5.1M1255 197h3.7M1233 197h4.6M1097 198h4.6M1287 217h5.8M1214 196h2.7M1044 190h5.6M1155 204h4.9M987 193h4.5M1328 154h5.5M1027 188h4.2M1218 232h2.1M1112 226h4.4M1030 114h2.1M1167 171h5.1M1240 218h3.4M1313 225h2.8M1348 181h2.2M1116 209h2.9M913 184h3.5M958 208h4.0M1161 160h4.9M1077 185h2.0M1066 226h4.8M1270 150h5.0M1071 276h2.6M1169 212h4.2M1262 344h4.1M1053 169h3.9M899 177h2.3M1235 205h2.2M1284 209h3.6M1037 233h5.2M927 192h4.7M1321 80h3.2M1356 227h5.1M1200 135h4.0M1330 124h4.7M1358 231h2.8M999 170h5.2M988 153h5.0M998 17h5.2M1222 259h3.7M1301 180h4.1M1120 212h3.5M988 206h4.6M949 250h5.7M1233 261h5.3M1363 240h5.0M894 178h5.7M1234 247h3.4M959 165h3.5M1050 244h4.2M914 201h5.8M1324 141h4.1M1187 218h3.8M1202 233h2.8M1203 206h5.1M927 184h5.5M1056 243h5.7M1026 236h4.9M1291 160h6.0M1115 267h4.2M1256 295h4.2M1102 326h5.8M1011 222h3.8M953 273h5.2M1053 209h4.6M1070 213h5.0M896 314h2.1M974 192h3.9M1268 227h2.9M1167 234h5.9M953 182h3.5M1193 209h4.7M903 201h3.3M1052 244h6.0M1112 175h4.4M1003 192h4.8M1084 248h5.7M1212 217h5.3M889 164h3.3M976 215h2.9M1137 188h2.7M1015 229h3.5M1050 196h3.4M1060 230h4.7M1055 229h5.3M1208 195h5.9M993 312h3.8M1290 150h5.2M1129 258h3.9M1026 165h5.6M1059 233h3.1M1187 197h4.6M895 225h3.6M1252 201h5.3M994 237h5.5M1182 135h5.2M1172 162h3.5M949 173h6.0M929 235h5.9M1361 135h4.3M1217 270h2.2M1028 261h5.1M1077 207h2.3M1286 106h3.3M951 183h3.0M1280 238h2.6M953 219h3.9M1147 159h5.6M1339 222h2.6M1333 239h2.1M1243 213h2.9M1083 131h4.5M1150 274h2.0M1025 237h3.1M1057 178h2.8M1167 259h2.4M1184 198h3.8M1178 200h3.1M897 211h5.0M950 209h3.7M1184 117h2.9M1079 243h4.8M1310 126h2.5M1153 136h4.6M1067 170h2.4M1175 204h5.8M1293 284h4.9M920 169h5.7M979 163h3.3M1031 207h4.1M1150 231h3.9M944 191h5.3M984 297h3.1M1180 116h5.5M1196 246h2.3M1226 214h5.2M1104 225h5.7M1195 204h3.6M1253 202h4.7M1299 65h2.3M1260 184h2.2M1089 236h4.0M1068 178h5.2M1241 237h3.8M981 204h2.5M988 175h3.8M1029 167h2.9M1009 225h2.5M1272 225h3.4M1032 210h5.7M966 226h2.0M1185 203h2.9M1134 204h5.0M1219 259h4.0M886 253h4.6M1283 313h4.6M1151 242h5.3M1207 219h2.9M1200 239h3.5M1224 200h5.8M1135 188h4.3M1207 200h4.6M1173 269h3.2M1027 128h5.8M966 202h3.8M1332 183h4.9M1317 285h3.2M1221 265h2.3M1308 90h4.3M1039 191h4.5M1015 296h4.8M1135 260h3.1M1004 257h2.5M1107 251h4.5M1184 138h4.1M1043 172h4.9M1064 205h2.6M1180 287h3.4M1138 208h4.6M1110 242h2.2M1157 170h4.8M920 219h3.6M966 203h2.4M1177 227h3.0M1327 217h4.3M1072 100h3.4M1002 96h4.5M1000 164h5.7M929 206h5.9M911 205h5.9M1245 240h4.3M901 330h4.6M1020 163h4.5M1118 307h2.3M1056 224h5.9M1081 240h5.5M940 237h4.8M1199 165h3.5M1092 195h5.0M1085 252h2.3M1323 216h4.9M1334 167h3.6M1194 175h5.6M898 199h2.7M1012 194h4.9M1071 264h3.3M1330 184h5.4M1005 209h3.2M994 289h2.3M1128 337h3.5M980 188h6.0M1117 199h2.4M992 241h2.2M1310 88h3.3M1056 253h5.9M1041 213h4.7M1064 191h2.3M1266 281h2.0M966 193h2.4M1063 251h4.8M1224 278h2.7M1324 224h2.6M1174 192h5.3M1253 191h6.0M939 164h3.0M1202 251h4.2"/></g><g>
<path d="M889 236.7 C905 235 925 234.5 945 237 C965 240 985 246 1000 253.5 C985 252 965 251 950.9 251.2 C935 252.5 915 257 889 265.5 Z" fill="#98826e"/>
<path d="M889 240 C920 238 950 240 980 248 C950 247 920 250 889 256Z" fill="#b09a82" opacity=".55"/>
<path d="M889 277 C905 281 925 286 945 290 C955 292 962 293.5 970 294.5 L978 297.5 C960 300 940 301 924.5 300.6 C910 299 900 296.5 889 294.5 Z" fill="#4e5452"/>
<path d="M892 281 C915 289 940 294 965 296 C940 297.5 915 296 892 290Z" fill="#a8b0aa" opacity=".75"/>
<path d="M1003.6 240.7 L1045 238 C1040 250 1036 260 1030 270.3 C1022 280 1014 286 1003.6 291.4 C995 295 986 296.5 977.2 297.3 L969.3 294 C978 289 985 284 987.8 278.2 C994 268 998 260 999.6 254.5 Z" fill="#6d655c"/>
<path d="M1010 243 L1040 240.5 C1030 265 1015 282 990 292 C1000 275 1006 260 1010 243Z" fill="#8a7e70" opacity=".6"/>
</g>
</svg><svg width="0" height="0" style="position:absolute">
 <defs>
  <symbol id="doc" viewBox="0 0 32 42"><path d="M0.5 0.5 H23.5 L31.5 8.5 V41.5 H0.5Z" fill="#fff" stroke="#9a8f8a" stroke-width="1"/><path d="M23.5 0.5 V8.5 H31.5Z" fill="#e4e4e4" stroke="#9a9a9a" stroke-width="1"/>
   <path d="M3 4.5 H22 M3 7.5 H22 M3 10.5 H29 M3 13.5 H29 M3 16.5 H29 M3 19.5 H29 M3 22.5 H29 M3 25.5 H29 M3 28.5 H29 M3 31.5 H29 M3 34.5 H29 M3 37.5 H29" stroke="#a8a8a8" stroke-width="1.1"/></symbol>
  <symbol id="shield" viewBox="0 0 22 23"><path d="M11 0.6 Q16 2.5 21.2 2.2 V10 Q21 18 11 22.4 Q1 18 0.8 10 V2.2 Q6 2.5 11 0.6Z" fill="#fff" stroke="#888" stroke-width=".8"/><path d="M11 2 V10.8 H2 V3.2 Q7 3.3 11 2Z" fill="#1a70c8"/><path d="M12.3 2 Q15.5 3.3 20 3.2 V10.8 H12.3Z" fill="#f8b830"/><path d="M2 12.2 H11 V20.5 Q3.5 17 2 12.2Z" fill="#f8b830"/><path d="M12.3 12.2 H20 Q18.5 17 12.3 20.5Z" fill="#1a70c8"/></symbol>
  <symbol id="arrow" viewBox="0 0 13 13"><rect x="0.5" y="0.5" width="12" height="12" fill="#fff" stroke="#c8b8b0" stroke-width="1"/><path d="M3.5 10.5 Q3 5 8 4.5" fill="none" stroke="#3a5aa0" stroke-width="2.2"/><path d="M6.5 2 L10.5 4 L7 7.5Z" fill="#3a5aa0"/></symbol>
  <symbol id="folder" viewBox="0 0 32 42"><path d="M0.5 0.5 H26 V36 H0.5Z" fill="#f3c95c"/><path d="M9 3 L26 5 V41 L9 37Z" fill="#f2f2f2" stroke="#ddd" stroke-width=".5"/><path d="M19 5 L31.5 6 V40 L19 37Z" fill="#f6f6f6" stroke="#ddd" stroke-width=".5"/><path d="M0.5 0.5 L10 3.5 V42 L0.5 36Z" fill="#f7d783"/></symbol>
 </defs>
</svg>
<!-- left column 1 -->
<svg class="ic" style="left:18px;top:9px" width="40" height="45" viewBox="0 0 40 45">
 <path d="M0 5.7 L22 3 L38 8.1 L32.7 40.2 L21 43 L4.4 37.4Z" fill="#dfe7ea" opacity=".85"/>
 <path d="M6 6 Q9 -1 14 2 Q18 -1 22 2 Q27 0 30 5 L34 9 L22 12 L4 8Z" fill="#f6f8f8"/>
 <path d="M10 3 Q14 6 18 3 M21 4 Q25 7 28 5" fill="none" stroke="#cfd6d8" stroke-width="1"/>
 <path d="M22 12 L38 8.1 L32.7 40.2 L21 43Z" fill="#e2e8ea"/>
 <path d="M0 5.7 L22 12 L21 43 L4.4 37.4Z" fill="#f1f4f5"/>
 <path d="M0 5.7 L22 12 L38 8.1" fill="none" stroke="#c8d2d6" stroke-width=".9"/>
 <path d="M24 14 L35 11 L31 38 L23 40Z" fill="#cdd8dc" opacity=".5"/>
 <path d="M8.5 18.5 Q11 16 13.5 17.5 L15.5 20.5 M16.5 26.5 Q15.5 30 12 30 L9 29.5 M7 27.5 Q5 24 6.5 21.5" fill="none" stroke="#1b7be3" stroke-width="2.6" stroke-linecap="round"/>
 <path d="M14 22 L17 20 L16.5 23.5Z M10 31.5 L7.5 29 L10.5 28Z M5 20 L8 20.5 L6 23Z" fill="#1b7be3"/>
</svg>
<div class="lbl" style="left:-1px;top:58px">Koš</div>
<svg class="ic" style="left:21px;top:111px" width="32" height="42"><use href="#folder"/></svg>
<div class="lbl" style="left:-1px;top:157px">Poradna</div>
<svg class="ic" style="left:21px;top:210px" width="32" height="42"><use href="#folder"/></svg>
<div class="lbl" style="left:-3px;top:256px;width:80px">Project Icarus<br>3.2 Setup</div>
<svg class="ic" style="left:21px;top:406px" width="32" height="42"><use href="#doc"/></svg>
<div class="lbl" style="left:-1px;top:454px">moje</div>
<svg class="ic" style="left:21px;top:505px" width="32" height="42"><use href="#doc"/></svg>
<div class="lbl" style="left:-1px;top:553px">AdwClean...</div>
<svg class="ic" style="left:21px;top:604px" width="32" height="42"><use href="#doc"/></svg>
<div class="lbl" style="left:-1px;top:652px">JRT</div>
<!-- left column 2 -->
<svg class="ic" style="left:96px;top:10px" width="32" height="42"><use href="#doc"/></svg>
<div class="lbl" style="left:74px;top:58px">MabM</div>
<svg class="ic" style="left:96px;top:109px" width="32" height="42"><use href="#doc"/></svg>
<div class="lbl" style="left:74px;top:157px;white-space:nowrap;text-align:left;padding-left:5px">rk_1C98.tmp</div>
<svg class="ic" style="left:96px;top:208px" width="32" height="42"><use href="#doc"/></svg>
<div class="lbl" style="left:74px;top:256px;white-space:nowrap;text-align:left;padding-left:5px">rk_B9E7.tmp<br><span style="padding-left:23px">(2)</span></div>
<svg class="ic" style="left:96px;top:307px" width="32" height="42"><use href="#doc"/></svg>
<div class="lbl" style="left:74px;top:355px;white-space:nowrap;text-align:left;padding-left:4px">zoek-results</div>
<svg class="ic" style="left:96px;top:406px" width="32" height="42"><use href="#doc"/></svg>
<div class="lbl" style="left:74px;top:454px;white-space:nowrap;text-align:left;padding-left:5px">zoek-results</div>
<svg class="ic" style="left:96px;top:505px" width="32" height="42"><use href="#doc"/></svg>
<div class="lbl" style="left:74px;top:553px">jak na to</div>
<svg class="ic" style="left:96px;top:604px" width="32" height="42"><use href="#doc"/></svg>
<div class="lbl" style="left:74px;top:652px">zoek</div>
<!-- right A -->
<svg class="ic" style="left:1140px;top:7px" width="46" height="47" viewBox="0 0 46 47">
 <path d="M1 19 H10 L12 16 H18 V45 H1Z" fill="#f4f4f4" stroke="#222" stroke-width="1"/>
 <path d="M10 20 L16 15 V45 H10Z" fill="#a8a8a8" stroke="#222" stroke-width=".8"/>
 <rect x="17" y="0.5" width="27" height="22" fill="#e4e4e4" stroke="#222" stroke-width="1"/>
 <rect x="20" y="3" width="19" height="16" fill="#1038b8"/><rect x="21" y="4" width="17" height="14" fill="#3ab0f0"/><path d="M21 17 L33 4 H37 L24 18Z" fill="#9ae0ff"/>
 <path d="M16 23 H45 V30 H37 V34 H16Z" fill="#d8d8d8" stroke="#222" stroke-width="1"/>
 <circle cx="24.5" cy="36" r="10" fill="#d0d0d0" stroke="#555" stroke-width=".8"/><path d="M24.5 26 A10 10 0 0 1 31 28.5 L24.5 36Z" fill="#e0e080"/><path d="M24.5 46 A10 10 0 0 1 18 43.5 L24.5 36Z" fill="#e8e890"/><path d="M17 30 L24.5 36 L15 36Z" fill="#60a8d8"/>
 <circle cx="24.5" cy="36" r="2.2" fill="#30b0c0" stroke="#111" stroke-width="1"/>
</svg>
<div class="lbl" style="left:1123px;top:58px">Zemana.An...</div>
<svg class="ic" style="left:1140px;top:105px" width="46" height="50" viewBox="0 0 46 50">
 <path d="M24 22 L27 15" stroke="#000" stroke-width="5"/><path d="M24 22 L27 15" stroke="#f4f4f4" stroke-width="2.6"/>
 <path d="M28 13 L34 5" stroke="#000" stroke-width="10" stroke-linecap="round"/><path d="M28 13 L34 5" stroke="#ff1010" stroke-width="6.6" stroke-linecap="round"/><path d="M31 6 L33 4" stroke="#ff9090" stroke-width="1.5" stroke-linecap="round"/>
 <ellipse cx="16.5" cy="35" rx="14.5" ry="11.5" transform="rotate(10 16.5 35)" fill="#e6e6e6" stroke="#000" stroke-width="2.6"/>
 <ellipse cx="17" cy="32.5" rx="12" ry="8" transform="rotate(10 17 32.5)" fill="#a6f0fa"/>
 <path d="M7 28 Q16 25 27 30" fill="none" stroke="#1a60a8" stroke-width="1.8"/>
 <path d="M9 31 Q12 29 16 30 L14 36 Q10 35 9 31Z" fill="#fff" opacity=".8"/>
 <use href="#shield" x="23" y="26" width="22" height="23"/>
</svg>
<div class="lbl" style="left:1123px;top:157px">zoek</div>
<!-- right B -->
<svg class="ic" style="left:1286px;top:107px" width="52" height="48" viewBox="0 0 52 48">
 <path d="M11.4 1.7 L25.7 15.7 L40.5 1.7 Q50 12 49 24 Q47 36 35.2 39.9 Q39 33 38.2 30.8 Q37.5 25 35.9 22.1 L25.7 31.5 L15.9 22.1 Q12 30 14.4 35.3 Q17 42 25.7 45.2 Q10 42 4 32 Q0 22 3 14 Q6 6 11.4 1.7Z" fill="#2b63b3" stroke="#1a2c66" stroke-width=".9"/>
 <use href="#arrow" x="2" y="34" width="13" height="13"/>
</svg>
<div class="lbl" style="left:1274px;top:157px">Malwareby...</div>
<svg class="ic" style="left:1288px;top:205px" width="48" height="48" viewBox="0 0 48 48">
 <circle cx="24" cy="23.8" r="23.3" fill="#4a5fae"/>
 <ellipse cx="26" cy="25" rx="10" ry="13.5" transform="rotate(-42 26 25)" fill="#fff"/>
 <path d="M4.8 13.4 L13.1 13.8 L16.2 17.2 M4.8 24 L10.9 28.5 L17.7 26.3 M17.7 32.3 L14.7 36.8 L17.7 45.2 M24.5 2.1 L20.7 11.9 M32.8 8.1 L35.8 14.2 M35.8 21.7 L40.3 24" fill="none" stroke="#fff" stroke-width="2.6" stroke-linejoin="round" stroke-linecap="round"/>
 <path d="M16 31 L36 17" stroke="#4a5fae" stroke-width="1"/>
 <circle cx="29" cy="14.2" r="8.3" fill="none" stroke="#3db53d" stroke-width="1.5"/>
 <path d="M29 4 V8 M29 20.5 V24.5 M18.8 14.2 H22.8 M35.2 14.2 H39.2" stroke="#3db53d" stroke-width="1.5" transform="rotate(18 29 14.2)"/>
 <use href="#shield" x="24" y="25" width="22" height="23"/>
</svg>
<div class="lbl" style="left:1274px;top:256px">adwcleaner...</div>
<svg class="ic" style="left:1288px;top:303px" width="48" height="48" viewBox="0 0 48 48">
 <path d="M1 12 L3.5 42 Q14 48 25 42 L27.5 12Z" fill="#8ea4f4"/>
 <path d="M6 18 V42 M11 19 V44 M16 19 V44 M21 18 V43" stroke="#c4d4ff" stroke-width="2"/>
 <path d="M8.5 18 V43 M13.5 19 V44 M18.5 19 V44" stroke="#6a80e0" stroke-width="1.2"/>
 <path d="M25 19 Q34 14 44 20 L44 28 Q34 24 25 28Z" fill="#b8ccfa"/>
 <ellipse cx="14.1" cy="11.6" rx="13.4" ry="8.2" fill="#b0c4fc"/>
 <ellipse cx="14.5" cy="12.3" rx="10.5" ry="4.7" fill="#5a70e0"/>
 <use href="#shield" x="25" y="25.5" width="21" height="22"/>
</svg>
<div class="lbl" style="left:1274px;top:355px">ATF-Cleaner</div>
<svg class="ic" style="left:1288px;top:402px" width="49" height="50" viewBox="0 0 49 50">
 <circle cx="24.1" cy="25.1" r="23.8" fill="#1f80d9"/>
 <circle cx="24.1" cy="25.1" r="21" fill="#2385dc" stroke="#1a66b8" stroke-width=".8"/>
 <path d="M34.3 16 H20.9 A4.35 4.35 0 0 0 20.9 24.7 H27.3 A4.35 4.35 0 0 1 27.3 33.4 H13.9" fill="none" stroke="#fff" stroke-width="5.3"/>
 <use href="#arrow" x="0" y="36" width="13" height="13"/>
</svg>
<div class="lbl" style="left:1274px;top:454px">Sophos Virus<br>Removal T...</div>
<svg class="ic" style="left:1288px;top:504px" width="48" height="48" viewBox="0 0 48 48">
 <circle cx="24.1" cy="22.6" r="23.6" fill="#3a87e6"/>
 <path d="M18 3.8 Q10 11 11.3 18.4 L19.4 20.4 L20.6 17.6 L15.5 16.3 Q15 10 18 3.8Z" fill="#fff"/>
 <path d="M31 3.8 Q39 11 37.7 18.4 L29.6 20.4 L28.4 17.6 L33.5 16.3 Q34 10 31 3.8Z" fill="#fff"/>
 <path d="M24.5 5 L25.6 17.5 H23.4Z" fill="#fff"/>
 <path d="M19.6 25 Q20 19.6 24.3 19.6 Q28.6 19.6 29 25Z" fill="#fff"/>
 <path d="M19.2 27.3 H28.3 V31.8 H19.2Z" fill="#fff"/>
 <rect x="23" y="32.5" width="3" height="8.5" fill="#fff"/>
 <use href="#shield" x="25" y="23" width="21" height="22"/>
</svg>
<div class="lbl" style="left:1274px;top:553px">JRT</div>
<svg class="ic" style="left:1288px;top:602px" width="48" height="48" viewBox="0 0 48 48">
 <defs><linearGradient id="rkg" x1="0" y1="0" x2="0" y2="1"><stop offset="0" stop-color="#121848"/><stop offset="0.6" stop-color="#15225a"/><stop offset="1" stop-color="#2a4c90"/></linearGradient></defs>
 <circle cx="24.1" cy="22.8" r="21.6" fill="url(#rkg)" stroke="#a8a8b0" stroke-width="1.6"/>
 <ellipse cx="24.1" cy="9.9" rx="11.3" ry="5.1" fill="#55577c"/>
 <path d="M24.5 9.7 L30.5 21.1 H18.4Z M17.7 21.8 L24.1 32 H12Z M31 21.8 L37 32 H25Z" fill="#8a90b0"/>
 <use href="#shield" x="25" y="24" width="21" height="22"/>
 <use href="#arrow" x="0" y="34" width="13" height="13"/>
</svg>
<div class="lbl" style="left:1274px;top:652px">RogueKiller</div>
<div id="zw">
 <div id="zt">
  <svg class="a" style="left:8px;top:5px" width="16" height="18" viewBox="0 0 16 18">
   <ellipse cx="7.5" cy="12.5" rx="6.3" ry="4.2" fill="#9fe6f5" stroke="#111" stroke-width="1.2" transform="rotate(12 7.5 12.5)"/>
   <ellipse cx="7" cy="11.6" rx="4.5" ry="2.4" fill="#c9f6ff" opacity=".8" transform="rotate(12 7 11.6)"/>
   <path d="M9.5 8.5 L11 6" stroke="#777" stroke-width="1.6"/>
   <path d="M10.5 6.5 L12.5 2 Q14 0.6 15.3 1.8 L14 6.3 Z" fill="#e40000" stroke="#600" stroke-width=".6"/>
  </svg>
  <div id="ztitle">Zoek v5.0.0.2 by Smeenk. Updated 03-May-2018(Online Version)</div>
  <svg class="a" style="left:732px;top:9px" width="11" height="11" viewBox="0 0 11 11"><path d="M0.5 0.5 L10.5 10.5 M10.5 0.5 L0.5 10.5" stroke="#7a7a7a" stroke-width="1"/></svg>
 </div>
 <div id="zbody">
  <div class="a" style="left:731px;top:0;width:19px;height:484px;background:#f8f8f8"></div>
  <svg class="a" style="left:734px;top:17px" width="11" height="9" viewBox="0 0 11 9"><path d="M1 8 L5.5 2.5 L10 8" fill="none" stroke="#bdbdbd" stroke-width="2.5"/></svg>
  <svg class="a" style="left:734px;top:458px" width="11" height="9" viewBox="0 0 11 9"><path d="M1 1 L5.5 6.5 L10 1" fill="none" stroke="#bdbdbd" stroke-width="2.5"/></svg>
  <div id="tb">
   <div class="a" style="left:639px;top:0;width:17px;height:419px;background:#f8f8f8"></div>
   <svg class="a" style="left:642px;top:16px" width="11" height="9" viewBox="0 0 11 9"><path d="M1 8 L5.5 2.5 L10 8" fill="none" stroke="#bdbdbd" stroke-width="2.5"/></svg>
   <svg class="a" style="left:642px;top:392px" width="11" height="9" viewBox="0 0 11 9"><path d="M1 1 L5.5 6.5 L10 1" fill="none" stroke="#bdbdbd" stroke-width="2.5"/></svg>
   <div id="tbtext">Zoek.exe v5.0.0.2 Updated 03-May-2018(Online Version)
Tool run by harmo on 11.06.2018 at  8:30:38,58.
Microsoft Windows 10 Home 10.0.16299  x64
Running in: Normal Mode Internet Access Detected
Launched: C:\Users\harmo\Desktop\zoek.exe [Scan all users] [Script inserted]

===== Runcheck  8:31:08,44 =====

--- Create Environment Variables  8:31:09,70
--- Create System Restore Point  8:32:50,63
--- Checking Input  8:32:55,38</div>
  </div>
  <div class="radio" style="left:17px;top:442px"></div>
  <div class="rl" style="left:33px;top:443px">Scan All Users</div>
  <div class="radio" style="left:114px;top:442px"></div>
  <div class="rl" style="left:130px;top:443px">Scan Current User</div>
  <div class="dot" style="left:9px;top:460px;width:92px;height:24px"></div>
  <div class="btn" style="left:11px;width:88px">Run Script</div>
  <div class="dot" style="left:101px;top:460px;width:191px;height:24px"></div>
  <div class="btn" style="left:103px;width:187px;font-size:13.3px">Paste from ClipBoard</div>
  <div class="dot" style="left:292px;top:460px;width:145px;height:24px"></div>
  <div class="btn" style="left:294px;width:141px">Clear Input Field</div>
  <div class="dot" style="left:437px;top:460px;width:121px;height:24px"></div>
  <div class="btn" style="left:439px;width:117px;font-size:13.2px">More Options</div>
  <div class="a" style="left:-2px;top:484px;width:752px;height:2px;background:#e2e2e2"></div>
 </div>
</div>
<div id="dlg">
 <div class="a" style="left:8px;top:8px;font-size:11.7px;color:#000;white-space:nowrap">cmd.exe - Chyba aplikace</div>
 <svg class="a" style="left:391px;top:9px" width="11" height="11" viewBox="0 0 11 11"><path d="M0.5 0.5 L10.5 10.5 M10.5 0.5 L0.5 10.5" stroke="#000" stroke-width="1.1"/></svg>
 <svg class="a" style="left:21px;top:53px" width="33" height="33" viewBox="0 0 33 33">
  <defs><radialGradient id="rg" cx="0.35" cy="0.3" r="0.8"><stop offset="0" stop-color="#e85050"/><stop offset="0.55" stop-color="#c01818"/><stop offset="1" stop-color="#a00808"/></radialGradient></defs>
  <circle cx="16.5" cy="16.5" r="15.8" fill="#fff" stroke="#8a8a8a" stroke-width="1"/>
  <circle cx="16.5" cy="16.5" r="14" fill="url(#rg)"/>
  <path d="M10.5 10.5 L22.5 22.5 M22.5 10.5 L10.5 22.5" stroke="#dcdcdc" stroke-width="4.2" stroke-linecap="square"/>
 </svg>
 <div class="a" style="left:62px;top:57px;font-size:11.35px;line-height:13px;color:#000;white-space:nowrap">Aplikaci (0xc0000142) se nepodařilo správně spustit. Kliknutím<br>na tlačítko OK aplikaci ukončete.</div>
 <div class="a" style="left:0;top:108px;width:411px;height:42px;background:#f0f0f0"></div>
 <div class="a" style="left:321px;top:118px;width:75px;height:23px;background:#f0f0f0;border:1px solid #5a5a5a;box-shadow:inset 1px 1px 0 #fff,inset -1px -1px 0 #7a7a7a,inset -2px -2px 0 #a0a0a0">
  <div class="a" style="left:3px;top:3px;width:67px;height:15px;border:1px dotted #000"></div>
  <div class="a" style="left:0;top:4px;width:73px;text-align:center;font-size:11.5px;line-height:13px;color:#000">OK</div>
 </div>
</div>
<div id="task">
 <!-- start -->
 <svg class="a" style="left:16px;top:12px" width="17" height="17" viewBox="0 0 17 17"><path d="M0 2.4 L7 1.4 V7.8 H0Z M8 1.25 L17 0 V7.8 H8Z M0 8.8 H7 V15.3 L0 14.4Z M8 8.8 H17 V16.8 L8 15.5Z" fill="#fff"/></svg>
 <!-- search -->
 <svg class="a" style="left:62px;top:10px" width="20" height="20" viewBox="0 0 20 20"><circle cx="12.2" cy="7.6" r="5.6" fill="none" stroke="#fff" stroke-width="1.3"/><path d="M8.2 11.6 L2 17.8" stroke="#fff" stroke-width="1.4"/></svg>
 <!-- task view -->
 <svg class="a" style="left:109px;top:12px" width="22" height="16" viewBox="0 0 22 16"><rect x="5" y="1" width="12" height="14" fill="none" stroke="#fff" stroke-width="1.3"/><path d="M3.5 3.5 H1 V12.5 H3.5 M18.5 3.5 H21 V12.5 H18.5" fill="none" stroke="#fff" stroke-width="1.3"/></svg>
 <!-- nvidia -->
 <svg class="a" style="left:161px;top:9px" width="20" height="20" viewBox="0 0 20 20"><rect x="0.5" y="0.5" width="19" height="18" fill="#121212" stroke="#8a8a8a" stroke-width="1"/><path d="M0.5 18.5 H19.5" stroke="#777" stroke-width="1.5"/><path d="M3 16 Q6 11 9 10 L9 12 Q7 13 5.5 16Z M7 16 Q9 9 17 7 L17 9 Q12 10 10 16Z M12 16 Q13 12 17 11 L17 13 Q15 13.5 14.5 16Z" fill="#9a9a9a"/></svg>
 <!-- rubik -->
 <svg class="a" style="left:209px;top:9px" width="22" height="22" viewBox="0 0 22 22">
  <path d="M11 1 L21 4 L11 8 L1 4Z" fill="#f0f0f0"/>
  <path d="M6 2.5 L11 1 L16 2.5 L11 4.5Z" fill="#f4e400"/><path d="M1 4 L6 2.5 L11 4.5 L6 6Z" fill="#1a8ae0"/><path d="M11 4.5 L16 2.5 L21 4 L16 6Z" fill="#f0f0f0"/><path d="M6 6 L11 4.5 L16 6 L11 8Z" fill="#e84040"/>
  <path d="M1 4 L11 8 V21 L1 17Z" fill="#d0d0d0"/><path d="M1 4 L6 6 V12.5 L1 10.5Z" fill="#f07a10"/><path d="M6 6 L11 8 V14.5 L6 12.5Z" fill="#f0f0f0"/><path d="M1 10.5 L6 12.5 V19 L1 17Z" fill="#1a9a30"/><path d="M6 12.5 L11 14.5 V21 L6 19Z" fill="#d8202a"/>
  <path d="M11 8 L21 4 V17 L11 21Z" fill="#1a9a30"/><path d="M11 8 L16 6 V12.5 L11 14.5Z" fill="#1a70d0"/><path d="M16 6 L21 4 V10.5 L16 12.5Z" fill="#1a9a30"/><path d="M11 14.5 L16 12.5 V19 L11 21Z" fill="#1a9a30"/><path d="M16 12.5 L21 10.5 V17 L16 19Z" fill="#d8202a"/>
  <path d="M1 4 L11 8 L21 4 M11 8 V21 M6 6 V19 M16 6 V19 M1 10.5 L11 14.5 L21 10.5" fill="none" stroke="#111" stroke-width=".8"/>
 </svg>
 <!-- store -->
 <svg class="a" style="left:257px;top:8px" width="24" height="24" viewBox="0 0 24 24"><path d="M7 6 V4 Q7 0.8 12 0.8 Q17 0.8 17 4 V6" fill="none" stroke="#fff" stroke-width="1.4"/><path d="M0.5 6 H23.5 V21.5 Q23.5 23 22 23 H2 Q0.5 23 0.5 21.5Z" fill="#fff"/><rect x="6" y="9" width="5.3" height="5.3" fill="#f04e23"/><rect x="12.4" y="9" width="5.3" height="5.3" fill="#7eb900"/><rect x="6" y="15.3" width="5.3" height="5.3" fill="#00a3ee"/><rect x="12.4" y="15.3" width="5.3" height="5.3" fill="#ffb700"/></svg>
 <!-- spellforce -->
 <svg class="a" style="left:306px;top:8px" width="24" height="24" viewBox="0 0 24 24"><rect x="0.5" y="0.5" width="23" height="23" fill="#a01818" stroke="#c9b890" stroke-width="1"/><rect x="2" y="2" width="20" height="20" fill="#8a1010"/><path d="M18 5 Q9 3 9 9 Q9 12 14 13 Q18 14 15 18 Q12 20 6 18" fill="none" stroke="#e8d8a8" stroke-width="2.6"/><path d="M4 7 Q3 13 6 18" fill="none" stroke="#d8c870" stroke-width="1.6"/><path d="M6 6 Q5 12 8 17" fill="none" stroke="#90b0d0" stroke-width="1"/></svg>
 <!-- explorer -->
 <svg class="a" style="left:356px;top:11px" width="22" height="18" viewBox="0 0 22 18"><path d="M0 1 H7 L8.5 2.5 H21.5 V17 H0Z" fill="#f8d878"/><path d="M0.5 1 H7 L8 2 H0.5Z" fill="#e8b840"/><path d="M4 17.5 V9.5 H17 V17.5 H13.5 V12.5 H7.5 V17.5Z" fill="#3aa8e8"/></svg>
 <!-- skype -->
 <svg class="a" style="left:405px;top:9px" width="22" height="22" viewBox="0 0 22 22"><circle cx="6" cy="6" r="5.5" fill="#00a9f0"/><circle cx="16" cy="16" r="5.5" fill="#00a9f0"/><circle cx="11" cy="11" r="9.6" fill="#00a9f0"/><path d="M15 7.5 Q13.5 5.5 11 5.5 Q7 5.5 7 8.3 Q7 10.5 11 11 Q15 11.5 15 13.8 Q15 16.5 11 16.5 Q8 16.5 6.8 14.3" fill="none" stroke="#fff" stroke-width="2.5" stroke-linecap="round"/></svg>
 <!-- discord -->
 <svg class="a" style="left:455px;top:10px" width="20" height="21" viewBox="0 0 20 21"><path d="M2 0 H18 Q20 0 20 2 V21 L16 17 H2 Q0 17 0 15 V2 Q0 0 2 0Z" fill="#7289da"/><path d="M4 12 Q3.5 8 6 5.5 Q8 5 8.5 5.5 Q10 5.2 11.5 5.5 Q12 5 14 5.5 Q16.5 8 16 12 Q14.5 13.2 13 13.2 L12.3 12 Q10 12.6 7.7 12 L7 13.2 Q5.5 13.2 4 12Z" fill="#fff"/><circle cx="7.8" cy="9.4" r="1.2" fill="#7289da"/><circle cx="12.2" cy="9.4" r="1.2" fill="#7289da"/></svg>
 <!-- teamspeak -->
 <svg class="a" style="left:502px;top:8px" width="24" height="24" viewBox="0 0 24 24"><path d="M6 2 Q16 -1 22 9 Q24 18 14 22 Q9 24 5 22" fill="none" stroke="#5a7090" stroke-width="1.4"/><path d="M9 2 Q19 4 19 12 Q18 19 9 20 Q12 15 10 12 Q12 7 9 2Z" fill="#b9c9dc"/><path d="M6 2 Q10 6 9 12 Q11 16 8 20 L7 20 Q8 15 6 12 Q7 6 6 2Z" fill="#4a6080"/><circle cx="3.3" cy="10" r="2.2" fill="#40c040"/></svg>
 <!-- edge -->
 <svg class="a" style="left:553px;top:9px" width="21" height="22" viewBox="0 0 21 22"><path d="M1 9 Q3 1 11 1 Q20 1 20.5 11 V13 H7 Q7 18 13 18.5 Q17 18.5 19.5 17 V20.5 Q16 22 12 22 Q2.5 21.5 2.5 13 Q2.5 7 9 5 Q5 7.5 4.8 10 H14.5 Q14.5 5.5 10.5 5.3 Q5 5.5 1 9Z" fill="#0a78d8"/></svg>
 <!-- chrome -->
 <svg class="a" style="left:601px;top:9px" width="22" height="22" viewBox="0 0 22 22"><circle cx="11" cy="11" r="10.8" fill="#1da462"/><path d="M11 11 L1.6 5.6 A10.8 10.8 0 0 1 20.4 5.6Z" fill="#dd4b3e"/><path d="M11 11 L20.4 5.6 A10.8 10.8 0 0 1 11 21.8Z" fill="#ffcd40"/><circle cx="11" cy="11" r="4.8" fill="#fff"/><circle cx="11" cy="11" r="3.8" fill="#4a8af4"/></svg>
 <!-- zoek -->
 <svg class="a" style="left:651px;top:9px" width="19" height="22" viewBox="0 0 19 22"><ellipse cx="9" cy="15.5" rx="8.2" ry="5" fill="#a8ecf8" stroke="#222" stroke-width="1.1" transform="rotate(14 9 15.5)"/><ellipse cx="9.3" cy="17" rx="7.8" ry="3.8" fill="none" stroke="#bbb" stroke-width="1" transform="rotate(14 9 15.5)"/><path d="M11.5 10.5 L12.8 8" stroke="#999" stroke-width="1.6"/><path d="M12.3 8.5 L14.8 2 Q16.5 0.4 17.8 2 L16.8 9Z" fill="#e00"/></svg>
 <div class="a" style="left:641px;top:38px;width:40px;height:2px;background:#f06ef0"></div>
 <!-- active app -->
 <div class="a" style="left:686px;top:0;width:48px;height:40px;background:#393d40"></div>
 <div class="a" style="left:686px;top:38px;width:48px;height:2px;background:#f06ef0"></div>
 <svg class="a" style="left:698px;top:10px" width="22" height="19" viewBox="0 0 22 19"><rect x="0.5" y="0.5" width="21" height="18" fill="#f4f4f4" stroke="#ddd"/><rect x="2.5" y="3" width="8.5" height="12" fill="#3c8a7a"/><rect x="2.5" y="3" width="8.5" height="5" fill="#5a9ac0"/><path d="M12.5 4 H17 M12.5 7 H17 M12.5 10 H17 M12.5 13 H17" stroke="#c8c8c8" stroke-width="1.6"/><rect x="18.5" y="3" width="1.5" height="8" fill="#3a80b0"/></svg>
 <!-- tray -->
 <svg class="a" style="left:1149px;top:3px" width="33" height="33" viewBox="0 0 33 33"><circle cx="16.5" cy="16.5" r="14.8" fill="#33a068" stroke="#fff" stroke-width="1.8"/><path d="M2 16.5 H9 L10.5 13.5 L12 17.5 L14 12 L16 5 L17.5 22 L19 26 L21 11 L22.5 15 L23.5 13.5 L25 16.5 H31" fill="none" stroke="#fff" stroke-width="1.4" stroke-linejoin="round"/></svg>
 <svg class="a" style="left:1204px;top:15px" width="14" height="9" viewBox="0 0 14 9"><path d="M1 7.5 L7 1.5 L13 7.5" fill="none" stroke="#fff" stroke-width="1.2"/></svg>
 <svg class="a" style="left:1226px;top:12px" width="18" height="16" viewBox="0 0 18 16"><path d="M1.5 5 H4 L8 1.5 V14.5 L4 11 H1.5Z" fill="none" stroke="#fff" stroke-width="1.1"/><path d="M10 6 Q11.3 8 10 10" fill="none" stroke="#fff" stroke-width="1.1"/><path d="M12.5 3.5 Q15 8 12.5 12.5" fill="none" stroke="#aaa" stroke-width="1"/><path d="M15 1.5 Q18.5 8 15 14.5" fill="none" stroke="#888" stroke-width="1"/></svg>
 <div class="a" style="left:1240px;top:4px;width:80px;text-align:center;color:#fff;font-size:11.5px;line-height:15px">8:34</div>
 <div class="a" style="left:1240px;top:20px;width:80px;text-align:center;color:#fff;font-size:11.2px;line-height:16px">11.06.2018</div>
 <div class="a" style="left:1313px;top:0;width:40px;height:40px;background:#0c171c"></div>
 <svg class="a" style="left:1324px;top:11px" width="26" height="26" viewBox="0 0 26 26"><path d="M1 1 H17 V12 H9 L4 16 V12 H1Z" fill="#fff"/><path d="M3.5 4 H14.5 M3.5 6.7 H14.5 M3.5 9.4 H11" stroke="#111" stroke-width="1.1"/><circle cx="16.5" cy="16.3" r="7.8" fill="#2b2b2b" stroke="#777" stroke-width="1"/><text x="16.5" y="20.5" text-anchor="middle" font-family="Liberation Sans" font-size="11.5" fill="#fff">2</text></svg>
 <div class="a" style="left:1361px;top:0;width:1px;height:40px;background:#5a6266"></div>
</div>
</body></html>
